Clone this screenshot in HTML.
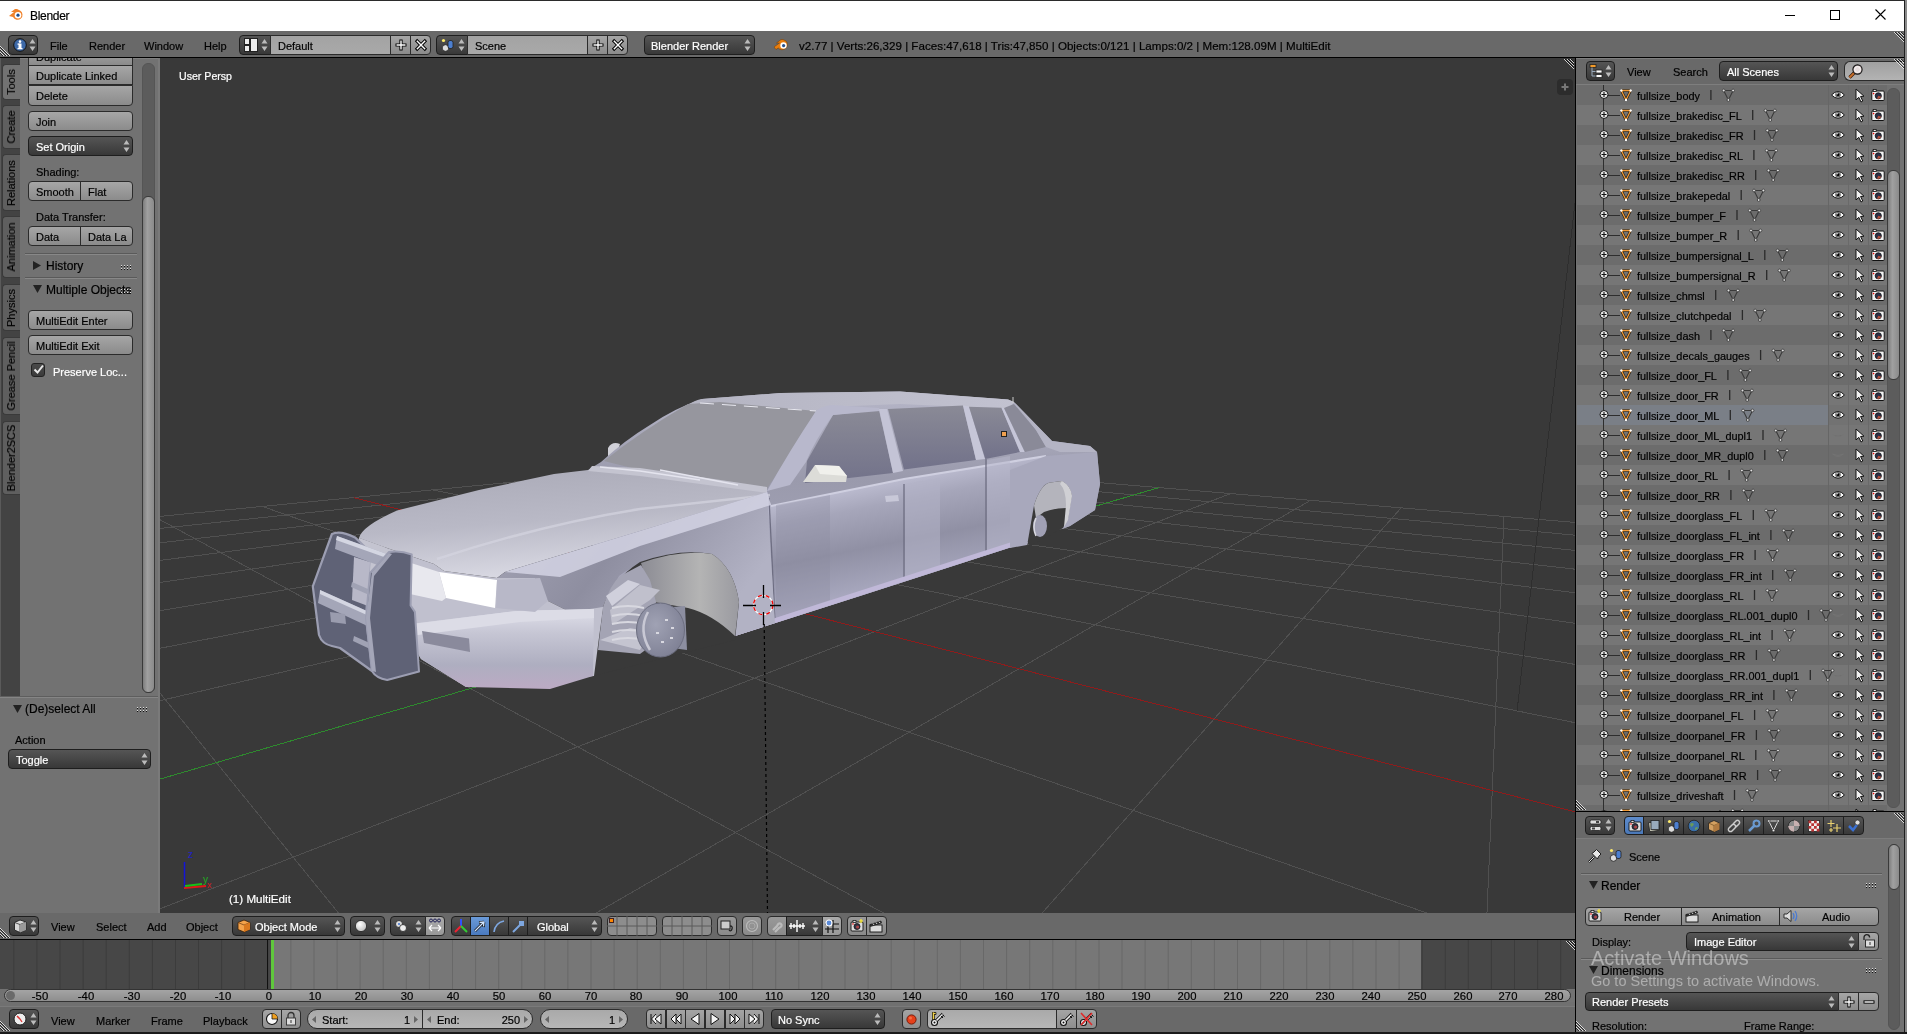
<!DOCTYPE html><html><head><meta charset='utf-8'><style>
*{box-sizing:border-box}
body{margin:0;width:1907px;height:1034px;overflow:hidden;position:relative;background:#727272;font-family:"Liberation Sans",sans-serif;font-size:11px;color:#000}
.a{position:absolute}
.t{position:absolute;white-space:nowrap;-webkit-text-stroke:0.2px currentColor;will-change:transform}
.bt{position:absolute;background:linear-gradient(#a6a6a6,#8b8b8b);border:1px solid #2b2b2b;border-radius:4px}
.mn{position:absolute;background:linear-gradient(#555,#383838);border:1px solid #1e1e1e;border-radius:4px}
.nm{position:absolute;background:linear-gradient(#a9a9a9,#b9b9b9);border:1px solid #2b2b2b;border-radius:4px}
svg{position:absolute;overflow:visible}
</style></head><body><div class=a style="left:0px;top:0px;width:1907px;height:1px;background:#2b2b2b"></div>
<div class=a style="left:0px;top:1px;width:1907px;height:30px;background:#fff"></div>
<svg style="left:8px;top:7px" width="16" height="14" viewBox="0 0 16 14">
<path d="M1 9 L6 5 L3 5 L7 2 L9 2 L12 3.5 A5 5 0 1 1 5 10 Z" fill="#f0822a"/>
<circle cx="10" cy="8.2" r="3.3" fill="#fff"/><circle cx="10" cy="8.2" r="1.6" fill="#1b4d8f"/></svg>
<div class=t style="left:29.5px;top:8.5px;line-height:14px;font-size:12px;letter-spacing:-0.3px;color:#000">Blender</div>
<div class=a style="left:1785px;top:15px;width:10px;height:1px;background:#000"></div>
<div class=a style="left:1830px;top:10px;width:10px;height:10px;border:1px solid #000"></div>
<svg style="left:1875px;top:9px" width="12" height="12"><path d="M0.5 0.5 L10.5 10.5 M10.5 0.5 L0.5 10.5" stroke="#000" stroke-width="1.1"/></svg>
<div class=a style="left:1904px;top:0px;width:1px;height:1034px;background:#1f1f1f"></div>
<div class=a style="left:1905px;top:0px;width:2px;height:1034px;background:#8a8a8a"></div>
<div class=a style="left:0px;top:58px;width:160px;height:639px;background:#727272"></div>
<div class=a style="left:0px;top:58px;width:20px;height:639px;background:#434343"></div>
<div class=a style="left:0px;top:58px;width:1px;height:976px;background:#5a5a5a"></div>
<div class=a style="left:2px;top:64px;width:18px;height:36px;background:#727272;border-radius:4px 0 0 4px;border:1px solid #3a3a3a;border-right:none"></div>
<div class=t style="left:11px;top:82.0px;transform:translate(-50%,-50%) rotate(-90deg);line-height:12px;font-size:11px;color:#000">Tools</div>
<div class=a style="left:2px;top:105px;width:18px;height:44px;background:#5f5f5f;border-radius:4px 0 0 4px;border:1px solid #3a3a3a;border-right:none"></div>
<div class=t style="left:11px;top:127.0px;transform:translate(-50%,-50%) rotate(-90deg);line-height:12px;font-size:11px;color:#000">Create</div>
<div class=a style="left:2px;top:154px;width:18px;height:57px;background:#5f5f5f;border-radius:4px 0 0 4px;border:1px solid #3a3a3a;border-right:none"></div>
<div class=t style="left:11px;top:182.5px;transform:translate(-50%,-50%) rotate(-90deg);line-height:12px;font-size:11px;color:#000">Relations</div>
<div class=a style="left:2px;top:216px;width:18px;height:62px;background:#5f5f5f;border-radius:4px 0 0 4px;border:1px solid #3a3a3a;border-right:none"></div>
<div class=t style="left:11px;top:247.0px;transform:translate(-50%,-50%) rotate(-90deg);line-height:12px;font-size:11px;color:#000">Animation</div>
<div class=a style="left:2px;top:284px;width:18px;height:47px;background:#5f5f5f;border-radius:4px 0 0 4px;border:1px solid #3a3a3a;border-right:none"></div>
<div class=t style="left:11px;top:307.5px;transform:translate(-50%,-50%) rotate(-90deg);line-height:12px;font-size:11px;color:#000">Physics</div>
<div class=a style="left:2px;top:337px;width:18px;height:78px;background:#5f5f5f;border-radius:4px 0 0 4px;border:1px solid #3a3a3a;border-right:none"></div>
<div class=t style="left:11px;top:376.0px;transform:translate(-50%,-50%) rotate(-90deg);line-height:12px;font-size:11px;color:#000">Grease Pencil</div>
<div class=a style="left:2px;top:421px;width:18px;height:74px;background:#5f5f5f;border-radius:4px 0 0 4px;border:1px solid #3a3a3a;border-right:none"></div>
<div class=t style="left:11px;top:458.0px;transform:translate(-50%,-50%) rotate(-90deg);line-height:12px;font-size:11px;color:#000">Blender2SCS</div>
<div class=a style="left:20px;top:58px;width:140px;height:639px;background:#727272"></div>
<div class=a style="left:158px;top:58px;width:2px;height:639px;background:#7a7a7a"></div>
<div class=a style="left:20px;top:58px;width:138px;height:1px;background:#808080"></div>
<div class=a style="left:142px;top:63px;width:13px;height:630px;background:#5c5c5c;border-radius:6px;border:1px solid #555"></div>
<div class=a style="left:142px;top:196px;width:13px;height:497px;background:linear-gradient(90deg,#7d7d7d,#a0a0a0 40%,#8a8a8a);border-radius:6px;border:1px solid #3a3a3a"></div>
<div class=bt style="left:28px;top:47px;width:105px;height:19px;border-radius:0;"></div>
<div class=t style="left:36px;top:50.0px;line-height:14px;color:#000;">Duplicate</div>
<div class=bt style="left:28px;top:65px;width:105px;height:20px;border-radius:0;"></div>
<div class=t style="left:36px;top:68.5px;line-height:14px;color:#000;">Duplicate Linked</div>
<div class=bt style="left:28px;top:85px;width:105px;height:21px;border-radius:0 0 4px 4px;"></div>
<div class=t style="left:36px;top:89.0px;line-height:14px;color:#000;">Delete</div>
<div class=a style="left:20px;top:58px;width:140px;height:0px;"></div>
<div class=bt style="left:28px;top:111px;width:105px;height:20px;"></div>
<div class=t style="left:36px;top:114.5px;line-height:14px;color:#000;">Join</div>
<div class=mn style="left:28px;top:136px;width:105px;height:20px;"></div>
<div class=t style="left:36px;top:139.5px;line-height:14px;color:#fff;">Set Origin</div>
<svg style="left:123px;top:139px" width="7" height="14"><path d="M0.5 5.5 L3.5 1 L6.5 5.5Z M0.5 8.5 L3.5 13 L6.5 8.5Z" fill="#bbb"/></svg>
<div class=t style="left:36px;top:165.0px;line-height:14px;">Shading:</div>
<div class=bt style="left:28px;top:181px;width:53px;height:20px;border-radius:4px 0 0 4px;"></div>
<div class=t style="left:36px;top:184.5px;line-height:14px;color:#000;">Smooth</div>
<div class=bt style="left:80px;top:181px;width:53px;height:20px;border-radius:0 4px 4px 0;"></div>
<div class=t style="left:88px;top:184.5px;line-height:14px;color:#000;">Flat</div>
<div class=t style="left:36px;top:210.0px;line-height:14px;">Data Transfer:</div>
<div class=bt style="left:28px;top:226px;width:53px;height:20px;border-radius:4px 0 0 4px;"></div>
<div class=t style="left:36px;top:229.5px;line-height:14px;color:#000;">Data</div>
<div class=bt style="left:80px;top:226px;width:53px;height:20px;border-radius:0 4px 4px 0;"></div>
<div class=t style="left:88px;top:229.5px;line-height:14px;color:#000;">Data La</div>
<div class=a style="left:25px;top:253px;width:112px;height:1px;background:#5a5a5a"></div>
<div class=a style="left:25px;top:254px;width:112px;height:1px;background:#888"></div>
<svg style="left:33px;top:261px" width="9" height="9"><path d="M0 0 L8 4.5 L0 9Z" fill="#222"/></svg>
<div class=t style="left:45.5px;top:259.0px;line-height:14px;font-size:12px">History</div>
<svg style="left:121px;top:265px" width="12" height="6"><rect x="0" y="0" width="1" height="1" fill="#ddd"/><rect x="0" y="1" width="1" height="1" fill="#111"/><rect x="0" y="3" width="1" height="1" fill="#ddd"/><rect x="0" y="4" width="1" height="1" fill="#111"/><rect x="3" y="0" width="1" height="1" fill="#ddd"/><rect x="3" y="1" width="1" height="1" fill="#111"/><rect x="3" y="3" width="1" height="1" fill="#ddd"/><rect x="3" y="4" width="1" height="1" fill="#111"/><rect x="6" y="0" width="1" height="1" fill="#ddd"/><rect x="6" y="1" width="1" height="1" fill="#111"/><rect x="6" y="3" width="1" height="1" fill="#ddd"/><rect x="6" y="4" width="1" height="1" fill="#111"/><rect x="9" y="0" width="1" height="1" fill="#ddd"/><rect x="9" y="1" width="1" height="1" fill="#111"/><rect x="9" y="3" width="1" height="1" fill="#ddd"/><rect x="9" y="4" width="1" height="1" fill="#111"/></svg>
<div class=a style="left:25px;top:277px;width:112px;height:1px;background:#5a5a5a"></div>
<div class=a style="left:25px;top:278px;width:112px;height:1px;background:#888"></div>
<svg style="left:33px;top:285px" width="9" height="9"><path d="M0 0 L9 0 L4.5 8Z" fill="#222"/></svg>
<div class=t style="left:45.5px;top:283.0px;line-height:14px;font-size:12px">Multiple Objects</div>
<svg style="left:121px;top:289px" width="12" height="6"><rect x="0" y="0" width="1" height="1" fill="#ddd"/><rect x="0" y="1" width="1" height="1" fill="#111"/><rect x="0" y="3" width="1" height="1" fill="#ddd"/><rect x="0" y="4" width="1" height="1" fill="#111"/><rect x="3" y="0" width="1" height="1" fill="#ddd"/><rect x="3" y="1" width="1" height="1" fill="#111"/><rect x="3" y="3" width="1" height="1" fill="#ddd"/><rect x="3" y="4" width="1" height="1" fill="#111"/><rect x="6" y="0" width="1" height="1" fill="#ddd"/><rect x="6" y="1" width="1" height="1" fill="#111"/><rect x="6" y="3" width="1" height="1" fill="#ddd"/><rect x="6" y="4" width="1" height="1" fill="#111"/><rect x="9" y="0" width="1" height="1" fill="#ddd"/><rect x="9" y="1" width="1" height="1" fill="#111"/><rect x="9" y="3" width="1" height="1" fill="#ddd"/><rect x="9" y="4" width="1" height="1" fill="#111"/></svg>
<div class=bt style="left:28px;top:310px;width:105px;height:20px;"></div>
<div class=t style="left:36px;top:313.5px;line-height:14px;color:#000;">MultiEdit Enter</div>
<div class=bt style="left:28px;top:335px;width:105px;height:20px;"></div>
<div class=t style="left:36px;top:338.5px;line-height:14px;color:#000;">MultiEdit Exit</div>
<div class=a style="left:31px;top:363px;width:14px;height:14px;border-radius:3px;background:linear-gradient(#4a4a4a,#3a3a3a);border:1px solid #222"></div>
<svg style="left:32px;top:363px" width="13" height="12"><path d="M2.5 6.5 L5.5 9.5 L11 2.5" stroke="#e8e8e8" stroke-width="2" fill="none"/></svg>
<div class=t style="left:53px;top:364.5px;line-height:14px;color:#fff">Preserve Loc...</div>
<div class=a style="left:0px;top:31px;width:1904px;height:26px;background:#696969"></div>
<div class=a style="left:0px;top:57px;width:1904px;height:1px;background:#000"></div>
<svg style="left:0px;top:46px" width="10" height="10"><path d="M0 0 L10 10" stroke="#fff" stroke-width="0.9" opacity="0.85"/><path d="M0 1 L9 10" stroke="#000" stroke-width="0.9" opacity="0.7"/><path d="M0 3 L7 10" stroke="#fff" stroke-width="0.9" opacity="0.85"/><path d="M0 4 L6 10" stroke="#000" stroke-width="0.9" opacity="0.7"/><path d="M0 6 L4 10" stroke="#fff" stroke-width="0.9" opacity="0.85"/><path d="M0 7 L3 10" stroke="#000" stroke-width="0.9" opacity="0.7"/></svg>
<div class=mn style="left:8px;top:35px;width:30px;height:20px;"></div>
<svg style="left:13px;top:38px" width="14" height="14"><circle cx="7" cy="7" r="6.3" fill="#3d69a8" stroke="#111" stroke-width="1"/>
<rect x="5.5" y="5.5" width="3" height="5" fill="#fff"/><rect x="4.5" y="10" width="5" height="1.3" fill="#fff"/><rect x="4.5" y="5.5" width="2" height="1.2" fill="#fff"/><circle cx="7" cy="3.6" r="1.3" fill="#fff"/></svg>
<svg style="left:29px;top:38px" width="7" height="14"><path d="M0.5 5.5 L3.5 1 L6.5 5.5Z M0.5 8.5 L3.5 13 L6.5 8.5Z" fill="#bbb"/></svg>
<div class=t style="left:50px;top:38.5px;line-height:14px;">File</div>
<div class=t style="left:88.5px;top:38.5px;line-height:14px;">Render</div>
<div class=t style="left:143.5px;top:38.5px;line-height:14px;">Window</div>
<div class=t style="left:203.5px;top:38.5px;line-height:14px;">Help</div>
<div class=mn style="left:239px;top:35px;width:32px;height:20px;border-radius:4px 0 0 4px;"></div>
<svg style="left:244px;top:38px" width="14" height="14"><rect x="0.5" y="0.5" width="5" height="6" fill="#eee" stroke="#222"/><rect x="0.5" y="7.5" width="5" height="6" fill="#eee" stroke="#222"/><rect x="6.5" y="0.5" width="7" height="13" fill="#eee" stroke="#222"/></svg>
<svg style="left:261px;top:38px" width="7" height="14"><path d="M0.5 5.5 L3.5 1 L6.5 5.5Z M0.5 8.5 L3.5 13 L6.5 8.5Z" fill="#bbb"/></svg>
<div class=nm style="left:270px;top:35px;width:121px;height:20px;border-radius:0;background:linear-gradient(#a3a3a3,#a9a9a9)"></div>
<div class=t style="left:278px;top:38.5px;line-height:14px;color:#000;">Default</div>
<div class=bt style="left:390px;top:35px;width:21px;height:20px;border-radius:0;"></div>
<div class=bt style="left:410px;top:35px;width:21px;height:20px;border-radius:0 4px 4px 0;"></div>
<svg style="left:394px;top:38px" width="14" height="14"><path d="M7 1.5 V12.5 M1.5 7 H12.5" stroke="#000" stroke-width="3.2"/><path d="M7 2.5 V11.5 M2.5 7 H11.5" stroke="#fff" stroke-width="1.4"/></svg>
<svg style="left:414px;top:38px" width="14" height="14"><path d="M2 2 L12 12 M12 2 L2 12" stroke="#000" stroke-width="3.2"/><path d="M2.8 2.8 L11.2 11.2 M11.2 2.8 L2.8 11.2" stroke="#fff" stroke-width="1.4"/></svg>
<div class=mn style="left:436px;top:35px;width:32px;height:20px;border-radius:4px 0 0 4px;"></div>
<svg style="left:441px;top:38px" width="14" height="14"><circle cx="4.5" cy="10" r="3.3" fill="#ddd" stroke="#222" stroke-width="0.8"/><rect x="7" y="2.5" width="5" height="8" rx="2" fill="#4c7fd0" stroke="#222" stroke-width="0.8"/><circle cx="2.5" cy="2.5" r="1.6" fill="#ffec6b"/></svg>
<svg style="left:458px;top:38px" width="7" height="14"><path d="M0.5 5.5 L3.5 1 L6.5 5.5Z M0.5 8.5 L3.5 13 L6.5 8.5Z" fill="#bbb"/></svg>
<div class=nm style="left:467px;top:35px;width:121px;height:20px;border-radius:0;background:linear-gradient(#a3a3a3,#a9a9a9)"></div>
<div class=t style="left:475px;top:38.5px;line-height:14px;color:#000;">Scene</div>
<div class=bt style="left:587px;top:35px;width:21px;height:20px;border-radius:0;"></div>
<div class=bt style="left:607px;top:35px;width:21px;height:20px;border-radius:0 4px 4px 0;"></div>
<svg style="left:591px;top:38px" width="14" height="14"><path d="M7 1.5 V12.5 M1.5 7 H12.5" stroke="#000" stroke-width="3.2"/><path d="M7 2.5 V11.5 M2.5 7 H11.5" stroke="#fff" stroke-width="1.4"/></svg>
<svg style="left:611px;top:38px" width="14" height="14"><path d="M2 2 L12 12 M12 2 L2 12" stroke="#000" stroke-width="3.2"/><path d="M2.8 2.8 L11.2 11.2 M11.2 2.8 L2.8 11.2" stroke="#fff" stroke-width="1.4"/></svg>
<div class=mn style="left:644px;top:35px;width:111px;height:20px;"></div>
<div class=t style="left:651px;top:38.5px;line-height:14px;color:#fff;">Blender Render</div>
<svg style="left:744px;top:38px" width="7" height="14"><path d="M0.5 5.5 L3.5 1 L6.5 5.5Z M0.5 8.5 L3.5 13 L6.5 8.5Z" fill="#bbb"/></svg>
<svg style="left:773px;top:37px" width="17" height="16"><path d="M1 10 L6.5 6 L3.5 6 L8 2.5 L10 2.5 L13 4 A5.2 5.2 0 1 1 5.2 11 L3 12.5 Z" fill="#e87d0d" stroke="#6b3a08" stroke-width="0.5"/><circle cx="10.5" cy="8.5" r="3.2" fill="#fff"/><circle cx="10.6" cy="8.6" r="1.6" fill="#24518f"/></svg>
<div class=t style="left:799px;top:38.5px;line-height:14px;font-size:11.6px">v2.77 | Verts:26,329 | Faces:47,618 | Tris:47,850 | Objects:0/121 | Lamps:0/2 | Mem:128.09M | MultiEdit</div>
<svg style="left:1894px;top:32px;" width="10" height="10"><path d="M0 0 L10 10" stroke="#fff" stroke-width="0.9" opacity="0.85"/><path d="M1 0 L10 9" stroke="#000" stroke-width="0.9" opacity="0.7"/><path d="M3 0 L10 7" stroke="#fff" stroke-width="0.9" opacity="0.85"/><path d="M4 0 L10 6" stroke="#000" stroke-width="0.9" opacity="0.7"/><path d="M6 0 L10 4" stroke="#fff" stroke-width="0.9" opacity="0.85"/><path d="M7 0 L10 3" stroke="#000" stroke-width="0.9" opacity="0.7"/></svg>
<div class=a style="left:160px;top:58px;width:1415px;height:855px;background:#393939;overflow:hidden"><svg style="left:0;top:0" width="1415" height="855" viewBox="0 0 1415 855"><g shape-rendering="crispEdges"><line x1="-1452.9" y1="599.4" x2="621.6" y2="398.0" stroke="#505050" stroke-width="1"/><line x1="-1452.9" y1="599.4" x2="-45626.2" y2="10690.9" stroke="#505050" stroke-width="1"/><line x1="-1657.1" y1="646.1" x2="655.8" y2="400.9" stroke="#505050" stroke-width="1"/><line x1="-1029.3" y1="558.3" x2="-39136.8" y2="11991.2" stroke="#505050" stroke-width="1"/><line x1="-1944.8" y1="711.8" x2="692.8" y2="404.0" stroke="#505050" stroke-width="1"/><line x1="-716.9" y1="528.0" x2="-23517.4" y2="10474.9" stroke="#505050" stroke-width="1"/><line x1="-2380.6" y1="811.3" x2="733.0" y2="407.3" stroke="#505050" stroke-width="1"/><line x1="-477.0" y1="504.7" x2="-11523.9" y2="9310.5" stroke="#505050" stroke-width="1"/><line x1="-3118.5" y1="979.9" x2="776.8" y2="411.0" stroke="#505050" stroke-width="1"/><line x1="-287.0" y1="486.2" x2="-2025.1" y2="8388.4" stroke="#505050" stroke-width="1"/><line x1="-4639.2" y1="1327.3" x2="824.6" y2="415.0" stroke="#505050" stroke-width="1"/><line x1="-132.9" y1="471.3" x2="5684.1" y2="7640.0" stroke="#505050" stroke-width="1"/><line x1="-9595.9" y1="2459.7" x2="877.1" y2="419.4" stroke="#505050" stroke-width="1"/><line x1="-5.2" y1="458.9" x2="12065.8" y2="7020.4" stroke="#505050" stroke-width="1"/><line x1="-19384.2" y1="5172.4" x2="935.0" y2="424.2" stroke="#505050" stroke-width="1"/><line x1="102.2" y1="448.4" x2="17435.8" y2="6499.1" stroke="#505050" stroke-width="1"/><line x1="-12605.5" y1="5739.6" x2="1070.5" y2="435.6" stroke="#505050" stroke-width="1"/><line x1="272.9" y1="431.9" x2="4641.8" y2="1322.5" stroke="#505050" stroke-width="1"/><line x1="-8600.0" y1="6074.7" x2="1150.6" y2="442.3" stroke="#505050" stroke-width="1"/><line x1="341.8" y1="425.2" x2="3359.0" y2="934.7" stroke="#505050" stroke-width="1"/><line x1="-4077.8" y1="6453.1" x2="1241.1" y2="449.9" stroke="#505050" stroke-width="1"/><line x1="402.5" y1="419.3" x2="2795.6" y2="764.4" stroke="#505050" stroke-width="1"/><line x1="1068.0" y1="6883.7" x2="1344.0" y2="458.5" stroke="#505050" stroke-width="1"/><line x1="456.3" y1="414.1" x2="2479.0" y2="668.7" stroke="#505050" stroke-width="1"/><line x1="6975.9" y1="7378.0" x2="1462.2" y2="468.4" stroke="#505050" stroke-width="1"/><line x1="504.3" y1="409.4" x2="2276.1" y2="607.4" stroke="#505050" stroke-width="1"/><line x1="13828.8" y1="7951.4" x2="1599.2" y2="479.8" stroke="#505050" stroke-width="1"/><line x1="547.3" y1="405.2" x2="2135.0" y2="564.7" stroke="#505050" stroke-width="1"/><line x1="21873.1" y1="8624.4" x2="1760.1" y2="493.3" stroke="#505050" stroke-width="1"/><line x1="586.3" y1="401.5" x2="2031.2" y2="533.4" stroke="#505050" stroke-width="1"/><line x1="31449.1" y1="9425.7" x2="1951.6" y2="509.3" stroke="#505050" stroke-width="1"/><line x1="621.6" y1="398.0" x2="1951.6" y2="509.3" stroke="#505050" stroke-width="1"/><line x1="-16178.0" y1="5440.7" x2="999.1" y2="429.6" stroke="#2e8a2e" stroke-width="1"/><line x1="193.8" y1="439.6" x2="10454.3" y2="3079.5" stroke="#8e1c1c" stroke-width="1"/><line x1="1415" y1="144.7" x2="1357" y2="653.4" stroke="#2e2e2e" stroke-width="1"/></g><g transform="translate(-160 -58)"><defs>
<linearGradient id="gHood" x1="0" y1="0" x2="0.3" y2="1"><stop offset="0" stop-color="#a9a9b6"/><stop offset="0.55" stop-color="#b9b9c6"/><stop offset="1" stop-color="#d8d8e2"/></linearGradient>
<linearGradient id="gSide" x1="0" y1="0" x2="0" y2="1"><stop offset="0" stop-color="#b6b6c8"/><stop offset="0.35" stop-color="#9a9aac"/><stop offset="0.7" stop-color="#a4a4b8"/><stop offset="1" stop-color="#b8b4cc"/></linearGradient>
<linearGradient id="gFender" x1="0" y1="0" x2="1" y2="0.4"><stop offset="0" stop-color="#a7a7b8"/><stop offset="0.5" stop-color="#8e8ea0"/><stop offset="1" stop-color="#b2b2c4"/></linearGradient>
<linearGradient id="gRoof" x1="0" y1="0" x2="1" y2="0"><stop offset="0" stop-color="#b4b4c2"/><stop offset="1" stop-color="#c2c2d0"/></linearGradient>
<linearGradient id="gWin" x1="0" y1="0" x2="0" y2="1"><stop offset="0" stop-color="#8a8a96"/><stop offset="1" stop-color="#72728a"/></linearGradient>
<linearGradient id="gBump" x1="0" y1="0" x2="0" y2="1"><stop offset="0" stop-color="#e0e0ea"/><stop offset="0.3" stop-color="#c6c6d4"/><stop offset="0.7" stop-color="#aeaec0"/><stop offset="1" stop-color="#bcaac4"/></linearGradient>
<linearGradient id="gBar" x1="0" y1="0" x2="1" y2="0"><stop offset="0" stop-color="#6a6c80"/><stop offset="1" stop-color="#5c5e72"/></linearGradient>
<linearGradient id="gLiner" x1="0" y1="0" x2="1" y2="0"><stop offset="0" stop-color="#8c8c94"/><stop offset="0.6" stop-color="#b4b4b4"/><stop offset="1" stop-color="#9a9aa0"/></linearGradient>
<radialGradient id="gDisc" cx="0.4" cy="0.4" r="0.7"><stop offset="0" stop-color="#a0a2b4"/><stop offset="1" stop-color="#7c7e92"/></radialGradient>
<linearGradient id="gSide2" gradientUnits="userSpaceOnUse" x1="900" y1="478" x2="924" y2="600"><stop offset="0" stop-color="#bcbcd0"/><stop offset="0.18" stop-color="#a6a6ba"/><stop offset="0.5" stop-color="#9090a4"/><stop offset="0.8" stop-color="#a4a4ba"/><stop offset="1" stop-color="#b6b2cc"/></linearGradient></defs><path d="M608 448 Q612 441 620 444 L617 454 L608 457Z" fill="#d0d0d8" /><path d="M588 470 L601 462 Q625 440 650 425 Q675 408 702 399 L781 393 L900 391.5 L1008 399.5 L1014 402 L1052 441 L1090 446 L1097 452 L1100 484 L1095 510 L1070 526 L1062 529 L1032 533 L1027 542 L860 596 L735 636 L600 640 Z" fill="url(#gSide)" /><path d="M688 405 Q695 400 702 399 L781 393 L900 391.5 L1008 399.5 L1014 402 L1008 409 L900 404 L828 407 L816 411 Z" fill="url(#gRoof)" /><path d="M604 461 Q640 432 688 404 L720 402 L816 411 Q800 440 766 490 L700 478 L640 470 Z" fill="#96969e" /><path d="M700 403 L816 411" fill="none" stroke="#e8e8f0" stroke-width="1" stroke-dasharray="14 8"/><path d="M833 415 L879 410 L893 473 L805 483 L807 461 Z" fill="url(#gWin)" /><path d="M816 411 Q822 406 832 405 L879 408 L880 411 L833 415 Q815 440 806 462 L790 485 L767 491 Q790 450 816 411Z" fill="#b8b8cc" /><path d="M879 409 L887 409 L903 471 L893 473Z" fill="#c4c4d6" /><path d="M888 409 L963 405.5 L976 460 L904 469.5 Z" fill="url(#gWin)" /><path d="M963 405.5 L969 406.5 L985 459 L976 460Z" fill="#c6c6d8" /><path d="M969 406.7 L1001.5 407.8 L1020 452 L985.3 459Z" fill="url(#gWin)" /><path d="M1001.5 407.8 L1004 408 L1024.7 452 L1020 452Z" fill="#c6c6d8" /><path d="M1004 408 L1014 404 L1036 430 L1046 447 L1025 452Z" fill="#8a8a98" /><path d="M1014 402 L1052 441 L1090 446 L1097 452 L1060 452 L1046 447 L1036 430 Z" fill="#b4b4c4" /><path d="M803 482 L815 465 L839 466 L847 476 L846 482 Z" fill="#dcdcd8" /><path d="M815 465 L839 466 L847 476 L820 474Z" fill="#f0f0ec" /><path d="M767 491 L771 506 L904 479 L1046 456 L1062 470 L1064 482 L1045 484 L1036 503 L1032 533 L1027 542 L860 596 L735 636 Q739 600 740 560 Z" fill="url(#gSide2)" /><path d="M771 506 L904 479 L1046 456" fill="none" stroke="#cfcfe0" stroke-width="2.2"/><path d="M769 498 Q772 560 775 620" fill="none" stroke="#6e6e82" stroke-width="1.3"/><path d="M904 484 L904 579" fill="none" stroke="#6e6e82" stroke-width="1.3"/><path d="M986 459 L986 552" fill="none" stroke="#6e6e82" stroke-width="1.3"/><path d="M905 484 L940 478 L940 568 L905 579Z" fill="#b2b2c6" opacity="0.55"/><path d="M987 460 L1010 456 L1012 545 L987 552Z" fill="#b8b8cc" opacity="0.5"/><path d="M776 505 L830 495 L830 600 L776 618Z" fill="#8c8ca0" opacity="0.35"/><path d="M735 631 L1027 537 L1027 542 L735 636Z" fill="#c0b8d8" /><path d="M885 496 L898 495 L899 501 L886 502Z" fill="#c8c8d8" /><path d="M1015 476 L1025 475 L1026 481 L1016 482Z" fill="#c8c8d8" /><path d="M1046 456 L1097 452 L1100 484 L1095 510 L1070 526 L1062 529 L1064 482 L1045 484 L1036 503 L1032 533 L1027 545 L1010 548 L1010 470Z" fill="#a8a8bc" /><path d="M1027.7 542 L1034 505.5 Q1040 486 1049 482.8 L1061.7 480.9 Q1070 485 1071.8 495.4 L1068 518 L1063 528 L1030 546Z" fill="#393939" /><path d="M1034 505.5 Q1040 486 1049 482.8 L1061.7 480.9 Q1070 485 1071.8 495.4 L1068 518 L1066 508 Q1055 508 1044 512 L1036 518Z" fill="#b4b4bc" /><path d="M1062 481 Q1071 486 1072 496 L1068 520 L1064 527 L1066 505 Q1066 490 1060 484Z" fill="#d0d0d4" /><ellipse cx="1040" cy="526" rx="7" ry="11" fill="#a0a0b4"/><path d="M1036 518 Q1032 527 1036 536" fill="none" stroke="#d8d8e0" stroke-width="1.5"/><path d="M359 538 Q362 526 397 510.5 L479 490 L554 474 L588 470 L640 470 L767 491 L767 493 L640 531 L505 572 L497 578 L444 571 L434 564 L384 547 Z" fill="url(#gHood)" /><path d="M437 559 Q540 525 640 509 L770 495" fill="none" stroke="#d4d4e0" stroke-width="2.5" opacity="0.7"/><path d="M592 466 L640 468 L767 487 L767 493 L640 476 L588 471Z" fill="#c4c4d0" /><path d="M600 467 L640 471 L700 480 M660 470 L738 485" fill="none" stroke="#e4e4ee" stroke-width="1.6"/><path d="M497 578 L505 572 L640 531 L767 492 L775 623 L735 636 L739 602 Q735 570 712 554 L681 551.6 Q640 560 619 576 L603 607 L593 610 L570 612 L548 601 L535 578Z" fill="url(#gFender)" /><path d="M505 572 L640 531 L767 492 L771 505 L640 546 L560 577Z" fill="#d4d4e4" opacity="0.85"/><path d="M603 607 Q612 580 640 562 Q680 548 712 554 Q734 568 739 602 L735 640 L593 676Z" fill="#393939" /><path d="M641 563 Q680 549 712 554 Q734 568 739 602 L735 636 Q712 614 688 608 L654 602 L648 585Z" fill="url(#gLiner)" /><path d="M603 607 Q610 585 620 576 L641 565 L650 580 L656 602 L648 648 L640 654 L598 650Z" fill="#a4a4b4" /><path d="M606 596 L628 580 L640 584 L612 606Z" fill="#d0d0dc" /><path d="M600 640 L630 628 L650 632 L640 650Z" fill="#c4c4d0" /><path d="M610 610 L640 585 L660 590 L650 600 L612 625Z" fill="#c0c0cc" /><path d="M612 608 Q628 604 644 608" fill="none" stroke="#d8d8e0" stroke-width="2"/><path d="M612 616 Q628 612 644 616" fill="none" stroke="#d8d8e0" stroke-width="2"/><path d="M612 624 Q628 620 644 624" fill="none" stroke="#d8d8e0" stroke-width="2"/><path d="M612 632 Q628 628 644 632" fill="none" stroke="#d8d8e0" stroke-width="2"/><path d="M612 640 Q628 636 644 640" fill="none" stroke="#d8d8e0" stroke-width="2"/><path d="M672 607 L685 606 L687 650 L672 648Z" fill="#8c8ea0" /><ellipse cx="660.5" cy="630" rx="24" ry="27" fill="url(#gDisc)" stroke="#6c6e80" stroke-width="1"/><path d="M648 612 Q638 630 650 650" stroke="#c8c8d4" stroke-width="2.5" fill="none"/><rect x="665" y="619" width="3" height="2" fill="#d8d8e0"/><rect x="671" y="627" width="3" height="2" fill="#d8d8e0"/><rect x="670" y="637" width="3" height="2" fill="#d8d8e0"/><rect x="661" y="641" width="3" height="2" fill="#d8d8e0"/><rect x="656" y="632" width="3" height="2" fill="#d8d8e0"/><path d="M359 538 L384 547 L434 564 L444 571 L497 578 L535 578 L548 601 L570 612 L603 607 L594 676 L466 687 L421 659 L402 625 L380 620 L352 590Z" fill="#c0c0ce" /><path d="M402 625 L517 611 L594 609 L593 676 L550 689 L466 687 L421 659 Z" fill="url(#gBump)" /><path d="M404 625 L517 611 L594 609 L594 618 L520 622 L410 636Z" fill="#dcdce6" /><path d="M422 631 L469 638.5 L470 652 L424 643Z" fill="#8a8a9c" /><path d="M439 572 L497 580 L495 608 L446 598Z" fill="#ffffff" /><path d="M411 563 L439 572 L446 598 L442 601 L410 594Z" fill="#e8e8ee" /><path d="M497 580 L540 578 L548 601 L535 612 L496 608Z" fill="#b8b8c8" /><path d="M359 538 L384 547 L411 563 L410 594 L402 625 L380 620 L352 590Z" fill="#c4c4d0" /><path d="M331.9 534 Q340 530 355 537.4 L370 552 L366 618 L372 671 L340 648 L331.9 646 Q322 644 319 635 L312.8 586.4 Z" fill="#5f6276" stroke="#9c9eb2" stroke-width="2.2" stroke-linejoin="round"/><path d="M354 557 L370 562 L368 606 L352 600Z" fill="#b8b8c8" /><path d="M337 536 L398 558 L396 572 L335 549Z" fill="#a4a6b8" /><path d="M337 536 L398 558 L398 562 L336 540Z" fill="#d4d6e2" /><path d="M320 590 L378 616 L376 630 L318 603Z" fill="#a4a6b8" /><path d="M320 590 L378 616 L378 620 L320 594Z" fill="#d4d6e2" /><path d="M352 582 L368 589 L367 594 L351 587Z" fill="#a0a2b4" /><path d="M354 636 L372 644 L370 649 L353 641Z" fill="#a0a2b4" /><path d="M330 612 L345 614 L346 624 L331 622Z" fill="#9a9cae" /><path d="M370 573 L389 552 Q400 550 411.7 554.5 L410.6 605.5 L414.9 611.9 L419 671.5 L387.2 680 Q376 678 372.3 671.5 L366 618.3 Z" fill="#5f6276" stroke="#9c9eb2" stroke-width="2" stroke-linejoin="round"/><path d="M372 572 L389 553 L392 554 L374 576 L370 618 L376 672 L372 671 L366 618Z" fill="#a4a6b8" /><path d="M1013 397 L1013 403" fill="none" stroke="#ccc" stroke-width="1"/><rect x="1001.5" y="431.5" width="5" height="5" fill="#f0a050" stroke="#222" stroke-width="1"/></g><g transform="translate(-160 -58)"><line x1="764.2" y1="624" x2="767.5" y2="913" stroke="#000" stroke-width="1.2" stroke-dasharray="3 3"/><circle cx="763.2" cy="605" r="9.7" fill="none" stroke="#fff" stroke-width="1.3"/><circle cx="763.2" cy="605" r="9.7" fill="none" stroke="#e00" stroke-width="1.3" stroke-dasharray="4 4"/><path d="M743 605.5 H756 M770 605.5 H781 M763.5 585 V598 M763.5 612 V625" stroke="#000" stroke-width="1.3"/></g></svg></div>
<div class=t style="left:179px;top:68.5px;line-height:14px;color:#fff;font-size:10.6px">User Persp</div>
<div class=t style="left:229px;top:891.5px;line-height:14px;color:#fff;font-size:11.6px">(1) MultiEdit</div>
<svg style="left:176px;top:850px" width="40" height="40"><path d="M8.5 12 V38" stroke="#1414d8" stroke-width="1.5"/><path d="M8 38 L30 36" stroke="#e01818" stroke-width="2"/><path d="M9 36 L26 34" stroke="#18c018" stroke-width="2"/><text x="12" y="8" font-size="10" fill="#2020c8" font-family="Liberation Sans">z</text><text x="27" y="33" font-size="10" fill="#20b020" font-family="Liberation Sans">y</text><text x="31" y="38" font-size="9" fill="#d02020" font-family="Liberation Sans">x</text></svg>
<div class=a style="left:1557px;top:79px;width:16px;height:16px;border-radius:4px;background:#2c2c2c"></div>
<svg style="left:1561px;top:83px" width="8" height="8"><path d="M4 0.5 V7.5 M0.5 4 H7.5" stroke="#777" stroke-width="2"/></svg>
<svg style="left:1564px;top:59px;" width="10" height="10"><path d="M0 0 L10 10" stroke="#fff" stroke-width="0.9" opacity="0.85"/><path d="M1 0 L10 9" stroke="#000" stroke-width="0.9" opacity="0.7"/><path d="M3 0 L10 7" stroke="#fff" stroke-width="0.9" opacity="0.85"/><path d="M4 0 L10 6" stroke="#000" stroke-width="0.9" opacity="0.7"/><path d="M6 0 L10 4" stroke="#fff" stroke-width="0.9" opacity="0.85"/><path d="M7 0 L10 3" stroke="#000" stroke-width="0.9" opacity="0.7"/></svg>
<div class=a style="left:0px;top:697px;width:160px;height:216px;background:#727272"></div>
<div class=a style="left:0px;top:696px;width:158px;height:1px;background:#5e5e5e"></div>
<div class=a style="left:0px;top:697px;width:158px;height:1px;background:#858585"></div>
<div class=a style="left:158px;top:697px;width:2px;height:216px;background:#7a7a7a"></div>
<svg style="left:13px;top:705px" width="9" height="9"><path d="M0 0 L9 0 L4.5 8Z" fill="#222"/></svg>
<div class=t style="left:25px;top:702.0px;line-height:14px;font-size:12px">(De)select All</div>
<svg style="left:137px;top:707px" width="12" height="6"><rect x="0" y="0" width="1" height="1" fill="#ddd"/><rect x="0" y="1" width="1" height="1" fill="#111"/><rect x="0" y="3" width="1" height="1" fill="#ddd"/><rect x="0" y="4" width="1" height="1" fill="#111"/><rect x="3" y="0" width="1" height="1" fill="#ddd"/><rect x="3" y="1" width="1" height="1" fill="#111"/><rect x="3" y="3" width="1" height="1" fill="#ddd"/><rect x="3" y="4" width="1" height="1" fill="#111"/><rect x="6" y="0" width="1" height="1" fill="#ddd"/><rect x="6" y="1" width="1" height="1" fill="#111"/><rect x="6" y="3" width="1" height="1" fill="#ddd"/><rect x="6" y="4" width="1" height="1" fill="#111"/><rect x="9" y="0" width="1" height="1" fill="#ddd"/><rect x="9" y="1" width="1" height="1" fill="#111"/><rect x="9" y="3" width="1" height="1" fill="#ddd"/><rect x="9" y="4" width="1" height="1" fill="#111"/></svg>
<div class=t style="left:15px;top:733.0px;line-height:14px;">Action</div>
<div class=mn style="left:8px;top:749px;width:143px;height:20px;"></div>
<div class=t style="left:16px;top:752.5px;line-height:14px;color:#fff;">Toggle</div>
<svg style="left:141px;top:752px" width="7" height="14"><path d="M0.5 5.5 L3.5 1 L6.5 5.5Z M0.5 8.5 L3.5 13 L6.5 8.5Z" fill="#bbb"/></svg>
<div class=a style="left:0px;top:913px;width:1576px;height:26px;background:#696969"></div>
<div class=a style="left:0px;top:939px;width:1576px;height:1px;background:#000"></div>
<svg style="left:0px;top:928px" width="10" height="10"><path d="M0 0 L10 10" stroke="#fff" stroke-width="0.9" opacity="0.85"/><path d="M0 1 L9 10" stroke="#000" stroke-width="0.9" opacity="0.7"/><path d="M0 3 L7 10" stroke="#fff" stroke-width="0.9" opacity="0.85"/><path d="M0 4 L6 10" stroke="#000" stroke-width="0.9" opacity="0.7"/><path d="M0 6 L4 10" stroke="#fff" stroke-width="0.9" opacity="0.85"/><path d="M0 7 L3 10" stroke="#000" stroke-width="0.9" opacity="0.7"/></svg>
<div class=mn style="left:9px;top:916px;width:30px;height:20px;"></div>
<svg style="left:13px;top:919px" width="15" height="14"><path d="M1.5 3.5 L7 1 L13 3 L13 11 L7 13.5 L1.5 11 Z" fill="#d8d8d8" stroke="#222" stroke-width="0.9"/><path d="M1.5 3.5 L7 5.5 L13 3 M7 5.5 L7 13.5" stroke="#333" stroke-width="0.8" fill="none"/><path d="M7 5.5 L13 3 L13 11 L7 13.5Z" fill="#9a9a9a"/></svg>
<svg style="left:30px;top:919px" width="7" height="14"><path d="M0.5 5.5 L3.5 1 L6.5 5.5Z M0.5 8.5 L3.5 13 L6.5 8.5Z" fill="#bbb"/></svg>
<div class=t style="left:51px;top:920.0px;line-height:14px;">View</div>
<div class=t style="left:96px;top:920.0px;line-height:14px;">Select</div>
<div class=t style="left:147px;top:920.0px;line-height:14px;">Add</div>
<div class=t style="left:186px;top:920.0px;line-height:14px;">Object</div>
<div class=mn style="left:232px;top:916px;width:113px;height:20px;"></div>
<div class=t style="left:255px;top:919.5px;line-height:14px;color:#fff;">Object Mode</div>
<svg style="left:237px;top:919px" width="14" height="14"><path d="M1 3.5 L7 1 L13 3.5 L13 10.5 L7 13 L1 10.5Z" fill="#f3a24a" stroke="#3a2008" stroke-width="0.8"/><path d="M1 3.5 L7 6 L13 3.5" stroke="#6a3a10" stroke-width="0.7" fill="none"/><path d="M7 6 L13 3.5 L13 10.5 L7 13Z" fill="#d9781e"/></svg>
<svg style="left:334px;top:919px" width="7" height="14"><path d="M0.5 5.5 L3.5 1 L6.5 5.5Z M0.5 8.5 L3.5 13 L6.5 8.5Z" fill="#bbb"/></svg>
<div class=mn style="left:350px;top:916px;width:35px;height:20px;"></div>
<svg style="left:354px;top:919px" width="14" height="14"><defs><radialGradient id="sph" cx="0.4" cy="0.35" r="0.7"><stop offset="0" stop-color="#fff"/><stop offset="1" stop-color="#bbb"/></radialGradient></defs><circle cx="7" cy="7" r="5.6" fill="url(#sph)" stroke="#222" stroke-width="0.8"/></svg>
<svg style="left:374px;top:919px" width="7" height="14"><path d="M0.5 5.5 L3.5 1 L6.5 5.5Z M0.5 8.5 L3.5 13 L6.5 8.5Z" fill="#bbb"/></svg>
<div class=mn style="left:390px;top:916px;width:36px;height:20px;border-radius:4px 0 0 4px;"></div>
<svg style="left:394px;top:919px" width="14" height="14"><circle cx="5" cy="5" r="3.5" fill="#ddd" stroke="#222" stroke-width="0.8"/><circle cx="9" cy="9" r="3.5" fill="#eee" stroke="#222" stroke-width="0.8"/><circle cx="5" cy="5" r="1" fill="#3a6fd0"/></svg>
<svg style="left:415px;top:919px" width="7" height="14"><path d="M0.5 5.5 L3.5 1 L6.5 5.5Z M0.5 8.5 L3.5 13 L6.5 8.5Z" fill="#bbb"/></svg>
<div class=bt style="left:425px;top:916px;width:20px;height:20px;border-radius:0 4px 4px 0;background:linear-gradient(#aaa,#999)"></div>
<svg style="left:428px;top:918px" width="14" height="16"><circle cx="3" cy="2.5" r="1.5" fill="none" stroke="#225" stroke-width="1"/><circle cx="7" cy="2.5" r="1.5" fill="none" stroke="#225" stroke-width="1"/><circle cx="11" cy="2.5" r="1.5" fill="none" stroke="#225" stroke-width="1"/><path d="M1 10 H13 M1 10 L4 7 M1 10 L4 13 M13 10 L10 7 M13 10 L10 13" stroke="#fff" stroke-width="1.2" fill="none"/></svg>
<div class=mn style="left:451px;top:916px;width:20px;height:20px;border-radius:4px 0 0 4px;"></div>
<svg style="left:453px;top:918px" width="16" height="16"><path d="M8 8 V1" stroke="#3050ff" stroke-width="2"/><path d="M8 8 L2 14" stroke="#e23" stroke-width="2"/><path d="M8 8 L14 14" stroke="#3c3" stroke-width="2"/></svg>
<div class=mn style="left:470px;top:916px;width:20px;height:20px;border-radius:0;background:linear-gradient(#6a9ad8,#4a7ac0)"></div>
<svg style="left:472px;top:918px" width="16" height="16"><path d="M3 13 L12 4 M12 4 L7 4.5 M12 4 L11.5 9" stroke="#111" stroke-width="2.6" fill="none"/><path d="M3 13 L12 4 M12 4 L7.5 4.5 M12 4 L11.5 8.5" stroke="#cfe3ff" stroke-width="1.3" fill="none"/></svg>
<div class=mn style="left:489px;top:916px;width:20px;height:20px;border-radius:0;"></div>
<svg style="left:491px;top:918px" width="16" height="16"><path d="M3 14 Q4 5 13 3" stroke="#7ea7e0" stroke-width="1.6" fill="none"/></svg>
<div class=mn style="left:508px;top:916px;width:20px;height:20px;border-radius:0;"></div>
<svg style="left:510px;top:918px" width="16" height="16"><path d="M3 14 L10 7" stroke="#7ea7e0" stroke-width="2"/><rect x="9" y="3" width="5" height="5" fill="#7ea7e0"/></svg>
<div class=mn style="left:527px;top:916px;width:75px;height:20px;border-radius:0 4px 4px 0;"></div>
<div class=t style="left:537px;top:919.5px;line-height:14px;color:#fff;">Global</div>
<svg style="left:591px;top:919px" width="7" height="14"><path d="M0.5 5.5 L3.5 1 L6.5 5.5Z M0.5 8.5 L3.5 13 L6.5 8.5Z" fill="#bbb"/></svg>
<div class=bt style="left:607px;top:916px;width:50px;height:20px;background:#8d8d8d"></div>
<svg style="left:607px;top:916px" width="50" height="20"><path d="M10 0 V20" stroke="#5a5a5a" stroke-width="1"/><path d="M20 0 V20" stroke="#5a5a5a" stroke-width="1"/><path d="M30 0 V20" stroke="#5a5a5a" stroke-width="1"/><path d="M40 0 V20" stroke="#5a5a5a" stroke-width="1"/><path d="M0 10 H50" stroke="#5a5a5a"/></svg>
<div class=bt style="left:662px;top:916px;width:50px;height:20px;background:#8d8d8d"></div>
<svg style="left:662px;top:916px" width="50" height="20"><path d="M10 0 V20" stroke="#5a5a5a" stroke-width="1"/><path d="M20 0 V20" stroke="#5a5a5a" stroke-width="1"/><path d="M30 0 V20" stroke="#5a5a5a" stroke-width="1"/><path d="M40 0 V20" stroke="#5a5a5a" stroke-width="1"/><path d="M0 10 H50" stroke="#5a5a5a"/></svg>
<svg style="left:609px;top:918px" width="6" height="6"><rect x="0.5" y="0.5" width="4" height="4" fill="#f80" stroke="#422"/></svg>
<div class=bt style="left:717px;top:916px;width:20px;height:20px;background:linear-gradient(#999,#8a8a8a)"></div>
<svg style="left:720px;top:919px" width="14" height="14"><rect x="1" y="2" width="9" height="8" fill="#ccc" stroke="#222"/><path d="M10 7 Q13 7 12 10 Q11 13 9 11" stroke="#222" stroke-width="1.3" fill="none"/></svg>
<div class=bt style="left:742px;top:916px;width:20px;height:20px;background:linear-gradient(#999,#8a8a8a)"></div>
<svg style="left:745px;top:919px" width="14" height="14"><circle cx="7" cy="7" r="5.5" fill="none" stroke="#bbb" stroke-width="1.2"/><circle cx="7" cy="7" r="3" fill="none" stroke="#aaa" stroke-width="1"/></svg>
<div class=bt style="left:767px;top:916px;width:20px;height:20px;border-radius:4px 0 0 4px;background:linear-gradient(#999,#8a8a8a)"></div>
<svg style="left:769px;top:918px" width="16" height="16"><path d="M4 12 L8 8 Q10 4 12 6 Q14 8 10 10 L6 14" stroke="#bbb" stroke-width="2.2" fill="none"/></svg>
<div class=mn style="left:786px;top:916px;width:37px;height:20px;border-radius:0;"></div>
<svg style="left:788px;top:919px" width="18" height="14"><path d="M9 1 V13 M1 7 H17 M3 4 V10 M15 4 V10 M6 5 V9 M12 5 V9" stroke="#fff" stroke-width="1.4"/></svg>
<svg style="left:812px;top:919px" width="7" height="14"><path d="M0.5 5.5 L3.5 1 L6.5 5.5Z M0.5 8.5 L3.5 13 L6.5 8.5Z" fill="#bbb"/></svg>
<div class=bt style="left:822px;top:916px;width:20px;height:20px;border-radius:0 4px 4px 0;background:linear-gradient(#aaa,#999)"></div>
<svg style="left:824px;top:918px" width="16" height="16"><path d="M4 2 V15 M9 2 V15 M1 6 H15 M1 11 H15" stroke="#111" stroke-width="1.2"/><circle cx="5" cy="5" r="3" fill="#5a8ad8" stroke="#fff" stroke-width="1.2"/></svg>
<div class=bt style="left:847px;top:916px;width:20px;height:20px;border-radius:4px 0 0 4px;background:linear-gradient(#999,#8a8a8a)"></div>
<div class=bt style="left:866px;top:916px;width:21px;height:20px;border-radius:0 4px 4px 0;background:linear-gradient(#999,#8a8a8a)"></div>
<svg style="left:850px;top:919px" width="14" height="14"><rect x="1" y="3" width="12" height="9" rx="1" fill="#ddd" stroke="#111" stroke-width="0.9"/><rect x="3" y="1.5" width="3" height="2" fill="#ddd" stroke="#111" stroke-width="0.7"/><circle cx="7" cy="7.5" r="3" fill="#334" stroke="#111" stroke-width="0.8"/><circle cx="7.6" cy="8" r="1.6" fill="#a44"/><circle cx="3" cy="5" r="0.8" fill="#e00"/><path d="M11 0 V4 M9 2 H13" stroke="#fe3" stroke-width="1.2"/></svg>
<svg style="left:869px;top:919px" width="14" height="14"><rect x="1" y="6" width="12" height="7" fill="#ddd" stroke="#111" stroke-width="0.9"/><path d="M1 5.5 L12 2 L12.5 4 L1.5 7.5Z" fill="#333" stroke="#111" stroke-width="0.6"/><path d="M4 4.5 L5 6 M7 3.5 L8 5 M10 2.7 L11 4" stroke="#fff" stroke-width="0.8"/></svg>
<div class=a style="left:0px;top:940px;width:1576px;height:49px;background:#777777"></div>
<div class=a style="left:0px;top:940px;width:271px;height:49px;background:#474747"></div>
<div class=a style="left:1421px;top:940px;width:155px;height:49px;background:#474747"></div>
<svg style="left:0;top:940px" width="1576" height="49"><path d="M13.8 0 V49" stroke="#3c3c3c" stroke-width="1"/><path d="M36.9 0 V49" stroke="#3c3c3c" stroke-width="1"/><path d="M60.0 0 V49" stroke="#3c3c3c" stroke-width="1"/><path d="M83.1 0 V49" stroke="#3c3c3c" stroke-width="1"/><path d="M106.2 0 V49" stroke="#3c3c3c" stroke-width="1"/><path d="M129.3 0 V49" stroke="#3c3c3c" stroke-width="1"/><path d="M152.4 0 V49" stroke="#3c3c3c" stroke-width="1"/><path d="M175.5 0 V49" stroke="#3c3c3c" stroke-width="1"/><path d="M198.5 0 V49" stroke="#3c3c3c" stroke-width="1"/><path d="M221.6 0 V49" stroke="#3c3c3c" stroke-width="1"/><path d="M244.7 0 V49" stroke="#3c3c3c" stroke-width="1"/><path d="M267.8 0 V49" stroke="#3c3c3c" stroke-width="1"/><path d="M290.9 0 V49" stroke="#686868" stroke-width="1"/><path d="M314.0 0 V49" stroke="#686868" stroke-width="1"/><path d="M337.1 0 V49" stroke="#686868" stroke-width="1"/><path d="M360.1 0 V49" stroke="#686868" stroke-width="1"/><path d="M383.2 0 V49" stroke="#686868" stroke-width="1"/><path d="M406.3 0 V49" stroke="#686868" stroke-width="1"/><path d="M429.4 0 V49" stroke="#686868" stroke-width="1"/><path d="M452.5 0 V49" stroke="#686868" stroke-width="1"/><path d="M475.6 0 V49" stroke="#686868" stroke-width="1"/><path d="M498.7 0 V49" stroke="#686868" stroke-width="1"/><path d="M521.8 0 V49" stroke="#686868" stroke-width="1"/><path d="M544.8 0 V49" stroke="#686868" stroke-width="1"/><path d="M567.9 0 V49" stroke="#686868" stroke-width="1"/><path d="M591.0 0 V49" stroke="#686868" stroke-width="1"/><path d="M614.1 0 V49" stroke="#686868" stroke-width="1"/><path d="M637.2 0 V49" stroke="#686868" stroke-width="1"/><path d="M660.3 0 V49" stroke="#686868" stroke-width="1"/><path d="M683.4 0 V49" stroke="#686868" stroke-width="1"/><path d="M706.5 0 V49" stroke="#686868" stroke-width="1"/><path d="M729.5 0 V49" stroke="#686868" stroke-width="1"/><path d="M752.6 0 V49" stroke="#686868" stroke-width="1"/><path d="M775.7 0 V49" stroke="#686868" stroke-width="1"/><path d="M798.8 0 V49" stroke="#686868" stroke-width="1"/><path d="M821.9 0 V49" stroke="#686868" stroke-width="1"/><path d="M845.0 0 V49" stroke="#686868" stroke-width="1"/><path d="M868.1 0 V49" stroke="#686868" stroke-width="1"/><path d="M891.2 0 V49" stroke="#686868" stroke-width="1"/><path d="M914.2 0 V49" stroke="#686868" stroke-width="1"/><path d="M937.3 0 V49" stroke="#686868" stroke-width="1"/><path d="M960.4 0 V49" stroke="#686868" stroke-width="1"/><path d="M983.5 0 V49" stroke="#686868" stroke-width="1"/><path d="M1006.6 0 V49" stroke="#686868" stroke-width="1"/><path d="M1029.7 0 V49" stroke="#686868" stroke-width="1"/><path d="M1052.8 0 V49" stroke="#686868" stroke-width="1"/><path d="M1075.9 0 V49" stroke="#686868" stroke-width="1"/><path d="M1099.0 0 V49" stroke="#686868" stroke-width="1"/><path d="M1122.0 0 V49" stroke="#686868" stroke-width="1"/><path d="M1145.1 0 V49" stroke="#686868" stroke-width="1"/><path d="M1168.2 0 V49" stroke="#686868" stroke-width="1"/><path d="M1191.3 0 V49" stroke="#686868" stroke-width="1"/><path d="M1214.4 0 V49" stroke="#686868" stroke-width="1"/><path d="M1237.5 0 V49" stroke="#686868" stroke-width="1"/><path d="M1260.6 0 V49" stroke="#686868" stroke-width="1"/><path d="M1283.6 0 V49" stroke="#686868" stroke-width="1"/><path d="M1306.7 0 V49" stroke="#686868" stroke-width="1"/><path d="M1329.8 0 V49" stroke="#686868" stroke-width="1"/><path d="M1352.9 0 V49" stroke="#686868" stroke-width="1"/><path d="M1376.0 0 V49" stroke="#686868" stroke-width="1"/><path d="M1399.1 0 V49" stroke="#686868" stroke-width="1"/><path d="M1422.2 0 V49" stroke="#3c3c3c" stroke-width="1"/><path d="M1445.3 0 V49" stroke="#3c3c3c" stroke-width="1"/><path d="M1468.3 0 V49" stroke="#3c3c3c" stroke-width="1"/><path d="M1491.4 0 V49" stroke="#3c3c3c" stroke-width="1"/><path d="M1514.5 0 V49" stroke="#3c3c3c" stroke-width="1"/><path d="M1537.6 0 V49" stroke="#3c3c3c" stroke-width="1"/><path d="M1560.7 0 V49" stroke="#3c3c3c" stroke-width="1"/></svg>
<div class=a style="left:267px;top:940px;width:1px;height:49px;background:#111"></div>
<div class=a style="left:271px;top:940px;width:3px;height:49px;background:#5fc73c"></div>
<div class=a style="left:0px;top:989px;width:1576px;height:17px;background:#727272"></div>
<div class=a style="left:4px;top:989px;width:1567px;height:13px;border-radius:7px;border:1px solid #333;background:linear-gradient(#a4a4a4,#8e8e8e)"></div>
<div class=a style="left:6px;top:991px;width:9px;height:9px;border-radius:5px;background:#6a6a6a"></div>
<div class=t style="left:39.82000000000002px;top:990.0px;line-height:12px;transform:translateX(-50%);font-size:11.3px">-50</div>
<div class=t style="left:85.71600000000001px;top:990.0px;line-height:12px;transform:translateX(-50%);font-size:11.3px">-40</div>
<div class=t style="left:131.61200000000002px;top:990.0px;line-height:12px;transform:translateX(-50%);font-size:11.3px">-30</div>
<div class=t style="left:177.508px;top:990.0px;line-height:12px;transform:translateX(-50%);font-size:11.3px">-20</div>
<div class=t style="left:223.404px;top:990.0px;line-height:12px;transform:translateX(-50%);font-size:11.3px">-10</div>
<div class=t style="left:269.3px;top:990.0px;line-height:12px;transform:translateX(-50%);font-size:11.3px">0</div>
<div class=t style="left:315.196px;top:990.0px;line-height:12px;transform:translateX(-50%);font-size:11.3px">10</div>
<div class=t style="left:361.092px;top:990.0px;line-height:12px;transform:translateX(-50%);font-size:11.3px">20</div>
<div class=t style="left:406.988px;top:990.0px;line-height:12px;transform:translateX(-50%);font-size:11.3px">30</div>
<div class=t style="left:452.884px;top:990.0px;line-height:12px;transform:translateX(-50%);font-size:11.3px">40</div>
<div class=t style="left:498.78px;top:990.0px;line-height:12px;transform:translateX(-50%);font-size:11.3px">50</div>
<div class=t style="left:544.6759999999999px;top:990.0px;line-height:12px;transform:translateX(-50%);font-size:11.3px">60</div>
<div class=t style="left:590.572px;top:990.0px;line-height:12px;transform:translateX(-50%);font-size:11.3px">70</div>
<div class=t style="left:636.4680000000001px;top:990.0px;line-height:12px;transform:translateX(-50%);font-size:11.3px">80</div>
<div class=t style="left:682.364px;top:990.0px;line-height:12px;transform:translateX(-50%);font-size:11.3px">90</div>
<div class=t style="left:728.26px;top:990.0px;line-height:12px;transform:translateX(-50%);font-size:11.3px">100</div>
<div class=t style="left:774.156px;top:990.0px;line-height:12px;transform:translateX(-50%);font-size:11.3px">110</div>
<div class=t style="left:820.0519999999999px;top:990.0px;line-height:12px;transform:translateX(-50%);font-size:11.3px">120</div>
<div class=t style="left:865.9480000000001px;top:990.0px;line-height:12px;transform:translateX(-50%);font-size:11.3px">130</div>
<div class=t style="left:911.844px;top:990.0px;line-height:12px;transform:translateX(-50%);font-size:11.3px">140</div>
<div class=t style="left:957.74px;top:990.0px;line-height:12px;transform:translateX(-50%);font-size:11.3px">150</div>
<div class=t style="left:1003.636px;top:990.0px;line-height:12px;transform:translateX(-50%);font-size:11.3px">160</div>
<div class=t style="left:1049.532px;top:990.0px;line-height:12px;transform:translateX(-50%);font-size:11.3px">170</div>
<div class=t style="left:1095.4279999999999px;top:990.0px;line-height:12px;transform:translateX(-50%);font-size:11.3px">180</div>
<div class=t style="left:1141.324px;top:990.0px;line-height:12px;transform:translateX(-50%);font-size:11.3px">190</div>
<div class=t style="left:1187.22px;top:990.0px;line-height:12px;transform:translateX(-50%);font-size:11.3px">200</div>
<div class=t style="left:1233.116px;top:990.0px;line-height:12px;transform:translateX(-50%);font-size:11.3px">210</div>
<div class=t style="left:1279.012px;top:990.0px;line-height:12px;transform:translateX(-50%);font-size:11.3px">220</div>
<div class=t style="left:1324.908px;top:990.0px;line-height:12px;transform:translateX(-50%);font-size:11.3px">230</div>
<div class=t style="left:1370.8039999999999px;top:990.0px;line-height:12px;transform:translateX(-50%);font-size:11.3px">240</div>
<div class=t style="left:1416.6999999999998px;top:990.0px;line-height:12px;transform:translateX(-50%);font-size:11.3px">250</div>
<div class=t style="left:1462.596px;top:990.0px;line-height:12px;transform:translateX(-50%);font-size:11.3px">260</div>
<div class=t style="left:1508.492px;top:990.0px;line-height:12px;transform:translateX(-50%);font-size:11.3px">270</div>
<div class=t style="left:1554.388px;top:990.0px;line-height:12px;transform:translateX(-50%);font-size:11.3px">280</div>
<div class=a style="left:0px;top:1002px;width:1576px;height:4px;background:#707070"></div>
<div class=a style="left:0px;top:1006px;width:1576px;height:1px;background:#7a7a7a"></div>
<div class=a style="left:0px;top:1007px;width:1576px;height:25px;background:#696969"></div>
<svg style="left:0px;top:1021px" width="10" height="10"><path d="M0 0 L10 10" stroke="#fff" stroke-width="0.9" opacity="0.85"/><path d="M0 1 L9 10" stroke="#000" stroke-width="0.9" opacity="0.7"/><path d="M0 3 L7 10" stroke="#fff" stroke-width="0.9" opacity="0.85"/><path d="M0 4 L6 10" stroke="#000" stroke-width="0.9" opacity="0.7"/><path d="M0 6 L4 10" stroke="#fff" stroke-width="0.9" opacity="0.85"/><path d="M0 7 L3 10" stroke="#000" stroke-width="0.9" opacity="0.7"/></svg>
<div class=mn style="left:9px;top:1009px;width:30px;height:20px;"></div>
<svg style="left:13px;top:1012px" width="14" height="14"><circle cx="7" cy="7" r="6" fill="#eee" stroke="#222" stroke-width="1"/><path d="M7 7 L4 4" stroke="#d33" stroke-width="1.5"/><path d="M7 7 L9 10" stroke="#d33" stroke-width="1.3"/></svg>
<svg style="left:30px;top:1012px" width="7" height="14"><path d="M0.5 5.5 L3.5 1 L6.5 5.5Z M0.5 8.5 L3.5 13 L6.5 8.5Z" fill="#bbb"/></svg>
<div class=t style="left:51px;top:1013.5px;line-height:14px;">View</div>
<div class=t style="left:96px;top:1013.5px;line-height:14px;">Marker</div>
<div class=t style="left:151px;top:1013.5px;line-height:14px;">Frame</div>
<div class=t style="left:203px;top:1013.5px;line-height:14px;">Playback</div>
<div class=bt style="left:262px;top:1009px;width:20px;height:20px;border-radius:4px 0 0 4px;background:linear-gradient(#a6a6a6,#909090)"></div>
<svg style="left:265px;top:1012px" width="14" height="14"><circle cx="7" cy="7" r="5.5" fill="#f8f8f8" stroke="#111" stroke-width="1.1"/><path d="M7 7 V1.5 A5.5 5.5 0 0 1 12.5 7Z" fill="#f0a020"/><path d="M7 1.5 V7 H12.5" stroke="#111" stroke-width="0.8" fill="none"/></svg>
<div class=bt style="left:281px;top:1009px;width:20px;height:20px;border-radius:0 4px 4px 0;background:linear-gradient(#a6a6a6,#909090)"></div>
<svg style="left:285px;top:1011px" width="12" height="15"><path d="M3 7 V4.5 A3 3 0 0 1 9 4.5 V7" stroke="#333" stroke-width="1.3" fill="none"/><rect x="1.5" y="7" width="9" height="7" fill="#ddd" stroke="#333" stroke-width="0.9"/><rect x="5.5" y="9" width="1" height="3" fill="#333"/></svg>
<div class=nm style="left:307px;top:1009px;width:116px;height:20px;border-radius:10px 0 0 10px;background:linear-gradient(#a9a9a9,#b7b7b7)"></div>
<svg style="left:312px;top:1016px" width="5" height="7"><path d="M4 0 L0 3.5 L4 7Z" fill="#666"/></svg>
<svg style="left:414px;top:1016px" width="5" height="7"><path d="M0 0 L4 3.5 L0 7Z" fill="#666"/></svg>
<div class=t style="left:322px;top:1012.5px;line-height:14px;">Start:</div>
<div class=t style="left:410px;top:1012.5px;line-height:14px;transform:translateX(-100%)">1</div>
<div class=nm style="left:422px;top:1009px;width:111px;height:20px;border-radius:0 10px 10px 0;background:linear-gradient(#a9a9a9,#b7b7b7)"></div>
<svg style="left:427px;top:1016px" width="5" height="7"><path d="M4 0 L0 3.5 L4 7Z" fill="#666"/></svg>
<svg style="left:524px;top:1016px" width="5" height="7"><path d="M0 0 L4 3.5 L0 7Z" fill="#666"/></svg>
<div class=t style="left:437px;top:1012.5px;line-height:14px;">End:</div>
<div class=t style="left:520px;top:1012.5px;line-height:14px;transform:translateX(-100%)">250</div>
<div class=nm style="left:540px;top:1009px;width:88px;height:20px;border-radius:10px;background:linear-gradient(#a9a9a9,#b7b7b7)"></div>
<svg style="left:545px;top:1016px" width="5" height="7"><path d="M4 0 L0 3.5 L4 7Z" fill="#666"/></svg>
<svg style="left:619px;top:1016px" width="5" height="7"><path d="M0 0 L4 3.5 L0 7Z" fill="#666"/></svg>
<div class=t style="left:615px;top:1012.5px;line-height:14px;transform:translateX(-100%)">1</div>
<div class=bt style="left:646px;top:1009px;width:20px;height:20px;border-radius:4px 0 0 4px;background:linear-gradient(#a4a4a4,#8e8e8e)"></div>
<svg style="left:649px;top:1012px" width="14" height="14"><g fill="#f4f4f4" stroke="#111" stroke-width="1"><path d="M2 2 V12 M12 2 L6 7 L12 12Z M7 2 L2.5 7 L7 12" /></g></svg>
<div class=bt style="left:666px;top:1009px;width:20px;height:20px;border-radius:0;background:linear-gradient(#a4a4a4,#8e8e8e)"></div>
<svg style="left:669px;top:1012px" width="14" height="14"><g fill="#f4f4f4" stroke="#111" stroke-width="1"><path d="M7 2 L2 7 L7 12Z M12 2 L7 7 L12 12Z"/></g></svg>
<div class=bt style="left:685px;top:1009px;width:20px;height:20px;border-radius:0;background:linear-gradient(#a4a4a4,#8e8e8e)"></div>
<svg style="left:688px;top:1012px" width="14" height="14"><g fill="#f4f4f4" stroke="#111" stroke-width="1"><path d="M11 1.5 L3 7 L11 12.5Z"/></g></svg>
<div class=bt style="left:705px;top:1009px;width:20px;height:20px;border-radius:0;background:linear-gradient(#a4a4a4,#8e8e8e)"></div>
<svg style="left:708px;top:1012px" width="14" height="14"><g fill="#f4f4f4" stroke="#111" stroke-width="1"><path d="M3 1.5 L11 7 L3 12.5Z"/></g></svg>
<div class=bt style="left:725px;top:1009px;width:20px;height:20px;border-radius:0;background:linear-gradient(#a4a4a4,#8e8e8e)"></div>
<svg style="left:728px;top:1012px" width="14" height="14"><g fill="#f4f4f4" stroke="#111" stroke-width="1"><path d="M2 2 L7 7 L2 12Z M7 2 L12 7 L7 12Z"/></g></svg>
<div class=bt style="left:744px;top:1009px;width:20px;height:20px;border-radius:0 4px 4px 0;background:linear-gradient(#a4a4a4,#8e8e8e)"></div>
<svg style="left:747px;top:1012px" width="14" height="14"><g fill="#f4f4f4" stroke="#111" stroke-width="1"><path d="M12 2 V12 M2 2 L8 7 L2 12Z M7 2 L11.5 7 L7 12"/></g></svg>
<div class=mn style="left:771px;top:1009px;width:114px;height:20px;"></div>
<div class=t style="left:778px;top:1012.5px;line-height:14px;color:#fff;">No Sync</div>
<svg style="left:874px;top:1012px" width="7" height="14"><path d="M0.5 5.5 L3.5 1 L6.5 5.5Z M0.5 8.5 L3.5 13 L6.5 8.5Z" fill="#bbb"/></svg>
<div class=bt style="left:902px;top:1009px;width:19px;height:20px;background:linear-gradient(#a4a4a4,#8e8e8e)"></div>
<svg style="left:905px;top:1013px" width="13" height="13"><circle cx="6.5" cy="6.5" r="4.6" fill="#e5401a" stroke="#7a1a08" stroke-width="1"/><circle cx="5.5" cy="5" r="1.5" fill="#ff8a60" opacity="0.6"/></svg>
<div class=nm style="left:927px;top:1009px;width:130px;height:20px;border-radius:4px 0 0 4px;background:linear-gradient(#a9a9a9,#b7b7b7)"></div>
<svg style="left:930px;top:1011px" width="16" height="16"><path d="M3.5 1 V10" stroke="#111" stroke-width="3"/><path d="M3.5 1 V10" stroke="#f2d24a" stroke-width="1.6"/><path d="M3.5 1.5 H6 V3.5 H4" stroke="#111" stroke-width="0.8" fill="#f2d24a"/><circle cx="4.5" cy="11.5" r="3" fill="#f4f4f4" stroke="#111" stroke-width="1.1"/><circle cx="4.5" cy="11.5" r="1" fill="#111"/><path d="M6.5 9.5 L13 3" stroke="#111" stroke-width="3.2"/><path d="M6.5 9.5 L13 3" stroke="#f0f0f0" stroke-width="1.6"/><path d="M11 5 L13 7 M12.5 3.5 L14.5 5.5" stroke="#111" stroke-width="1"/></svg>
<div class=bt style="left:1056px;top:1009px;width:21px;height:20px;border-radius:0;background:linear-gradient(#a4a4a4,#8e8e8e)"></div>
<svg style="left:1059px;top:1011px" width="16" height="16"><circle cx="4.5" cy="11.5" r="3" fill="#f4f4f4" stroke="#111" stroke-width="1.1"/><circle cx="4.5" cy="11.5" r="1" fill="#111"/><path d="M6.5 9.5 L13 3" stroke="#111" stroke-width="3.2"/><path d="M6.5 9.5 L13 3" stroke="#f0f0f0" stroke-width="1.6"/><path d="M11 5 L13 7 M12.5 3.5 L14.5 5.5" stroke="#111" stroke-width="1"/></svg>
<div class=bt style="left:1076px;top:1009px;width:21px;height:20px;border-radius:0 4px 4px 0;background:linear-gradient(#a4a4a4,#8e8e8e)"></div>
<svg style="left:1079px;top:1011px" width="16" height="16"><circle cx="4.5" cy="11.5" r="3" fill="#f4f4f4" stroke="#111" stroke-width="1.1"/><circle cx="4.5" cy="11.5" r="1" fill="#111"/><path d="M6.5 9.5 L13 3" stroke="#111" stroke-width="3.2"/><path d="M6.5 9.5 L13 3" stroke="#f0f0f0" stroke-width="1.6"/><path d="M11 5 L13 7 M12.5 3.5 L14.5 5.5" stroke="#111" stroke-width="1"/><path d="M2 2 L13 14 M13 2 L2 14" stroke="#e02a2a" stroke-width="1.6"/></svg>
<svg style="left:1566px;top:941px;" width="10" height="10"><path d="M0 0 L10 10" stroke="#fff" stroke-width="0.9" opacity="0.85"/><path d="M1 0 L10 9" stroke="#000" stroke-width="0.9" opacity="0.7"/><path d="M3 0 L10 7" stroke="#fff" stroke-width="0.9" opacity="0.85"/><path d="M4 0 L10 6" stroke="#000" stroke-width="0.9" opacity="0.7"/><path d="M6 0 L10 4" stroke="#fff" stroke-width="0.9" opacity="0.85"/><path d="M7 0 L10 3" stroke="#000" stroke-width="0.9" opacity="0.7"/></svg>
<div class=a style="left:0px;top:1032px;width:1576px;height:2px;background:#1a1a1a"></div>
<div class=a style="left:1575px;top:58px;width:1px;height:974px;background:#000"></div>
<div class=a style="left:1576px;top:58px;width:328px;height:753px;background:#727272"></div>
<div class=a style="left:1576px;top:58px;width:328px;height:26px;background:#696969"></div>
<div class=a style="left:1576px;top:58px;width:328px;height:1px;background:#7e7e7e"></div>
<div class=mn style="left:1586px;top:61px;width:29px;height:20px;"></div>
<svg style="left:1589px;top:63px" width="16" height="16"><rect x="1" y="1.5" width="6" height="3" fill="#f39a28" stroke="#222" stroke-width="0.8"/><path d="M3 4.5 V13 M3 8.5 H7 M3 13 H7" stroke="#9ab" stroke-width="1"/><rect x="7" y="7" width="6" height="3" fill="#fff" stroke="#222" stroke-width="0.8"/><rect x="7" y="11.5" width="6" height="3" fill="#fff" stroke="#222" stroke-width="0.8"/></svg>
<svg style="left:1605px;top:64px" width="7" height="14"><path d="M0.5 5.5 L3.5 1 L6.5 5.5Z M0.5 8.5 L3.5 13 L6.5 8.5Z" fill="#bbb"/></svg>
<div class=t style="left:1627px;top:64.5px;line-height:14px;">View</div>
<div class=t style="left:1672.5px;top:64.5px;line-height:14px;">Search</div>
<div class=mn style="left:1719px;top:61px;width:119px;height:20px;"></div>
<div class=t style="left:1727px;top:64.5px;line-height:14px;color:#fff;">All Scenes</div>
<svg style="left:1828px;top:64px" width="7" height="14"><path d="M0.5 5.5 L3.5 1 L6.5 5.5Z M0.5 8.5 L3.5 13 L6.5 8.5Z" fill="#bbb"/></svg>
<div class=a style="left:1844px;top:61px;width:60px;height:20px;border-radius:6px 0 0 6px;border:1px solid #2b2b2b;border-right:none;background:linear-gradient(#a0a0a0,#b3b3b3)"></div>
<svg style="left:1847px;top:62px" width="18" height="18"><path d="M2.5 15.5 L7 11" stroke="#3a1a0a" stroke-width="3.2"/><path d="M2.5 15.5 L7 11" stroke="#c9702a" stroke-width="1.8"/><circle cx="10.5" cy="7.5" r="4.6" fill="#d8c8c8" stroke="#111" stroke-width="1.1"/><circle cx="10.5" cy="7.5" r="3" fill="#e8dede" stroke="#fff" stroke-width="0.8"/></svg>
<svg style="left:1894px;top:59px;" width="10" height="10"><path d="M0 0 L10 10" stroke="#fff" stroke-width="0.9" opacity="0.85"/><path d="M1 0 L10 9" stroke="#000" stroke-width="0.9" opacity="0.7"/><path d="M3 0 L10 7" stroke="#fff" stroke-width="0.9" opacity="0.85"/><path d="M4 0 L10 6" stroke="#000" stroke-width="0.9" opacity="0.7"/><path d="M6 0 L10 4" stroke="#fff" stroke-width="0.9" opacity="0.85"/><path d="M7 0 L10 3" stroke="#000" stroke-width="0.9" opacity="0.7"/></svg>
<div class=a style="left:1576px;top:84px;width:328px;height:1px;background:#7e7e7e"></div>
<div class=a style="left:1577px;top:85px;width:310px;height:20px;background:#6c6c6c"></div>
<div class=a style="left:1577px;top:105px;width:310px;height:20px;background:#767676"></div>
<div class=a style="left:1577px;top:125px;width:310px;height:20px;background:#6c6c6c"></div>
<div class=a style="left:1577px;top:145px;width:310px;height:20px;background:#767676"></div>
<div class=a style="left:1577px;top:165px;width:310px;height:20px;background:#6c6c6c"></div>
<div class=a style="left:1577px;top:185px;width:310px;height:20px;background:#767676"></div>
<div class=a style="left:1577px;top:205px;width:310px;height:20px;background:#6c6c6c"></div>
<div class=a style="left:1577px;top:225px;width:310px;height:20px;background:#767676"></div>
<div class=a style="left:1577px;top:245px;width:310px;height:20px;background:#6c6c6c"></div>
<div class=a style="left:1577px;top:265px;width:310px;height:20px;background:#767676"></div>
<div class=a style="left:1577px;top:285px;width:310px;height:20px;background:#6c6c6c"></div>
<div class=a style="left:1577px;top:305px;width:310px;height:20px;background:#767676"></div>
<div class=a style="left:1577px;top:325px;width:310px;height:20px;background:#6c6c6c"></div>
<div class=a style="left:1577px;top:345px;width:310px;height:20px;background:#767676"></div>
<div class=a style="left:1577px;top:365px;width:310px;height:20px;background:#6c6c6c"></div>
<div class=a style="left:1577px;top:385px;width:310px;height:20px;background:#767676"></div>
<div class=a style="left:1577px;top:405px;width:310px;height:20px;background:#7a7f87"></div>
<div class=a style="left:1828px;top:405px;width:59px;height:20px;background:#727272"></div>
<div class=a style="left:1577px;top:425px;width:310px;height:20px;background:#767676"></div>
<div class=a style="left:1577px;top:445px;width:310px;height:20px;background:#6c6c6c"></div>
<div class=a style="left:1577px;top:465px;width:310px;height:20px;background:#767676"></div>
<div class=a style="left:1577px;top:485px;width:310px;height:20px;background:#6c6c6c"></div>
<div class=a style="left:1577px;top:505px;width:310px;height:20px;background:#767676"></div>
<div class=a style="left:1577px;top:525px;width:310px;height:20px;background:#6c6c6c"></div>
<div class=a style="left:1577px;top:545px;width:310px;height:20px;background:#767676"></div>
<div class=a style="left:1577px;top:565px;width:310px;height:20px;background:#6c6c6c"></div>
<div class=a style="left:1577px;top:585px;width:310px;height:20px;background:#767676"></div>
<div class=a style="left:1577px;top:605px;width:310px;height:20px;background:#6c6c6c"></div>
<div class=a style="left:1577px;top:625px;width:310px;height:20px;background:#767676"></div>
<div class=a style="left:1577px;top:645px;width:310px;height:20px;background:#6c6c6c"></div>
<div class=a style="left:1577px;top:665px;width:310px;height:20px;background:#767676"></div>
<div class=a style="left:1577px;top:685px;width:310px;height:20px;background:#6c6c6c"></div>
<div class=a style="left:1577px;top:705px;width:310px;height:20px;background:#767676"></div>
<div class=a style="left:1577px;top:725px;width:310px;height:20px;background:#6c6c6c"></div>
<div class=a style="left:1577px;top:745px;width:310px;height:20px;background:#767676"></div>
<div class=a style="left:1577px;top:765px;width:310px;height:20px;background:#6c6c6c"></div>
<div class=a style="left:1577px;top:785px;width:310px;height:20px;background:#767676"></div>
<div class=a style="left:1577px;top:805px;width:310px;height:6px;background:#6c6c6c"></div>
<div class=a style="left:1828px;top:85px;width:1px;height:726px;background:#666"></div>
<div class=a style="left:1848px;top:85px;width:1px;height:726px;background:#6a6a6a"></div>
<div class=a style="left:1868px;top:85px;width:1px;height:726px;background:#6a6a6a"></div>
<div class=a style="left:1603px;top:85px;width:1px;height:726px;background:#2e2e2e"></div>
<div class=a style="left:0;top:0;width:1904px;height:811px;overflow:hidden"><svg style="left:0;top:0" width="1904" height="811"><path d="M1608 95.5 H1620" stroke="#2e2e2e" stroke-width="1"/><circle cx="1604" cy="94.5" r="4" fill="#e6e6e6" stroke="#1a1a1a" stroke-width="1"/><path d="M1601.5 94.5 H1606.5 M1604 92 V97" stroke="#111" stroke-width="1.1"/><g transform="translate(1619.5 88.5)"><path d="M1.8 2 H11.2 L6.5 11.5Z" fill="none" stroke="#1a1a1a" stroke-width="2.6" stroke-linejoin="round"/><path d="M1.8 2 H11.2 L6.5 11.5Z" fill="none" stroke="#f39a33" stroke-width="1.3" stroke-linejoin="round"/><circle cx="1.8" cy="2" r="1.2" fill="#fff"/><circle cx="11.2" cy="2" r="1.2" fill="#fff"/><circle cx="6.5" cy="11.5" r="1.2" fill="#fff"/></g><path d="M1710.9 90 V100" stroke="#2a2a2a" stroke-width="1.3"/><g transform="translate(1721.9 88.5)"><path d="M1.8 2 H11.2 L6.5 11.5Z" fill="none" stroke="#3a3a3a" stroke-width="1.1" /><circle cx="1.8" cy="2" r="1.4" fill="#e0e0e0" stroke="#333" stroke-width="0.8"/><circle cx="11.2" cy="2" r="1.4" fill="#e0e0e0" stroke="#333" stroke-width="0.8"/><circle cx="6.5" cy="11.5" r="1.4" fill="#e0e0e0" stroke="#333" stroke-width="0.8"/></g><g transform="translate(1831 89)"><path d="M0.5 6 Q7 -1 13.5 6 Q7 12.5 0.5 6Z" fill="#f8f8f8" stroke="#1a1a1a" stroke-width="1"/><circle cx="7" cy="5.8" r="2.8" fill="#6a6a6a"/><circle cx="7" cy="5.8" r="1.3" fill="#000"/><circle cx="6.1" cy="4.8" r="0.7" fill="#fff"/></g><g transform="translate(1854 88)"><path d="M2 1 L2 12 L4.8 9.3 L7 14 L8.8 13 L6.6 8.5 L10 8.2Z" fill="#f0f0f0" stroke="#111" stroke-width="1"/></g><g transform="translate(1871 88)"><rect x="0.8" y="3" width="12.4" height="9.5" rx="1" fill="#f2f2f2" stroke="#111" stroke-width="1"/><rect x="2.2" y="1.5" width="3" height="2" fill="#eee" stroke="#111" stroke-width="0.8"/><circle cx="7.3" cy="7.8" r="3.1" fill="#2a2f48" stroke="#111" stroke-width="0.8"/><path d="M7.3 7.8 L10.2 8.8 A3 3 0 0 1 6 10.5Z" fill="#b8503c"/><circle cx="2.6" cy="5.6" r="0.8" fill="#e00"/></g><path d="M1608 115.5 H1620" stroke="#2e2e2e" stroke-width="1"/><circle cx="1604" cy="114.5" r="4" fill="#e6e6e6" stroke="#1a1a1a" stroke-width="1"/><path d="M1601.5 114.5 H1606.5 M1604 112 V117" stroke="#111" stroke-width="1.1"/><g transform="translate(1619.5 108.5)"><path d="M1.8 2 H11.2 L6.5 11.5Z" fill="none" stroke="#1a1a1a" stroke-width="2.6" stroke-linejoin="round"/><path d="M1.8 2 H11.2 L6.5 11.5Z" fill="none" stroke="#f39a33" stroke-width="1.3" stroke-linejoin="round"/><circle cx="1.8" cy="2" r="1.2" fill="#fff"/><circle cx="11.2" cy="2" r="1.2" fill="#fff"/><circle cx="6.5" cy="11.5" r="1.2" fill="#fff"/></g><path d="M1752.7 110 V120" stroke="#2a2a2a" stroke-width="1.3"/><g transform="translate(1763.7 108.5)"><path d="M1.8 2 H11.2 L6.5 11.5Z" fill="none" stroke="#3a3a3a" stroke-width="1.1" /><circle cx="1.8" cy="2" r="1.4" fill="#e0e0e0" stroke="#333" stroke-width="0.8"/><circle cx="11.2" cy="2" r="1.4" fill="#e0e0e0" stroke="#333" stroke-width="0.8"/><circle cx="6.5" cy="11.5" r="1.4" fill="#e0e0e0" stroke="#333" stroke-width="0.8"/></g><g transform="translate(1831 109)"><path d="M0.5 6 Q7 -1 13.5 6 Q7 12.5 0.5 6Z" fill="#f8f8f8" stroke="#1a1a1a" stroke-width="1"/><circle cx="7" cy="5.8" r="2.8" fill="#6a6a6a"/><circle cx="7" cy="5.8" r="1.3" fill="#000"/><circle cx="6.1" cy="4.8" r="0.7" fill="#fff"/></g><g transform="translate(1854 108)"><path d="M2 1 L2 12 L4.8 9.3 L7 14 L8.8 13 L6.6 8.5 L10 8.2Z" fill="#f0f0f0" stroke="#111" stroke-width="1"/></g><g transform="translate(1871 108)"><rect x="0.8" y="3" width="12.4" height="9.5" rx="1" fill="#f2f2f2" stroke="#111" stroke-width="1"/><rect x="2.2" y="1.5" width="3" height="2" fill="#eee" stroke="#111" stroke-width="0.8"/><circle cx="7.3" cy="7.8" r="3.1" fill="#2a2f48" stroke="#111" stroke-width="0.8"/><path d="M7.3 7.8 L10.2 8.8 A3 3 0 0 1 6 10.5Z" fill="#b8503c"/><circle cx="2.6" cy="5.6" r="0.8" fill="#e00"/></g><path d="M1608 135.5 H1620" stroke="#2e2e2e" stroke-width="1"/><circle cx="1604" cy="134.5" r="4" fill="#e6e6e6" stroke="#1a1a1a" stroke-width="1"/><path d="M1601.5 134.5 H1606.5 M1604 132 V137" stroke="#111" stroke-width="1.1"/><g transform="translate(1619.5 128.5)"><path d="M1.8 2 H11.2 L6.5 11.5Z" fill="none" stroke="#1a1a1a" stroke-width="2.6" stroke-linejoin="round"/><path d="M1.8 2 H11.2 L6.5 11.5Z" fill="none" stroke="#f39a33" stroke-width="1.3" stroke-linejoin="round"/><circle cx="1.8" cy="2" r="1.2" fill="#fff"/><circle cx="11.2" cy="2" r="1.2" fill="#fff"/><circle cx="6.5" cy="11.5" r="1.2" fill="#fff"/></g><path d="M1754.5 130 V140" stroke="#2a2a2a" stroke-width="1.3"/><g transform="translate(1765.5 128.5)"><path d="M1.8 2 H11.2 L6.5 11.5Z" fill="none" stroke="#3a3a3a" stroke-width="1.1" /><circle cx="1.8" cy="2" r="1.4" fill="#e0e0e0" stroke="#333" stroke-width="0.8"/><circle cx="11.2" cy="2" r="1.4" fill="#e0e0e0" stroke="#333" stroke-width="0.8"/><circle cx="6.5" cy="11.5" r="1.4" fill="#e0e0e0" stroke="#333" stroke-width="0.8"/></g><g transform="translate(1831 129)"><path d="M0.5 6 Q7 -1 13.5 6 Q7 12.5 0.5 6Z" fill="#f8f8f8" stroke="#1a1a1a" stroke-width="1"/><circle cx="7" cy="5.8" r="2.8" fill="#6a6a6a"/><circle cx="7" cy="5.8" r="1.3" fill="#000"/><circle cx="6.1" cy="4.8" r="0.7" fill="#fff"/></g><g transform="translate(1854 128)"><path d="M2 1 L2 12 L4.8 9.3 L7 14 L8.8 13 L6.6 8.5 L10 8.2Z" fill="#f0f0f0" stroke="#111" stroke-width="1"/></g><g transform="translate(1871 128)"><rect x="0.8" y="3" width="12.4" height="9.5" rx="1" fill="#f2f2f2" stroke="#111" stroke-width="1"/><rect x="2.2" y="1.5" width="3" height="2" fill="#eee" stroke="#111" stroke-width="0.8"/><circle cx="7.3" cy="7.8" r="3.1" fill="#2a2f48" stroke="#111" stroke-width="0.8"/><path d="M7.3 7.8 L10.2 8.8 A3 3 0 0 1 6 10.5Z" fill="#b8503c"/><circle cx="2.6" cy="5.6" r="0.8" fill="#e00"/></g><path d="M1608 155.5 H1620" stroke="#2e2e2e" stroke-width="1"/><circle cx="1604" cy="154.5" r="4" fill="#e6e6e6" stroke="#1a1a1a" stroke-width="1"/><path d="M1601.5 154.5 H1606.5 M1604 152 V157" stroke="#111" stroke-width="1.1"/><g transform="translate(1619.5 148.5)"><path d="M1.8 2 H11.2 L6.5 11.5Z" fill="none" stroke="#1a1a1a" stroke-width="2.6" stroke-linejoin="round"/><path d="M1.8 2 H11.2 L6.5 11.5Z" fill="none" stroke="#f39a33" stroke-width="1.3" stroke-linejoin="round"/><circle cx="1.8" cy="2" r="1.2" fill="#fff"/><circle cx="11.2" cy="2" r="1.2" fill="#fff"/><circle cx="6.5" cy="11.5" r="1.2" fill="#fff"/></g><path d="M1753.9 150 V160" stroke="#2a2a2a" stroke-width="1.3"/><g transform="translate(1764.9 148.5)"><path d="M1.8 2 H11.2 L6.5 11.5Z" fill="none" stroke="#3a3a3a" stroke-width="1.1" /><circle cx="1.8" cy="2" r="1.4" fill="#e0e0e0" stroke="#333" stroke-width="0.8"/><circle cx="11.2" cy="2" r="1.4" fill="#e0e0e0" stroke="#333" stroke-width="0.8"/><circle cx="6.5" cy="11.5" r="1.4" fill="#e0e0e0" stroke="#333" stroke-width="0.8"/></g><g transform="translate(1831 149)"><path d="M0.5 6 Q7 -1 13.5 6 Q7 12.5 0.5 6Z" fill="#f8f8f8" stroke="#1a1a1a" stroke-width="1"/><circle cx="7" cy="5.8" r="2.8" fill="#6a6a6a"/><circle cx="7" cy="5.8" r="1.3" fill="#000"/><circle cx="6.1" cy="4.8" r="0.7" fill="#fff"/></g><g transform="translate(1854 148)"><path d="M2 1 L2 12 L4.8 9.3 L7 14 L8.8 13 L6.6 8.5 L10 8.2Z" fill="#f0f0f0" stroke="#111" stroke-width="1"/></g><g transform="translate(1871 148)"><rect x="0.8" y="3" width="12.4" height="9.5" rx="1" fill="#f2f2f2" stroke="#111" stroke-width="1"/><rect x="2.2" y="1.5" width="3" height="2" fill="#eee" stroke="#111" stroke-width="0.8"/><circle cx="7.3" cy="7.8" r="3.1" fill="#2a2f48" stroke="#111" stroke-width="0.8"/><path d="M7.3 7.8 L10.2 8.8 A3 3 0 0 1 6 10.5Z" fill="#b8503c"/><circle cx="2.6" cy="5.6" r="0.8" fill="#e00"/></g><path d="M1608 175.5 H1620" stroke="#2e2e2e" stroke-width="1"/><circle cx="1604" cy="174.5" r="4" fill="#e6e6e6" stroke="#1a1a1a" stroke-width="1"/><path d="M1601.5 174.5 H1606.5 M1604 172 V177" stroke="#111" stroke-width="1.1"/><g transform="translate(1619.5 168.5)"><path d="M1.8 2 H11.2 L6.5 11.5Z" fill="none" stroke="#1a1a1a" stroke-width="2.6" stroke-linejoin="round"/><path d="M1.8 2 H11.2 L6.5 11.5Z" fill="none" stroke="#f39a33" stroke-width="1.3" stroke-linejoin="round"/><circle cx="1.8" cy="2" r="1.2" fill="#fff"/><circle cx="11.2" cy="2" r="1.2" fill="#fff"/><circle cx="6.5" cy="11.5" r="1.2" fill="#fff"/></g><path d="M1755.7 170 V180" stroke="#2a2a2a" stroke-width="1.3"/><g transform="translate(1766.7 168.5)"><path d="M1.8 2 H11.2 L6.5 11.5Z" fill="none" stroke="#3a3a3a" stroke-width="1.1" /><circle cx="1.8" cy="2" r="1.4" fill="#e0e0e0" stroke="#333" stroke-width="0.8"/><circle cx="11.2" cy="2" r="1.4" fill="#e0e0e0" stroke="#333" stroke-width="0.8"/><circle cx="6.5" cy="11.5" r="1.4" fill="#e0e0e0" stroke="#333" stroke-width="0.8"/></g><g transform="translate(1831 169)"><path d="M0.5 6 Q7 -1 13.5 6 Q7 12.5 0.5 6Z" fill="#f8f8f8" stroke="#1a1a1a" stroke-width="1"/><circle cx="7" cy="5.8" r="2.8" fill="#6a6a6a"/><circle cx="7" cy="5.8" r="1.3" fill="#000"/><circle cx="6.1" cy="4.8" r="0.7" fill="#fff"/></g><g transform="translate(1854 168)"><path d="M2 1 L2 12 L4.8 9.3 L7 14 L8.8 13 L6.6 8.5 L10 8.2Z" fill="#f0f0f0" stroke="#111" stroke-width="1"/></g><g transform="translate(1871 168)"><rect x="0.8" y="3" width="12.4" height="9.5" rx="1" fill="#f2f2f2" stroke="#111" stroke-width="1"/><rect x="2.2" y="1.5" width="3" height="2" fill="#eee" stroke="#111" stroke-width="0.8"/><circle cx="7.3" cy="7.8" r="3.1" fill="#2a2f48" stroke="#111" stroke-width="0.8"/><path d="M7.3 7.8 L10.2 8.8 A3 3 0 0 1 6 10.5Z" fill="#b8503c"/><circle cx="2.6" cy="5.6" r="0.8" fill="#e00"/></g><path d="M1608 195.5 H1620" stroke="#2e2e2e" stroke-width="1"/><circle cx="1604" cy="194.5" r="4" fill="#e6e6e6" stroke="#1a1a1a" stroke-width="1"/><path d="M1601.5 194.5 H1606.5 M1604 192 V197" stroke="#111" stroke-width="1.1"/><g transform="translate(1619.5 188.5)"><path d="M1.8 2 H11.2 L6.5 11.5Z" fill="none" stroke="#1a1a1a" stroke-width="2.6" stroke-linejoin="round"/><path d="M1.8 2 H11.2 L6.5 11.5Z" fill="none" stroke="#f39a33" stroke-width="1.3" stroke-linejoin="round"/><circle cx="1.8" cy="2" r="1.2" fill="#fff"/><circle cx="11.2" cy="2" r="1.2" fill="#fff"/><circle cx="6.5" cy="11.5" r="1.2" fill="#fff"/></g><path d="M1741.2 190 V200" stroke="#2a2a2a" stroke-width="1.3"/><g transform="translate(1752.2 188.5)"><path d="M1.8 2 H11.2 L6.5 11.5Z" fill="none" stroke="#3a3a3a" stroke-width="1.1" /><circle cx="1.8" cy="2" r="1.4" fill="#e0e0e0" stroke="#333" stroke-width="0.8"/><circle cx="11.2" cy="2" r="1.4" fill="#e0e0e0" stroke="#333" stroke-width="0.8"/><circle cx="6.5" cy="11.5" r="1.4" fill="#e0e0e0" stroke="#333" stroke-width="0.8"/></g><g transform="translate(1831 189)"><path d="M0.5 6 Q7 -1 13.5 6 Q7 12.5 0.5 6Z" fill="#f8f8f8" stroke="#1a1a1a" stroke-width="1"/><circle cx="7" cy="5.8" r="2.8" fill="#6a6a6a"/><circle cx="7" cy="5.8" r="1.3" fill="#000"/><circle cx="6.1" cy="4.8" r="0.7" fill="#fff"/></g><g transform="translate(1854 188)"><path d="M2 1 L2 12 L4.8 9.3 L7 14 L8.8 13 L6.6 8.5 L10 8.2Z" fill="#f0f0f0" stroke="#111" stroke-width="1"/></g><g transform="translate(1871 188)"><rect x="0.8" y="3" width="12.4" height="9.5" rx="1" fill="#f2f2f2" stroke="#111" stroke-width="1"/><rect x="2.2" y="1.5" width="3" height="2" fill="#eee" stroke="#111" stroke-width="0.8"/><circle cx="7.3" cy="7.8" r="3.1" fill="#2a2f48" stroke="#111" stroke-width="0.8"/><path d="M7.3 7.8 L10.2 8.8 A3 3 0 0 1 6 10.5Z" fill="#b8503c"/><circle cx="2.6" cy="5.6" r="0.8" fill="#e00"/></g><path d="M1608 215.5 H1620" stroke="#2e2e2e" stroke-width="1"/><circle cx="1604" cy="214.5" r="4" fill="#e6e6e6" stroke="#1a1a1a" stroke-width="1"/><path d="M1601.5 214.5 H1606.5 M1604 212 V217" stroke="#111" stroke-width="1.1"/><g transform="translate(1619.5 208.5)"><path d="M1.8 2 H11.2 L6.5 11.5Z" fill="none" stroke="#1a1a1a" stroke-width="2.6" stroke-linejoin="round"/><path d="M1.8 2 H11.2 L6.5 11.5Z" fill="none" stroke="#f39a33" stroke-width="1.3" stroke-linejoin="round"/><circle cx="1.8" cy="2" r="1.2" fill="#fff"/><circle cx="11.2" cy="2" r="1.2" fill="#fff"/><circle cx="6.5" cy="11.5" r="1.2" fill="#fff"/></g><path d="M1737.0 210 V220" stroke="#2a2a2a" stroke-width="1.3"/><g transform="translate(1748.0 208.5)"><path d="M1.8 2 H11.2 L6.5 11.5Z" fill="none" stroke="#3a3a3a" stroke-width="1.1" /><circle cx="1.8" cy="2" r="1.4" fill="#e0e0e0" stroke="#333" stroke-width="0.8"/><circle cx="11.2" cy="2" r="1.4" fill="#e0e0e0" stroke="#333" stroke-width="0.8"/><circle cx="6.5" cy="11.5" r="1.4" fill="#e0e0e0" stroke="#333" stroke-width="0.8"/></g><g transform="translate(1831 209)"><path d="M0.5 6 Q7 -1 13.5 6 Q7 12.5 0.5 6Z" fill="#f8f8f8" stroke="#1a1a1a" stroke-width="1"/><circle cx="7" cy="5.8" r="2.8" fill="#6a6a6a"/><circle cx="7" cy="5.8" r="1.3" fill="#000"/><circle cx="6.1" cy="4.8" r="0.7" fill="#fff"/></g><g transform="translate(1854 208)"><path d="M2 1 L2 12 L4.8 9.3 L7 14 L8.8 13 L6.6 8.5 L10 8.2Z" fill="#f0f0f0" stroke="#111" stroke-width="1"/></g><g transform="translate(1871 208)"><rect x="0.8" y="3" width="12.4" height="9.5" rx="1" fill="#f2f2f2" stroke="#111" stroke-width="1"/><rect x="2.2" y="1.5" width="3" height="2" fill="#eee" stroke="#111" stroke-width="0.8"/><circle cx="7.3" cy="7.8" r="3.1" fill="#2a2f48" stroke="#111" stroke-width="0.8"/><path d="M7.3 7.8 L10.2 8.8 A3 3 0 0 1 6 10.5Z" fill="#b8503c"/><circle cx="2.6" cy="5.6" r="0.8" fill="#e00"/></g><path d="M1608 235.5 H1620" stroke="#2e2e2e" stroke-width="1"/><circle cx="1604" cy="234.5" r="4" fill="#e6e6e6" stroke="#1a1a1a" stroke-width="1"/><path d="M1601.5 234.5 H1606.5 M1604 232 V237" stroke="#111" stroke-width="1.1"/><g transform="translate(1619.5 228.5)"><path d="M1.8 2 H11.2 L6.5 11.5Z" fill="none" stroke="#1a1a1a" stroke-width="2.6" stroke-linejoin="round"/><path d="M1.8 2 H11.2 L6.5 11.5Z" fill="none" stroke="#f39a33" stroke-width="1.3" stroke-linejoin="round"/><circle cx="1.8" cy="2" r="1.2" fill="#fff"/><circle cx="11.2" cy="2" r="1.2" fill="#fff"/><circle cx="6.5" cy="11.5" r="1.2" fill="#fff"/></g><path d="M1738.2 230 V240" stroke="#2a2a2a" stroke-width="1.3"/><g transform="translate(1749.2 228.5)"><path d="M1.8 2 H11.2 L6.5 11.5Z" fill="none" stroke="#3a3a3a" stroke-width="1.1" /><circle cx="1.8" cy="2" r="1.4" fill="#e0e0e0" stroke="#333" stroke-width="0.8"/><circle cx="11.2" cy="2" r="1.4" fill="#e0e0e0" stroke="#333" stroke-width="0.8"/><circle cx="6.5" cy="11.5" r="1.4" fill="#e0e0e0" stroke="#333" stroke-width="0.8"/></g><g transform="translate(1831 229)"><path d="M0.5 6 Q7 -1 13.5 6 Q7 12.5 0.5 6Z" fill="#f8f8f8" stroke="#1a1a1a" stroke-width="1"/><circle cx="7" cy="5.8" r="2.8" fill="#6a6a6a"/><circle cx="7" cy="5.8" r="1.3" fill="#000"/><circle cx="6.1" cy="4.8" r="0.7" fill="#fff"/></g><g transform="translate(1854 228)"><path d="M2 1 L2 12 L4.8 9.3 L7 14 L8.8 13 L6.6 8.5 L10 8.2Z" fill="#f0f0f0" stroke="#111" stroke-width="1"/></g><g transform="translate(1871 228)"><rect x="0.8" y="3" width="12.4" height="9.5" rx="1" fill="#f2f2f2" stroke="#111" stroke-width="1"/><rect x="2.2" y="1.5" width="3" height="2" fill="#eee" stroke="#111" stroke-width="0.8"/><circle cx="7.3" cy="7.8" r="3.1" fill="#2a2f48" stroke="#111" stroke-width="0.8"/><path d="M7.3 7.8 L10.2 8.8 A3 3 0 0 1 6 10.5Z" fill="#b8503c"/><circle cx="2.6" cy="5.6" r="0.8" fill="#e00"/></g><path d="M1608 255.5 H1620" stroke="#2e2e2e" stroke-width="1"/><circle cx="1604" cy="254.5" r="4" fill="#e6e6e6" stroke="#1a1a1a" stroke-width="1"/><path d="M1601.5 254.5 H1606.5 M1604 252 V257" stroke="#111" stroke-width="1.1"/><g transform="translate(1619.5 248.5)"><path d="M1.8 2 H11.2 L6.5 11.5Z" fill="none" stroke="#1a1a1a" stroke-width="2.6" stroke-linejoin="round"/><path d="M1.8 2 H11.2 L6.5 11.5Z" fill="none" stroke="#f39a33" stroke-width="1.3" stroke-linejoin="round"/><circle cx="1.8" cy="2" r="1.2" fill="#fff"/><circle cx="11.2" cy="2" r="1.2" fill="#fff"/><circle cx="6.5" cy="11.5" r="1.2" fill="#fff"/></g><path d="M1764.8 250 V260" stroke="#2a2a2a" stroke-width="1.3"/><g transform="translate(1775.8 248.5)"><path d="M1.8 2 H11.2 L6.5 11.5Z" fill="none" stroke="#3a3a3a" stroke-width="1.1" /><circle cx="1.8" cy="2" r="1.4" fill="#e0e0e0" stroke="#333" stroke-width="0.8"/><circle cx="11.2" cy="2" r="1.4" fill="#e0e0e0" stroke="#333" stroke-width="0.8"/><circle cx="6.5" cy="11.5" r="1.4" fill="#e0e0e0" stroke="#333" stroke-width="0.8"/></g><g transform="translate(1831 249)"><path d="M0.5 6 Q7 -1 13.5 6 Q7 12.5 0.5 6Z" fill="#f8f8f8" stroke="#1a1a1a" stroke-width="1"/><circle cx="7" cy="5.8" r="2.8" fill="#6a6a6a"/><circle cx="7" cy="5.8" r="1.3" fill="#000"/><circle cx="6.1" cy="4.8" r="0.7" fill="#fff"/></g><g transform="translate(1854 248)"><path d="M2 1 L2 12 L4.8 9.3 L7 14 L8.8 13 L6.6 8.5 L10 8.2Z" fill="#f0f0f0" stroke="#111" stroke-width="1"/></g><g transform="translate(1871 248)"><rect x="0.8" y="3" width="12.4" height="9.5" rx="1" fill="#f2f2f2" stroke="#111" stroke-width="1"/><rect x="2.2" y="1.5" width="3" height="2" fill="#eee" stroke="#111" stroke-width="0.8"/><circle cx="7.3" cy="7.8" r="3.1" fill="#2a2f48" stroke="#111" stroke-width="0.8"/><path d="M7.3 7.8 L10.2 8.8 A3 3 0 0 1 6 10.5Z" fill="#b8503c"/><circle cx="2.6" cy="5.6" r="0.8" fill="#e00"/></g><path d="M1608 275.5 H1620" stroke="#2e2e2e" stroke-width="1"/><circle cx="1604" cy="274.5" r="4" fill="#e6e6e6" stroke="#1a1a1a" stroke-width="1"/><path d="M1601.5 274.5 H1606.5 M1604 272 V277" stroke="#111" stroke-width="1.1"/><g transform="translate(1619.5 268.5)"><path d="M1.8 2 H11.2 L6.5 11.5Z" fill="none" stroke="#1a1a1a" stroke-width="2.6" stroke-linejoin="round"/><path d="M1.8 2 H11.2 L6.5 11.5Z" fill="none" stroke="#f39a33" stroke-width="1.3" stroke-linejoin="round"/><circle cx="1.8" cy="2" r="1.2" fill="#fff"/><circle cx="11.2" cy="2" r="1.2" fill="#fff"/><circle cx="6.5" cy="11.5" r="1.2" fill="#fff"/></g><path d="M1766.7 270 V280" stroke="#2a2a2a" stroke-width="1.3"/><g transform="translate(1777.7 268.5)"><path d="M1.8 2 H11.2 L6.5 11.5Z" fill="none" stroke="#3a3a3a" stroke-width="1.1" /><circle cx="1.8" cy="2" r="1.4" fill="#e0e0e0" stroke="#333" stroke-width="0.8"/><circle cx="11.2" cy="2" r="1.4" fill="#e0e0e0" stroke="#333" stroke-width="0.8"/><circle cx="6.5" cy="11.5" r="1.4" fill="#e0e0e0" stroke="#333" stroke-width="0.8"/></g><g transform="translate(1831 269)"><path d="M0.5 6 Q7 -1 13.5 6 Q7 12.5 0.5 6Z" fill="#f8f8f8" stroke="#1a1a1a" stroke-width="1"/><circle cx="7" cy="5.8" r="2.8" fill="#6a6a6a"/><circle cx="7" cy="5.8" r="1.3" fill="#000"/><circle cx="6.1" cy="4.8" r="0.7" fill="#fff"/></g><g transform="translate(1854 268)"><path d="M2 1 L2 12 L4.8 9.3 L7 14 L8.8 13 L6.6 8.5 L10 8.2Z" fill="#f0f0f0" stroke="#111" stroke-width="1"/></g><g transform="translate(1871 268)"><rect x="0.8" y="3" width="12.4" height="9.5" rx="1" fill="#f2f2f2" stroke="#111" stroke-width="1"/><rect x="2.2" y="1.5" width="3" height="2" fill="#eee" stroke="#111" stroke-width="0.8"/><circle cx="7.3" cy="7.8" r="3.1" fill="#2a2f48" stroke="#111" stroke-width="0.8"/><path d="M7.3 7.8 L10.2 8.8 A3 3 0 0 1 6 10.5Z" fill="#b8503c"/><circle cx="2.6" cy="5.6" r="0.8" fill="#e00"/></g><path d="M1608 295.5 H1620" stroke="#2e2e2e" stroke-width="1"/><circle cx="1604" cy="294.5" r="4" fill="#e6e6e6" stroke="#1a1a1a" stroke-width="1"/><path d="M1601.5 294.5 H1606.5 M1604 292 V297" stroke="#111" stroke-width="1.1"/><g transform="translate(1619.5 288.5)"><path d="M1.8 2 H11.2 L6.5 11.5Z" fill="none" stroke="#1a1a1a" stroke-width="2.6" stroke-linejoin="round"/><path d="M1.8 2 H11.2 L6.5 11.5Z" fill="none" stroke="#f39a33" stroke-width="1.3" stroke-linejoin="round"/><circle cx="1.8" cy="2" r="1.2" fill="#fff"/><circle cx="11.2" cy="2" r="1.2" fill="#fff"/><circle cx="6.5" cy="11.5" r="1.2" fill="#fff"/></g><path d="M1715.7 290 V300" stroke="#2a2a2a" stroke-width="1.3"/><g transform="translate(1726.7 288.5)"><path d="M1.8 2 H11.2 L6.5 11.5Z" fill="none" stroke="#3a3a3a" stroke-width="1.1" /><circle cx="1.8" cy="2" r="1.4" fill="#e0e0e0" stroke="#333" stroke-width="0.8"/><circle cx="11.2" cy="2" r="1.4" fill="#e0e0e0" stroke="#333" stroke-width="0.8"/><circle cx="6.5" cy="11.5" r="1.4" fill="#e0e0e0" stroke="#333" stroke-width="0.8"/></g><g transform="translate(1831 289)"><path d="M0.5 6 Q7 -1 13.5 6 Q7 12.5 0.5 6Z" fill="#f8f8f8" stroke="#1a1a1a" stroke-width="1"/><circle cx="7" cy="5.8" r="2.8" fill="#6a6a6a"/><circle cx="7" cy="5.8" r="1.3" fill="#000"/><circle cx="6.1" cy="4.8" r="0.7" fill="#fff"/></g><g transform="translate(1854 288)"><path d="M2 1 L2 12 L4.8 9.3 L7 14 L8.8 13 L6.6 8.5 L10 8.2Z" fill="#f0f0f0" stroke="#111" stroke-width="1"/></g><g transform="translate(1871 288)"><rect x="0.8" y="3" width="12.4" height="9.5" rx="1" fill="#f2f2f2" stroke="#111" stroke-width="1"/><rect x="2.2" y="1.5" width="3" height="2" fill="#eee" stroke="#111" stroke-width="0.8"/><circle cx="7.3" cy="7.8" r="3.1" fill="#2a2f48" stroke="#111" stroke-width="0.8"/><path d="M7.3 7.8 L10.2 8.8 A3 3 0 0 1 6 10.5Z" fill="#b8503c"/><circle cx="2.6" cy="5.6" r="0.8" fill="#e00"/></g><path d="M1608 315.5 H1620" stroke="#2e2e2e" stroke-width="1"/><circle cx="1604" cy="314.5" r="4" fill="#e6e6e6" stroke="#1a1a1a" stroke-width="1"/><path d="M1601.5 314.5 H1606.5 M1604 312 V317" stroke="#111" stroke-width="1.1"/><g transform="translate(1619.5 308.5)"><path d="M1.8 2 H11.2 L6.5 11.5Z" fill="none" stroke="#1a1a1a" stroke-width="2.6" stroke-linejoin="round"/><path d="M1.8 2 H11.2 L6.5 11.5Z" fill="none" stroke="#f39a33" stroke-width="1.3" stroke-linejoin="round"/><circle cx="1.8" cy="2" r="1.2" fill="#fff"/><circle cx="11.2" cy="2" r="1.2" fill="#fff"/><circle cx="6.5" cy="11.5" r="1.2" fill="#fff"/></g><path d="M1742.4 310 V320" stroke="#2a2a2a" stroke-width="1.3"/><g transform="translate(1753.4 308.5)"><path d="M1.8 2 H11.2 L6.5 11.5Z" fill="none" stroke="#3a3a3a" stroke-width="1.1" /><circle cx="1.8" cy="2" r="1.4" fill="#e0e0e0" stroke="#333" stroke-width="0.8"/><circle cx="11.2" cy="2" r="1.4" fill="#e0e0e0" stroke="#333" stroke-width="0.8"/><circle cx="6.5" cy="11.5" r="1.4" fill="#e0e0e0" stroke="#333" stroke-width="0.8"/></g><g transform="translate(1831 309)"><path d="M0.5 6 Q7 -1 13.5 6 Q7 12.5 0.5 6Z" fill="#f8f8f8" stroke="#1a1a1a" stroke-width="1"/><circle cx="7" cy="5.8" r="2.8" fill="#6a6a6a"/><circle cx="7" cy="5.8" r="1.3" fill="#000"/><circle cx="6.1" cy="4.8" r="0.7" fill="#fff"/></g><g transform="translate(1854 308)"><path d="M2 1 L2 12 L4.8 9.3 L7 14 L8.8 13 L6.6 8.5 L10 8.2Z" fill="#f0f0f0" stroke="#111" stroke-width="1"/></g><g transform="translate(1871 308)"><rect x="0.8" y="3" width="12.4" height="9.5" rx="1" fill="#f2f2f2" stroke="#111" stroke-width="1"/><rect x="2.2" y="1.5" width="3" height="2" fill="#eee" stroke="#111" stroke-width="0.8"/><circle cx="7.3" cy="7.8" r="3.1" fill="#2a2f48" stroke="#111" stroke-width="0.8"/><path d="M7.3 7.8 L10.2 8.8 A3 3 0 0 1 6 10.5Z" fill="#b8503c"/><circle cx="2.6" cy="5.6" r="0.8" fill="#e00"/></g><path d="M1608 335.5 H1620" stroke="#2e2e2e" stroke-width="1"/><circle cx="1604" cy="334.5" r="4" fill="#e6e6e6" stroke="#1a1a1a" stroke-width="1"/><path d="M1601.5 334.5 H1606.5 M1604 332 V337" stroke="#111" stroke-width="1.1"/><g transform="translate(1619.5 328.5)"><path d="M1.8 2 H11.2 L6.5 11.5Z" fill="none" stroke="#1a1a1a" stroke-width="2.6" stroke-linejoin="round"/><path d="M1.8 2 H11.2 L6.5 11.5Z" fill="none" stroke="#f39a33" stroke-width="1.3" stroke-linejoin="round"/><circle cx="1.8" cy="2" r="1.2" fill="#fff"/><circle cx="11.2" cy="2" r="1.2" fill="#fff"/><circle cx="6.5" cy="11.5" r="1.2" fill="#fff"/></g><path d="M1710.9 330 V340" stroke="#2a2a2a" stroke-width="1.3"/><g transform="translate(1721.9 328.5)"><path d="M1.8 2 H11.2 L6.5 11.5Z" fill="none" stroke="#3a3a3a" stroke-width="1.1" /><circle cx="1.8" cy="2" r="1.4" fill="#e0e0e0" stroke="#333" stroke-width="0.8"/><circle cx="11.2" cy="2" r="1.4" fill="#e0e0e0" stroke="#333" stroke-width="0.8"/><circle cx="6.5" cy="11.5" r="1.4" fill="#e0e0e0" stroke="#333" stroke-width="0.8"/></g><g transform="translate(1831 329)"><path d="M0.5 6 Q7 -1 13.5 6 Q7 12.5 0.5 6Z" fill="#f8f8f8" stroke="#1a1a1a" stroke-width="1"/><circle cx="7" cy="5.8" r="2.8" fill="#6a6a6a"/><circle cx="7" cy="5.8" r="1.3" fill="#000"/><circle cx="6.1" cy="4.8" r="0.7" fill="#fff"/></g><g transform="translate(1854 328)"><path d="M2 1 L2 12 L4.8 9.3 L7 14 L8.8 13 L6.6 8.5 L10 8.2Z" fill="#f0f0f0" stroke="#111" stroke-width="1"/></g><g transform="translate(1871 328)"><rect x="0.8" y="3" width="12.4" height="9.5" rx="1" fill="#f2f2f2" stroke="#111" stroke-width="1"/><rect x="2.2" y="1.5" width="3" height="2" fill="#eee" stroke="#111" stroke-width="0.8"/><circle cx="7.3" cy="7.8" r="3.1" fill="#2a2f48" stroke="#111" stroke-width="0.8"/><path d="M7.3 7.8 L10.2 8.8 A3 3 0 0 1 6 10.5Z" fill="#b8503c"/><circle cx="2.6" cy="5.6" r="0.8" fill="#e00"/></g><path d="M1608 355.5 H1620" stroke="#2e2e2e" stroke-width="1"/><circle cx="1604" cy="354.5" r="4" fill="#e6e6e6" stroke="#1a1a1a" stroke-width="1"/><path d="M1601.5 354.5 H1606.5 M1604 352 V357" stroke="#111" stroke-width="1.1"/><g transform="translate(1619.5 348.5)"><path d="M1.8 2 H11.2 L6.5 11.5Z" fill="none" stroke="#1a1a1a" stroke-width="2.6" stroke-linejoin="round"/><path d="M1.8 2 H11.2 L6.5 11.5Z" fill="none" stroke="#f39a33" stroke-width="1.3" stroke-linejoin="round"/><circle cx="1.8" cy="2" r="1.2" fill="#fff"/><circle cx="11.2" cy="2" r="1.2" fill="#fff"/><circle cx="6.5" cy="11.5" r="1.2" fill="#fff"/></g><path d="M1760.6 350 V360" stroke="#2a2a2a" stroke-width="1.3"/><g transform="translate(1771.6 348.5)"><path d="M1.8 2 H11.2 L6.5 11.5Z" fill="none" stroke="#3a3a3a" stroke-width="1.1" /><circle cx="1.8" cy="2" r="1.4" fill="#e0e0e0" stroke="#333" stroke-width="0.8"/><circle cx="11.2" cy="2" r="1.4" fill="#e0e0e0" stroke="#333" stroke-width="0.8"/><circle cx="6.5" cy="11.5" r="1.4" fill="#e0e0e0" stroke="#333" stroke-width="0.8"/></g><g transform="translate(1831 349)"><path d="M0.5 6 Q7 -1 13.5 6 Q7 12.5 0.5 6Z" fill="#f8f8f8" stroke="#1a1a1a" stroke-width="1"/><circle cx="7" cy="5.8" r="2.8" fill="#6a6a6a"/><circle cx="7" cy="5.8" r="1.3" fill="#000"/><circle cx="6.1" cy="4.8" r="0.7" fill="#fff"/></g><g transform="translate(1854 348)"><path d="M2 1 L2 12 L4.8 9.3 L7 14 L8.8 13 L6.6 8.5 L10 8.2Z" fill="#f0f0f0" stroke="#111" stroke-width="1"/></g><g transform="translate(1871 348)"><rect x="0.8" y="3" width="12.4" height="9.5" rx="1" fill="#f2f2f2" stroke="#111" stroke-width="1"/><rect x="2.2" y="1.5" width="3" height="2" fill="#eee" stroke="#111" stroke-width="0.8"/><circle cx="7.3" cy="7.8" r="3.1" fill="#2a2f48" stroke="#111" stroke-width="0.8"/><path d="M7.3 7.8 L10.2 8.8 A3 3 0 0 1 6 10.5Z" fill="#b8503c"/><circle cx="2.6" cy="5.6" r="0.8" fill="#e00"/></g><path d="M1608 375.5 H1620" stroke="#2e2e2e" stroke-width="1"/><circle cx="1604" cy="374.5" r="4" fill="#e6e6e6" stroke="#1a1a1a" stroke-width="1"/><path d="M1601.5 374.5 H1606.5 M1604 372 V377" stroke="#111" stroke-width="1.1"/><g transform="translate(1619.5 368.5)"><path d="M1.8 2 H11.2 L6.5 11.5Z" fill="none" stroke="#1a1a1a" stroke-width="2.6" stroke-linejoin="round"/><path d="M1.8 2 H11.2 L6.5 11.5Z" fill="none" stroke="#f39a33" stroke-width="1.3" stroke-linejoin="round"/><circle cx="1.8" cy="2" r="1.2" fill="#fff"/><circle cx="11.2" cy="2" r="1.2" fill="#fff"/><circle cx="6.5" cy="11.5" r="1.2" fill="#fff"/></g><path d="M1727.9 370 V380" stroke="#2a2a2a" stroke-width="1.3"/><g transform="translate(1738.9 368.5)"><path d="M1.8 2 H11.2 L6.5 11.5Z" fill="none" stroke="#3a3a3a" stroke-width="1.1" /><circle cx="1.8" cy="2" r="1.4" fill="#e0e0e0" stroke="#333" stroke-width="0.8"/><circle cx="11.2" cy="2" r="1.4" fill="#e0e0e0" stroke="#333" stroke-width="0.8"/><circle cx="6.5" cy="11.5" r="1.4" fill="#e0e0e0" stroke="#333" stroke-width="0.8"/></g><g transform="translate(1831 369)"><path d="M0.5 6 Q7 -1 13.5 6 Q7 12.5 0.5 6Z" fill="#f8f8f8" stroke="#1a1a1a" stroke-width="1"/><circle cx="7" cy="5.8" r="2.8" fill="#6a6a6a"/><circle cx="7" cy="5.8" r="1.3" fill="#000"/><circle cx="6.1" cy="4.8" r="0.7" fill="#fff"/></g><g transform="translate(1854 368)"><path d="M2 1 L2 12 L4.8 9.3 L7 14 L8.8 13 L6.6 8.5 L10 8.2Z" fill="#f0f0f0" stroke="#111" stroke-width="1"/></g><g transform="translate(1871 368)"><rect x="0.8" y="3" width="12.4" height="9.5" rx="1" fill="#f2f2f2" stroke="#111" stroke-width="1"/><rect x="2.2" y="1.5" width="3" height="2" fill="#eee" stroke="#111" stroke-width="0.8"/><circle cx="7.3" cy="7.8" r="3.1" fill="#2a2f48" stroke="#111" stroke-width="0.8"/><path d="M7.3 7.8 L10.2 8.8 A3 3 0 0 1 6 10.5Z" fill="#b8503c"/><circle cx="2.6" cy="5.6" r="0.8" fill="#e00"/></g><path d="M1608 395.5 H1620" stroke="#2e2e2e" stroke-width="1"/><circle cx="1604" cy="394.5" r="4" fill="#e6e6e6" stroke="#1a1a1a" stroke-width="1"/><path d="M1601.5 394.5 H1606.5 M1604 392 V397" stroke="#111" stroke-width="1.1"/><g transform="translate(1619.5 388.5)"><path d="M1.8 2 H11.2 L6.5 11.5Z" fill="none" stroke="#1a1a1a" stroke-width="2.6" stroke-linejoin="round"/><path d="M1.8 2 H11.2 L6.5 11.5Z" fill="none" stroke="#f39a33" stroke-width="1.3" stroke-linejoin="round"/><circle cx="1.8" cy="2" r="1.2" fill="#fff"/><circle cx="11.2" cy="2" r="1.2" fill="#fff"/><circle cx="6.5" cy="11.5" r="1.2" fill="#fff"/></g><path d="M1729.7 390 V400" stroke="#2a2a2a" stroke-width="1.3"/><g transform="translate(1740.7 388.5)"><path d="M1.8 2 H11.2 L6.5 11.5Z" fill="none" stroke="#3a3a3a" stroke-width="1.1" /><circle cx="1.8" cy="2" r="1.4" fill="#e0e0e0" stroke="#333" stroke-width="0.8"/><circle cx="11.2" cy="2" r="1.4" fill="#e0e0e0" stroke="#333" stroke-width="0.8"/><circle cx="6.5" cy="11.5" r="1.4" fill="#e0e0e0" stroke="#333" stroke-width="0.8"/></g><g transform="translate(1831 389)"><path d="M0.5 6 Q7 -1 13.5 6 Q7 12.5 0.5 6Z" fill="#f8f8f8" stroke="#1a1a1a" stroke-width="1"/><circle cx="7" cy="5.8" r="2.8" fill="#6a6a6a"/><circle cx="7" cy="5.8" r="1.3" fill="#000"/><circle cx="6.1" cy="4.8" r="0.7" fill="#fff"/></g><g transform="translate(1854 388)"><path d="M2 1 L2 12 L4.8 9.3 L7 14 L8.8 13 L6.6 8.5 L10 8.2Z" fill="#f0f0f0" stroke="#111" stroke-width="1"/></g><g transform="translate(1871 388)"><rect x="0.8" y="3" width="12.4" height="9.5" rx="1" fill="#f2f2f2" stroke="#111" stroke-width="1"/><rect x="2.2" y="1.5" width="3" height="2" fill="#eee" stroke="#111" stroke-width="0.8"/><circle cx="7.3" cy="7.8" r="3.1" fill="#2a2f48" stroke="#111" stroke-width="0.8"/><path d="M7.3 7.8 L10.2 8.8 A3 3 0 0 1 6 10.5Z" fill="#b8503c"/><circle cx="2.6" cy="5.6" r="0.8" fill="#e00"/></g><path d="M1608 415.5 H1620" stroke="#2e2e2e" stroke-width="1"/><circle cx="1604" cy="414.5" r="4" fill="#e6e6e6" stroke="#1a1a1a" stroke-width="1"/><path d="M1601.5 414.5 H1606.5 M1604 412 V417" stroke="#111" stroke-width="1.1"/><g transform="translate(1619.5 408.5)"><path d="M1.8 2 H11.2 L6.5 11.5Z" fill="none" stroke="#1a1a1a" stroke-width="2.6" stroke-linejoin="round"/><path d="M1.8 2 H11.2 L6.5 11.5Z" fill="none" stroke="#f39a33" stroke-width="1.3" stroke-linejoin="round"/><circle cx="1.8" cy="2" r="1.2" fill="#fff"/><circle cx="11.2" cy="2" r="1.2" fill="#fff"/><circle cx="6.5" cy="11.5" r="1.2" fill="#fff"/></g><path d="M1730.3 410 V420" stroke="#2a2a2a" stroke-width="1.3"/><g transform="translate(1741.3 408.5)"><path d="M1.8 2 H11.2 L6.5 11.5Z" fill="none" stroke="#3a3a3a" stroke-width="1.1" /><circle cx="1.8" cy="2" r="1.4" fill="#e0e0e0" stroke="#333" stroke-width="0.8"/><circle cx="11.2" cy="2" r="1.4" fill="#e0e0e0" stroke="#333" stroke-width="0.8"/><circle cx="6.5" cy="11.5" r="1.4" fill="#e0e0e0" stroke="#333" stroke-width="0.8"/></g><g transform="translate(1831 409)"><path d="M0.5 6 Q7 -1 13.5 6 Q7 12.5 0.5 6Z" fill="#f8f8f8" stroke="#1a1a1a" stroke-width="1"/><circle cx="7" cy="5.8" r="2.8" fill="#6a6a6a"/><circle cx="7" cy="5.8" r="1.3" fill="#000"/><circle cx="6.1" cy="4.8" r="0.7" fill="#fff"/></g><g transform="translate(1854 408)"><path d="M2 1 L2 12 L4.8 9.3 L7 14 L8.8 13 L6.6 8.5 L10 8.2Z" fill="#f0f0f0" stroke="#111" stroke-width="1"/></g><g transform="translate(1871 408)"><rect x="0.8" y="3" width="12.4" height="9.5" rx="1" fill="#f2f2f2" stroke="#111" stroke-width="1"/><rect x="2.2" y="1.5" width="3" height="2" fill="#eee" stroke="#111" stroke-width="0.8"/><circle cx="7.3" cy="7.8" r="3.1" fill="#2a2f48" stroke="#111" stroke-width="0.8"/><path d="M7.3 7.8 L10.2 8.8 A3 3 0 0 1 6 10.5Z" fill="#b8503c"/><circle cx="2.6" cy="5.6" r="0.8" fill="#e00"/></g><path d="M1608 435.5 H1620" stroke="#2e2e2e" stroke-width="1"/><circle cx="1604" cy="434.5" r="4" fill="#e6e6e6" stroke="#1a1a1a" stroke-width="1"/><path d="M1601.5 434.5 H1606.5 M1604 432 V437" stroke="#111" stroke-width="1.1"/><g transform="translate(1619.5 428.5)"><path d="M1.8 2 H11.2 L6.5 11.5Z" fill="none" stroke="#1a1a1a" stroke-width="2.6" stroke-linejoin="round"/><path d="M1.8 2 H11.2 L6.5 11.5Z" fill="none" stroke="#f39a33" stroke-width="1.3" stroke-linejoin="round"/><circle cx="1.8" cy="2" r="1.2" fill="#fff"/><circle cx="11.2" cy="2" r="1.2" fill="#fff"/><circle cx="6.5" cy="11.5" r="1.2" fill="#fff"/></g><path d="M1763.0 430 V440" stroke="#2a2a2a" stroke-width="1.3"/><g transform="translate(1774.0 428.5)"><path d="M1.8 2 H11.2 L6.5 11.5Z" fill="none" stroke="#3a3a3a" stroke-width="1.1" /><circle cx="1.8" cy="2" r="1.4" fill="#e0e0e0" stroke="#333" stroke-width="0.8"/><circle cx="11.2" cy="2" r="1.4" fill="#e0e0e0" stroke="#333" stroke-width="0.8"/><circle cx="6.5" cy="11.5" r="1.4" fill="#e0e0e0" stroke="#333" stroke-width="0.8"/></g><g transform="translate(1831 429)"><path d="M1.5 5 Q7 10 12.5 5 Q7 8 1.5 5Z" fill="#6a6a6a" stroke="#777" stroke-width="0.6"/></g><g transform="translate(1854 428)"><path d="M2 1 L2 12 L4.8 9.3 L7 14 L8.8 13 L6.6 8.5 L10 8.2Z" fill="#f0f0f0" stroke="#111" stroke-width="1"/></g><g transform="translate(1871 428)"><rect x="0.8" y="3" width="12.4" height="9.5" rx="1" fill="#f2f2f2" stroke="#111" stroke-width="1"/><rect x="2.2" y="1.5" width="3" height="2" fill="#eee" stroke="#111" stroke-width="0.8"/><circle cx="7.3" cy="7.8" r="3.1" fill="#2a2f48" stroke="#111" stroke-width="0.8"/><path d="M7.3 7.8 L10.2 8.8 A3 3 0 0 1 6 10.5Z" fill="#b8503c"/><circle cx="2.6" cy="5.6" r="0.8" fill="#e00"/></g><path d="M1608 455.5 H1620" stroke="#2e2e2e" stroke-width="1"/><circle cx="1604" cy="454.5" r="4" fill="#e6e6e6" stroke="#1a1a1a" stroke-width="1"/><path d="M1601.5 454.5 H1606.5 M1604 452 V457" stroke="#111" stroke-width="1.1"/><g transform="translate(1619.5 448.5)"><path d="M1.8 2 H11.2 L6.5 11.5Z" fill="none" stroke="#1a1a1a" stroke-width="2.6" stroke-linejoin="round"/><path d="M1.8 2 H11.2 L6.5 11.5Z" fill="none" stroke="#f39a33" stroke-width="1.3" stroke-linejoin="round"/><circle cx="1.8" cy="2" r="1.2" fill="#fff"/><circle cx="11.2" cy="2" r="1.2" fill="#fff"/><circle cx="6.5" cy="11.5" r="1.2" fill="#fff"/></g><path d="M1764.8 450 V460" stroke="#2a2a2a" stroke-width="1.3"/><g transform="translate(1775.8 448.5)"><path d="M1.8 2 H11.2 L6.5 11.5Z" fill="none" stroke="#3a3a3a" stroke-width="1.1" /><circle cx="1.8" cy="2" r="1.4" fill="#e0e0e0" stroke="#333" stroke-width="0.8"/><circle cx="11.2" cy="2" r="1.4" fill="#e0e0e0" stroke="#333" stroke-width="0.8"/><circle cx="6.5" cy="11.5" r="1.4" fill="#e0e0e0" stroke="#333" stroke-width="0.8"/></g><g transform="translate(1831 449)"><path d="M1.5 5 Q7 10 12.5 5 Q7 8 1.5 5Z" fill="#6a6a6a" stroke="#777" stroke-width="0.6"/></g><g transform="translate(1854 448)"><path d="M2 1 L2 12 L4.8 9.3 L7 14 L8.8 13 L6.6 8.5 L10 8.2Z" fill="#f0f0f0" stroke="#111" stroke-width="1"/></g><g transform="translate(1871 448)"><rect x="0.8" y="3" width="12.4" height="9.5" rx="1" fill="#f2f2f2" stroke="#111" stroke-width="1"/><rect x="2.2" y="1.5" width="3" height="2" fill="#eee" stroke="#111" stroke-width="0.8"/><circle cx="7.3" cy="7.8" r="3.1" fill="#2a2f48" stroke="#111" stroke-width="0.8"/><path d="M7.3 7.8 L10.2 8.8 A3 3 0 0 1 6 10.5Z" fill="#b8503c"/><circle cx="2.6" cy="5.6" r="0.8" fill="#e00"/></g><path d="M1608 475.5 H1620" stroke="#2e2e2e" stroke-width="1"/><circle cx="1604" cy="474.5" r="4" fill="#e6e6e6" stroke="#1a1a1a" stroke-width="1"/><path d="M1601.5 474.5 H1606.5 M1604 472 V477" stroke="#111" stroke-width="1.1"/><g transform="translate(1619.5 468.5)"><path d="M1.8 2 H11.2 L6.5 11.5Z" fill="none" stroke="#1a1a1a" stroke-width="2.6" stroke-linejoin="round"/><path d="M1.8 2 H11.2 L6.5 11.5Z" fill="none" stroke="#f39a33" stroke-width="1.3" stroke-linejoin="round"/><circle cx="1.8" cy="2" r="1.2" fill="#fff"/><circle cx="11.2" cy="2" r="1.2" fill="#fff"/><circle cx="6.5" cy="11.5" r="1.2" fill="#fff"/></g><path d="M1729.1 470 V480" stroke="#2a2a2a" stroke-width="1.3"/><g transform="translate(1740.1 468.5)"><path d="M1.8 2 H11.2 L6.5 11.5Z" fill="none" stroke="#3a3a3a" stroke-width="1.1" /><circle cx="1.8" cy="2" r="1.4" fill="#e0e0e0" stroke="#333" stroke-width="0.8"/><circle cx="11.2" cy="2" r="1.4" fill="#e0e0e0" stroke="#333" stroke-width="0.8"/><circle cx="6.5" cy="11.5" r="1.4" fill="#e0e0e0" stroke="#333" stroke-width="0.8"/></g><g transform="translate(1831 469)"><path d="M0.5 6 Q7 -1 13.5 6 Q7 12.5 0.5 6Z" fill="#f8f8f8" stroke="#1a1a1a" stroke-width="1"/><circle cx="7" cy="5.8" r="2.8" fill="#6a6a6a"/><circle cx="7" cy="5.8" r="1.3" fill="#000"/><circle cx="6.1" cy="4.8" r="0.7" fill="#fff"/></g><g transform="translate(1854 468)"><path d="M2 1 L2 12 L4.8 9.3 L7 14 L8.8 13 L6.6 8.5 L10 8.2Z" fill="#f0f0f0" stroke="#111" stroke-width="1"/></g><g transform="translate(1871 468)"><rect x="0.8" y="3" width="12.4" height="9.5" rx="1" fill="#f2f2f2" stroke="#111" stroke-width="1"/><rect x="2.2" y="1.5" width="3" height="2" fill="#eee" stroke="#111" stroke-width="0.8"/><circle cx="7.3" cy="7.8" r="3.1" fill="#2a2f48" stroke="#111" stroke-width="0.8"/><path d="M7.3 7.8 L10.2 8.8 A3 3 0 0 1 6 10.5Z" fill="#b8503c"/><circle cx="2.6" cy="5.6" r="0.8" fill="#e00"/></g><path d="M1608 495.5 H1620" stroke="#2e2e2e" stroke-width="1"/><circle cx="1604" cy="494.5" r="4" fill="#e6e6e6" stroke="#1a1a1a" stroke-width="1"/><path d="M1601.5 494.5 H1606.5 M1604 492 V497" stroke="#111" stroke-width="1.1"/><g transform="translate(1619.5 488.5)"><path d="M1.8 2 H11.2 L6.5 11.5Z" fill="none" stroke="#1a1a1a" stroke-width="2.6" stroke-linejoin="round"/><path d="M1.8 2 H11.2 L6.5 11.5Z" fill="none" stroke="#f39a33" stroke-width="1.3" stroke-linejoin="round"/><circle cx="1.8" cy="2" r="1.2" fill="#fff"/><circle cx="11.2" cy="2" r="1.2" fill="#fff"/><circle cx="6.5" cy="11.5" r="1.2" fill="#fff"/></g><path d="M1730.9 490 V500" stroke="#2a2a2a" stroke-width="1.3"/><g transform="translate(1741.9 488.5)"><path d="M1.8 2 H11.2 L6.5 11.5Z" fill="none" stroke="#3a3a3a" stroke-width="1.1" /><circle cx="1.8" cy="2" r="1.4" fill="#e0e0e0" stroke="#333" stroke-width="0.8"/><circle cx="11.2" cy="2" r="1.4" fill="#e0e0e0" stroke="#333" stroke-width="0.8"/><circle cx="6.5" cy="11.5" r="1.4" fill="#e0e0e0" stroke="#333" stroke-width="0.8"/></g><g transform="translate(1831 489)"><path d="M0.5 6 Q7 -1 13.5 6 Q7 12.5 0.5 6Z" fill="#f8f8f8" stroke="#1a1a1a" stroke-width="1"/><circle cx="7" cy="5.8" r="2.8" fill="#6a6a6a"/><circle cx="7" cy="5.8" r="1.3" fill="#000"/><circle cx="6.1" cy="4.8" r="0.7" fill="#fff"/></g><g transform="translate(1854 488)"><path d="M2 1 L2 12 L4.8 9.3 L7 14 L8.8 13 L6.6 8.5 L10 8.2Z" fill="#f0f0f0" stroke="#111" stroke-width="1"/></g><g transform="translate(1871 488)"><rect x="0.8" y="3" width="12.4" height="9.5" rx="1" fill="#f2f2f2" stroke="#111" stroke-width="1"/><rect x="2.2" y="1.5" width="3" height="2" fill="#eee" stroke="#111" stroke-width="0.8"/><circle cx="7.3" cy="7.8" r="3.1" fill="#2a2f48" stroke="#111" stroke-width="0.8"/><path d="M7.3 7.8 L10.2 8.8 A3 3 0 0 1 6 10.5Z" fill="#b8503c"/><circle cx="2.6" cy="5.6" r="0.8" fill="#e00"/></g><path d="M1608 515.5 H1620" stroke="#2e2e2e" stroke-width="1"/><circle cx="1604" cy="514.5" r="4" fill="#e6e6e6" stroke="#1a1a1a" stroke-width="1"/><path d="M1601.5 514.5 H1606.5 M1604 512 V517" stroke="#111" stroke-width="1.1"/><g transform="translate(1619.5 508.5)"><path d="M1.8 2 H11.2 L6.5 11.5Z" fill="none" stroke="#1a1a1a" stroke-width="2.6" stroke-linejoin="round"/><path d="M1.8 2 H11.2 L6.5 11.5Z" fill="none" stroke="#f39a33" stroke-width="1.3" stroke-linejoin="round"/><circle cx="1.8" cy="2" r="1.2" fill="#fff"/><circle cx="11.2" cy="2" r="1.2" fill="#fff"/><circle cx="6.5" cy="11.5" r="1.2" fill="#fff"/></g><path d="M1753.3 510 V520" stroke="#2a2a2a" stroke-width="1.3"/><g transform="translate(1764.3 508.5)"><path d="M1.8 2 H11.2 L6.5 11.5Z" fill="none" stroke="#3a3a3a" stroke-width="1.1" /><circle cx="1.8" cy="2" r="1.4" fill="#e0e0e0" stroke="#333" stroke-width="0.8"/><circle cx="11.2" cy="2" r="1.4" fill="#e0e0e0" stroke="#333" stroke-width="0.8"/><circle cx="6.5" cy="11.5" r="1.4" fill="#e0e0e0" stroke="#333" stroke-width="0.8"/></g><g transform="translate(1831 509)"><path d="M0.5 6 Q7 -1 13.5 6 Q7 12.5 0.5 6Z" fill="#f8f8f8" stroke="#1a1a1a" stroke-width="1"/><circle cx="7" cy="5.8" r="2.8" fill="#6a6a6a"/><circle cx="7" cy="5.8" r="1.3" fill="#000"/><circle cx="6.1" cy="4.8" r="0.7" fill="#fff"/></g><g transform="translate(1854 508)"><path d="M2 1 L2 12 L4.8 9.3 L7 14 L8.8 13 L6.6 8.5 L10 8.2Z" fill="#f0f0f0" stroke="#111" stroke-width="1"/></g><g transform="translate(1871 508)"><rect x="0.8" y="3" width="12.4" height="9.5" rx="1" fill="#f2f2f2" stroke="#111" stroke-width="1"/><rect x="2.2" y="1.5" width="3" height="2" fill="#eee" stroke="#111" stroke-width="0.8"/><circle cx="7.3" cy="7.8" r="3.1" fill="#2a2f48" stroke="#111" stroke-width="0.8"/><path d="M7.3 7.8 L10.2 8.8 A3 3 0 0 1 6 10.5Z" fill="#b8503c"/><circle cx="2.6" cy="5.6" r="0.8" fill="#e00"/></g><path d="M1608 535.5 H1620" stroke="#2e2e2e" stroke-width="1"/><circle cx="1604" cy="534.5" r="4" fill="#e6e6e6" stroke="#1a1a1a" stroke-width="1"/><path d="M1601.5 534.5 H1606.5 M1604 532 V537" stroke="#111" stroke-width="1.1"/><g transform="translate(1619.5 528.5)"><path d="M1.8 2 H11.2 L6.5 11.5Z" fill="none" stroke="#1a1a1a" stroke-width="2.6" stroke-linejoin="round"/><path d="M1.8 2 H11.2 L6.5 11.5Z" fill="none" stroke="#f39a33" stroke-width="1.3" stroke-linejoin="round"/><circle cx="1.8" cy="2" r="1.2" fill="#fff"/><circle cx="11.2" cy="2" r="1.2" fill="#fff"/><circle cx="6.5" cy="11.5" r="1.2" fill="#fff"/></g><path d="M1770.9 530 V540" stroke="#2a2a2a" stroke-width="1.3"/><g transform="translate(1781.9 528.5)"><path d="M1.8 2 H11.2 L6.5 11.5Z" fill="none" stroke="#3a3a3a" stroke-width="1.1" /><circle cx="1.8" cy="2" r="1.4" fill="#e0e0e0" stroke="#333" stroke-width="0.8"/><circle cx="11.2" cy="2" r="1.4" fill="#e0e0e0" stroke="#333" stroke-width="0.8"/><circle cx="6.5" cy="11.5" r="1.4" fill="#e0e0e0" stroke="#333" stroke-width="0.8"/></g><g transform="translate(1831 529)"><path d="M0.5 6 Q7 -1 13.5 6 Q7 12.5 0.5 6Z" fill="#f8f8f8" stroke="#1a1a1a" stroke-width="1"/><circle cx="7" cy="5.8" r="2.8" fill="#6a6a6a"/><circle cx="7" cy="5.8" r="1.3" fill="#000"/><circle cx="6.1" cy="4.8" r="0.7" fill="#fff"/></g><g transform="translate(1854 528)"><path d="M2 1 L2 12 L4.8 9.3 L7 14 L8.8 13 L6.6 8.5 L10 8.2Z" fill="#f0f0f0" stroke="#111" stroke-width="1"/></g><g transform="translate(1871 528)"><rect x="0.8" y="3" width="12.4" height="9.5" rx="1" fill="#f2f2f2" stroke="#111" stroke-width="1"/><rect x="2.2" y="1.5" width="3" height="2" fill="#eee" stroke="#111" stroke-width="0.8"/><circle cx="7.3" cy="7.8" r="3.1" fill="#2a2f48" stroke="#111" stroke-width="0.8"/><path d="M7.3 7.8 L10.2 8.8 A3 3 0 0 1 6 10.5Z" fill="#b8503c"/><circle cx="2.6" cy="5.6" r="0.8" fill="#e00"/></g><path d="M1608 555.5 H1620" stroke="#2e2e2e" stroke-width="1"/><circle cx="1604" cy="554.5" r="4" fill="#e6e6e6" stroke="#1a1a1a" stroke-width="1"/><path d="M1601.5 554.5 H1606.5 M1604 552 V557" stroke="#111" stroke-width="1.1"/><g transform="translate(1619.5 548.5)"><path d="M1.8 2 H11.2 L6.5 11.5Z" fill="none" stroke="#1a1a1a" stroke-width="2.6" stroke-linejoin="round"/><path d="M1.8 2 H11.2 L6.5 11.5Z" fill="none" stroke="#f39a33" stroke-width="1.3" stroke-linejoin="round"/><circle cx="1.8" cy="2" r="1.2" fill="#fff"/><circle cx="11.2" cy="2" r="1.2" fill="#fff"/><circle cx="6.5" cy="11.5" r="1.2" fill="#fff"/></g><path d="M1755.1 550 V560" stroke="#2a2a2a" stroke-width="1.3"/><g transform="translate(1766.1 548.5)"><path d="M1.8 2 H11.2 L6.5 11.5Z" fill="none" stroke="#3a3a3a" stroke-width="1.1" /><circle cx="1.8" cy="2" r="1.4" fill="#e0e0e0" stroke="#333" stroke-width="0.8"/><circle cx="11.2" cy="2" r="1.4" fill="#e0e0e0" stroke="#333" stroke-width="0.8"/><circle cx="6.5" cy="11.5" r="1.4" fill="#e0e0e0" stroke="#333" stroke-width="0.8"/></g><g transform="translate(1831 549)"><path d="M0.5 6 Q7 -1 13.5 6 Q7 12.5 0.5 6Z" fill="#f8f8f8" stroke="#1a1a1a" stroke-width="1"/><circle cx="7" cy="5.8" r="2.8" fill="#6a6a6a"/><circle cx="7" cy="5.8" r="1.3" fill="#000"/><circle cx="6.1" cy="4.8" r="0.7" fill="#fff"/></g><g transform="translate(1854 548)"><path d="M2 1 L2 12 L4.8 9.3 L7 14 L8.8 13 L6.6 8.5 L10 8.2Z" fill="#f0f0f0" stroke="#111" stroke-width="1"/></g><g transform="translate(1871 548)"><rect x="0.8" y="3" width="12.4" height="9.5" rx="1" fill="#f2f2f2" stroke="#111" stroke-width="1"/><rect x="2.2" y="1.5" width="3" height="2" fill="#eee" stroke="#111" stroke-width="0.8"/><circle cx="7.3" cy="7.8" r="3.1" fill="#2a2f48" stroke="#111" stroke-width="0.8"/><path d="M7.3 7.8 L10.2 8.8 A3 3 0 0 1 6 10.5Z" fill="#b8503c"/><circle cx="2.6" cy="5.6" r="0.8" fill="#e00"/></g><path d="M1608 575.5 H1620" stroke="#2e2e2e" stroke-width="1"/><circle cx="1604" cy="574.5" r="4" fill="#e6e6e6" stroke="#1a1a1a" stroke-width="1"/><path d="M1601.5 574.5 H1606.5 M1604 572 V577" stroke="#111" stroke-width="1.1"/><g transform="translate(1619.5 568.5)"><path d="M1.8 2 H11.2 L6.5 11.5Z" fill="none" stroke="#1a1a1a" stroke-width="2.6" stroke-linejoin="round"/><path d="M1.8 2 H11.2 L6.5 11.5Z" fill="none" stroke="#f39a33" stroke-width="1.3" stroke-linejoin="round"/><circle cx="1.8" cy="2" r="1.2" fill="#fff"/><circle cx="11.2" cy="2" r="1.2" fill="#fff"/><circle cx="6.5" cy="11.5" r="1.2" fill="#fff"/></g><path d="M1772.7 570 V580" stroke="#2a2a2a" stroke-width="1.3"/><g transform="translate(1783.7 568.5)"><path d="M1.8 2 H11.2 L6.5 11.5Z" fill="none" stroke="#3a3a3a" stroke-width="1.1" /><circle cx="1.8" cy="2" r="1.4" fill="#e0e0e0" stroke="#333" stroke-width="0.8"/><circle cx="11.2" cy="2" r="1.4" fill="#e0e0e0" stroke="#333" stroke-width="0.8"/><circle cx="6.5" cy="11.5" r="1.4" fill="#e0e0e0" stroke="#333" stroke-width="0.8"/></g><g transform="translate(1831 569)"><path d="M0.5 6 Q7 -1 13.5 6 Q7 12.5 0.5 6Z" fill="#f8f8f8" stroke="#1a1a1a" stroke-width="1"/><circle cx="7" cy="5.8" r="2.8" fill="#6a6a6a"/><circle cx="7" cy="5.8" r="1.3" fill="#000"/><circle cx="6.1" cy="4.8" r="0.7" fill="#fff"/></g><g transform="translate(1854 568)"><path d="M2 1 L2 12 L4.8 9.3 L7 14 L8.8 13 L6.6 8.5 L10 8.2Z" fill="#f0f0f0" stroke="#111" stroke-width="1"/></g><g transform="translate(1871 568)"><rect x="0.8" y="3" width="12.4" height="9.5" rx="1" fill="#f2f2f2" stroke="#111" stroke-width="1"/><rect x="2.2" y="1.5" width="3" height="2" fill="#eee" stroke="#111" stroke-width="0.8"/><circle cx="7.3" cy="7.8" r="3.1" fill="#2a2f48" stroke="#111" stroke-width="0.8"/><path d="M7.3 7.8 L10.2 8.8 A3 3 0 0 1 6 10.5Z" fill="#b8503c"/><circle cx="2.6" cy="5.6" r="0.8" fill="#e00"/></g><path d="M1608 595.5 H1620" stroke="#2e2e2e" stroke-width="1"/><circle cx="1604" cy="594.5" r="4" fill="#e6e6e6" stroke="#1a1a1a" stroke-width="1"/><path d="M1601.5 594.5 H1606.5 M1604 592 V597" stroke="#111" stroke-width="1.1"/><g transform="translate(1619.5 588.5)"><path d="M1.8 2 H11.2 L6.5 11.5Z" fill="none" stroke="#1a1a1a" stroke-width="2.6" stroke-linejoin="round"/><path d="M1.8 2 H11.2 L6.5 11.5Z" fill="none" stroke="#f39a33" stroke-width="1.3" stroke-linejoin="round"/><circle cx="1.8" cy="2" r="1.2" fill="#fff"/><circle cx="11.2" cy="2" r="1.2" fill="#fff"/><circle cx="6.5" cy="11.5" r="1.2" fill="#fff"/></g><path d="M1754.5 590 V600" stroke="#2a2a2a" stroke-width="1.3"/><g transform="translate(1765.5 588.5)"><path d="M1.8 2 H11.2 L6.5 11.5Z" fill="none" stroke="#3a3a3a" stroke-width="1.1" /><circle cx="1.8" cy="2" r="1.4" fill="#e0e0e0" stroke="#333" stroke-width="0.8"/><circle cx="11.2" cy="2" r="1.4" fill="#e0e0e0" stroke="#333" stroke-width="0.8"/><circle cx="6.5" cy="11.5" r="1.4" fill="#e0e0e0" stroke="#333" stroke-width="0.8"/></g><g transform="translate(1831 589)"><path d="M0.5 6 Q7 -1 13.5 6 Q7 12.5 0.5 6Z" fill="#f8f8f8" stroke="#1a1a1a" stroke-width="1"/><circle cx="7" cy="5.8" r="2.8" fill="#6a6a6a"/><circle cx="7" cy="5.8" r="1.3" fill="#000"/><circle cx="6.1" cy="4.8" r="0.7" fill="#fff"/></g><g transform="translate(1854 588)"><path d="M2 1 L2 12 L4.8 9.3 L7 14 L8.8 13 L6.6 8.5 L10 8.2Z" fill="#f0f0f0" stroke="#111" stroke-width="1"/></g><g transform="translate(1871 588)"><rect x="0.8" y="3" width="12.4" height="9.5" rx="1" fill="#f2f2f2" stroke="#111" stroke-width="1"/><rect x="2.2" y="1.5" width="3" height="2" fill="#eee" stroke="#111" stroke-width="0.8"/><circle cx="7.3" cy="7.8" r="3.1" fill="#2a2f48" stroke="#111" stroke-width="0.8"/><path d="M7.3 7.8 L10.2 8.8 A3 3 0 0 1 6 10.5Z" fill="#b8503c"/><circle cx="2.6" cy="5.6" r="0.8" fill="#e00"/></g><path d="M1608 615.5 H1620" stroke="#2e2e2e" stroke-width="1"/><circle cx="1604" cy="614.5" r="4" fill="#e6e6e6" stroke="#1a1a1a" stroke-width="1"/><path d="M1601.5 614.5 H1606.5 M1604 612 V617" stroke="#111" stroke-width="1.1"/><g transform="translate(1619.5 608.5)"><path d="M1.8 2 H11.2 L6.5 11.5Z" fill="none" stroke="#1a1a1a" stroke-width="2.6" stroke-linejoin="round"/><path d="M1.8 2 H11.2 L6.5 11.5Z" fill="none" stroke="#f39a33" stroke-width="1.3" stroke-linejoin="round"/><circle cx="1.8" cy="2" r="1.2" fill="#fff"/><circle cx="11.2" cy="2" r="1.2" fill="#fff"/><circle cx="6.5" cy="11.5" r="1.2" fill="#fff"/></g><path d="M1808.5 610 V620" stroke="#2a2a2a" stroke-width="1.3"/><g transform="translate(1819.5 608.5)"><path d="M1.8 2 H11.2 L6.5 11.5Z" fill="none" stroke="#3a3a3a" stroke-width="1.1" /><circle cx="1.8" cy="2" r="1.4" fill="#e0e0e0" stroke="#333" stroke-width="0.8"/><circle cx="11.2" cy="2" r="1.4" fill="#e0e0e0" stroke="#333" stroke-width="0.8"/><circle cx="6.5" cy="11.5" r="1.4" fill="#e0e0e0" stroke="#333" stroke-width="0.8"/></g><g transform="translate(1831 609)"><path d="M1.5 5 Q7 10 12.5 5 Q7 8 1.5 5Z" fill="#6a6a6a" stroke="#777" stroke-width="0.6"/></g><g transform="translate(1854 608)"><path d="M2 1 L2 12 L4.8 9.3 L7 14 L8.8 13 L6.6 8.5 L10 8.2Z" fill="#f0f0f0" stroke="#111" stroke-width="1"/></g><g transform="translate(1871 608)"><rect x="0.8" y="3" width="12.4" height="9.5" rx="1" fill="#f2f2f2" stroke="#111" stroke-width="1"/><rect x="2.2" y="1.5" width="3" height="2" fill="#eee" stroke="#111" stroke-width="0.8"/><circle cx="7.3" cy="7.8" r="3.1" fill="#2a2f48" stroke="#111" stroke-width="0.8"/><path d="M7.3 7.8 L10.2 8.8 A3 3 0 0 1 6 10.5Z" fill="#b8503c"/><circle cx="2.6" cy="5.6" r="0.8" fill="#e00"/></g><path d="M1608 635.5 H1620" stroke="#2e2e2e" stroke-width="1"/><circle cx="1604" cy="634.5" r="4" fill="#e6e6e6" stroke="#1a1a1a" stroke-width="1"/><path d="M1601.5 634.5 H1606.5 M1604 632 V637" stroke="#111" stroke-width="1.1"/><g transform="translate(1619.5 628.5)"><path d="M1.8 2 H11.2 L6.5 11.5Z" fill="none" stroke="#1a1a1a" stroke-width="2.6" stroke-linejoin="round"/><path d="M1.8 2 H11.2 L6.5 11.5Z" fill="none" stroke="#f39a33" stroke-width="1.3" stroke-linejoin="round"/><circle cx="1.8" cy="2" r="1.2" fill="#fff"/><circle cx="11.2" cy="2" r="1.2" fill="#fff"/><circle cx="6.5" cy="11.5" r="1.2" fill="#fff"/></g><path d="M1772.1 630 V640" stroke="#2a2a2a" stroke-width="1.3"/><g transform="translate(1783.1 628.5)"><path d="M1.8 2 H11.2 L6.5 11.5Z" fill="none" stroke="#3a3a3a" stroke-width="1.1" /><circle cx="1.8" cy="2" r="1.4" fill="#e0e0e0" stroke="#333" stroke-width="0.8"/><circle cx="11.2" cy="2" r="1.4" fill="#e0e0e0" stroke="#333" stroke-width="0.8"/><circle cx="6.5" cy="11.5" r="1.4" fill="#e0e0e0" stroke="#333" stroke-width="0.8"/></g><g transform="translate(1831 629)"><path d="M0.5 6 Q7 -1 13.5 6 Q7 12.5 0.5 6Z" fill="#f8f8f8" stroke="#1a1a1a" stroke-width="1"/><circle cx="7" cy="5.8" r="2.8" fill="#6a6a6a"/><circle cx="7" cy="5.8" r="1.3" fill="#000"/><circle cx="6.1" cy="4.8" r="0.7" fill="#fff"/></g><g transform="translate(1854 628)"><path d="M2 1 L2 12 L4.8 9.3 L7 14 L8.8 13 L6.6 8.5 L10 8.2Z" fill="#f0f0f0" stroke="#111" stroke-width="1"/></g><g transform="translate(1871 628)"><rect x="0.8" y="3" width="12.4" height="9.5" rx="1" fill="#f2f2f2" stroke="#111" stroke-width="1"/><rect x="2.2" y="1.5" width="3" height="2" fill="#eee" stroke="#111" stroke-width="0.8"/><circle cx="7.3" cy="7.8" r="3.1" fill="#2a2f48" stroke="#111" stroke-width="0.8"/><path d="M7.3 7.8 L10.2 8.8 A3 3 0 0 1 6 10.5Z" fill="#b8503c"/><circle cx="2.6" cy="5.6" r="0.8" fill="#e00"/></g><path d="M1608 655.5 H1620" stroke="#2e2e2e" stroke-width="1"/><circle cx="1604" cy="654.5" r="4" fill="#e6e6e6" stroke="#1a1a1a" stroke-width="1"/><path d="M1601.5 654.5 H1606.5 M1604 652 V657" stroke="#111" stroke-width="1.1"/><g transform="translate(1619.5 648.5)"><path d="M1.8 2 H11.2 L6.5 11.5Z" fill="none" stroke="#1a1a1a" stroke-width="2.6" stroke-linejoin="round"/><path d="M1.8 2 H11.2 L6.5 11.5Z" fill="none" stroke="#f39a33" stroke-width="1.3" stroke-linejoin="round"/><circle cx="1.8" cy="2" r="1.2" fill="#fff"/><circle cx="11.2" cy="2" r="1.2" fill="#fff"/><circle cx="6.5" cy="11.5" r="1.2" fill="#fff"/></g><path d="M1756.4 650 V660" stroke="#2a2a2a" stroke-width="1.3"/><g transform="translate(1767.4 648.5)"><path d="M1.8 2 H11.2 L6.5 11.5Z" fill="none" stroke="#3a3a3a" stroke-width="1.1" /><circle cx="1.8" cy="2" r="1.4" fill="#e0e0e0" stroke="#333" stroke-width="0.8"/><circle cx="11.2" cy="2" r="1.4" fill="#e0e0e0" stroke="#333" stroke-width="0.8"/><circle cx="6.5" cy="11.5" r="1.4" fill="#e0e0e0" stroke="#333" stroke-width="0.8"/></g><g transform="translate(1831 649)"><path d="M0.5 6 Q7 -1 13.5 6 Q7 12.5 0.5 6Z" fill="#f8f8f8" stroke="#1a1a1a" stroke-width="1"/><circle cx="7" cy="5.8" r="2.8" fill="#6a6a6a"/><circle cx="7" cy="5.8" r="1.3" fill="#000"/><circle cx="6.1" cy="4.8" r="0.7" fill="#fff"/></g><g transform="translate(1854 648)"><path d="M2 1 L2 12 L4.8 9.3 L7 14 L8.8 13 L6.6 8.5 L10 8.2Z" fill="#f0f0f0" stroke="#111" stroke-width="1"/></g><g transform="translate(1871 648)"><rect x="0.8" y="3" width="12.4" height="9.5" rx="1" fill="#f2f2f2" stroke="#111" stroke-width="1"/><rect x="2.2" y="1.5" width="3" height="2" fill="#eee" stroke="#111" stroke-width="0.8"/><circle cx="7.3" cy="7.8" r="3.1" fill="#2a2f48" stroke="#111" stroke-width="0.8"/><path d="M7.3 7.8 L10.2 8.8 A3 3 0 0 1 6 10.5Z" fill="#b8503c"/><circle cx="2.6" cy="5.6" r="0.8" fill="#e00"/></g><path d="M1608 675.5 H1620" stroke="#2e2e2e" stroke-width="1"/><circle cx="1604" cy="674.5" r="4" fill="#e6e6e6" stroke="#1a1a1a" stroke-width="1"/><path d="M1601.5 674.5 H1606.5 M1604 672 V677" stroke="#111" stroke-width="1.1"/><g transform="translate(1619.5 668.5)"><path d="M1.8 2 H11.2 L6.5 11.5Z" fill="none" stroke="#1a1a1a" stroke-width="2.6" stroke-linejoin="round"/><path d="M1.8 2 H11.2 L6.5 11.5Z" fill="none" stroke="#f39a33" stroke-width="1.3" stroke-linejoin="round"/><circle cx="1.8" cy="2" r="1.2" fill="#fff"/><circle cx="11.2" cy="2" r="1.2" fill="#fff"/><circle cx="6.5" cy="11.5" r="1.2" fill="#fff"/></g><path d="M1810.3 670 V680" stroke="#2a2a2a" stroke-width="1.3"/><g transform="translate(1821.3 668.5)"><path d="M1.8 2 H11.2 L6.5 11.5Z" fill="none" stroke="#3a3a3a" stroke-width="1.1" /><circle cx="1.8" cy="2" r="1.4" fill="#e0e0e0" stroke="#333" stroke-width="0.8"/><circle cx="11.2" cy="2" r="1.4" fill="#e0e0e0" stroke="#333" stroke-width="0.8"/><circle cx="6.5" cy="11.5" r="1.4" fill="#e0e0e0" stroke="#333" stroke-width="0.8"/></g><g transform="translate(1831 669)"><path d="M1.5 5 Q7 10 12.5 5 Q7 8 1.5 5Z" fill="#6a6a6a" stroke="#777" stroke-width="0.6"/></g><g transform="translate(1854 668)"><path d="M2 1 L2 12 L4.8 9.3 L7 14 L8.8 13 L6.6 8.5 L10 8.2Z" fill="#f0f0f0" stroke="#111" stroke-width="1"/></g><g transform="translate(1871 668)"><rect x="0.8" y="3" width="12.4" height="9.5" rx="1" fill="#f2f2f2" stroke="#111" stroke-width="1"/><rect x="2.2" y="1.5" width="3" height="2" fill="#eee" stroke="#111" stroke-width="0.8"/><circle cx="7.3" cy="7.8" r="3.1" fill="#2a2f48" stroke="#111" stroke-width="0.8"/><path d="M7.3 7.8 L10.2 8.8 A3 3 0 0 1 6 10.5Z" fill="#b8503c"/><circle cx="2.6" cy="5.6" r="0.8" fill="#e00"/></g><path d="M1608 695.5 H1620" stroke="#2e2e2e" stroke-width="1"/><circle cx="1604" cy="694.5" r="4" fill="#e6e6e6" stroke="#1a1a1a" stroke-width="1"/><path d="M1601.5 694.5 H1606.5 M1604 692 V697" stroke="#111" stroke-width="1.1"/><g transform="translate(1619.5 688.5)"><path d="M1.8 2 H11.2 L6.5 11.5Z" fill="none" stroke="#1a1a1a" stroke-width="2.6" stroke-linejoin="round"/><path d="M1.8 2 H11.2 L6.5 11.5Z" fill="none" stroke="#f39a33" stroke-width="1.3" stroke-linejoin="round"/><circle cx="1.8" cy="2" r="1.2" fill="#fff"/><circle cx="11.2" cy="2" r="1.2" fill="#fff"/><circle cx="6.5" cy="11.5" r="1.2" fill="#fff"/></g><path d="M1773.9 690 V700" stroke="#2a2a2a" stroke-width="1.3"/><g transform="translate(1784.9 688.5)"><path d="M1.8 2 H11.2 L6.5 11.5Z" fill="none" stroke="#3a3a3a" stroke-width="1.1" /><circle cx="1.8" cy="2" r="1.4" fill="#e0e0e0" stroke="#333" stroke-width="0.8"/><circle cx="11.2" cy="2" r="1.4" fill="#e0e0e0" stroke="#333" stroke-width="0.8"/><circle cx="6.5" cy="11.5" r="1.4" fill="#e0e0e0" stroke="#333" stroke-width="0.8"/></g><g transform="translate(1831 689)"><path d="M0.5 6 Q7 -1 13.5 6 Q7 12.5 0.5 6Z" fill="#f8f8f8" stroke="#1a1a1a" stroke-width="1"/><circle cx="7" cy="5.8" r="2.8" fill="#6a6a6a"/><circle cx="7" cy="5.8" r="1.3" fill="#000"/><circle cx="6.1" cy="4.8" r="0.7" fill="#fff"/></g><g transform="translate(1854 688)"><path d="M2 1 L2 12 L4.8 9.3 L7 14 L8.8 13 L6.6 8.5 L10 8.2Z" fill="#f0f0f0" stroke="#111" stroke-width="1"/></g><g transform="translate(1871 688)"><rect x="0.8" y="3" width="12.4" height="9.5" rx="1" fill="#f2f2f2" stroke="#111" stroke-width="1"/><rect x="2.2" y="1.5" width="3" height="2" fill="#eee" stroke="#111" stroke-width="0.8"/><circle cx="7.3" cy="7.8" r="3.1" fill="#2a2f48" stroke="#111" stroke-width="0.8"/><path d="M7.3 7.8 L10.2 8.8 A3 3 0 0 1 6 10.5Z" fill="#b8503c"/><circle cx="2.6" cy="5.6" r="0.8" fill="#e00"/></g><path d="M1608 715.5 H1620" stroke="#2e2e2e" stroke-width="1"/><circle cx="1604" cy="714.5" r="4" fill="#e6e6e6" stroke="#1a1a1a" stroke-width="1"/><path d="M1601.5 714.5 H1606.5 M1604 712 V717" stroke="#111" stroke-width="1.1"/><g transform="translate(1619.5 708.5)"><path d="M1.8 2 H11.2 L6.5 11.5Z" fill="none" stroke="#1a1a1a" stroke-width="2.6" stroke-linejoin="round"/><path d="M1.8 2 H11.2 L6.5 11.5Z" fill="none" stroke="#f39a33" stroke-width="1.3" stroke-linejoin="round"/><circle cx="1.8" cy="2" r="1.2" fill="#fff"/><circle cx="11.2" cy="2" r="1.2" fill="#fff"/><circle cx="6.5" cy="11.5" r="1.2" fill="#fff"/></g><path d="M1754.6 710 V720" stroke="#2a2a2a" stroke-width="1.3"/><g transform="translate(1765.6 708.5)"><path d="M1.8 2 H11.2 L6.5 11.5Z" fill="none" stroke="#3a3a3a" stroke-width="1.1" /><circle cx="1.8" cy="2" r="1.4" fill="#e0e0e0" stroke="#333" stroke-width="0.8"/><circle cx="11.2" cy="2" r="1.4" fill="#e0e0e0" stroke="#333" stroke-width="0.8"/><circle cx="6.5" cy="11.5" r="1.4" fill="#e0e0e0" stroke="#333" stroke-width="0.8"/></g><g transform="translate(1831 709)"><path d="M0.5 6 Q7 -1 13.5 6 Q7 12.5 0.5 6Z" fill="#f8f8f8" stroke="#1a1a1a" stroke-width="1"/><circle cx="7" cy="5.8" r="2.8" fill="#6a6a6a"/><circle cx="7" cy="5.8" r="1.3" fill="#000"/><circle cx="6.1" cy="4.8" r="0.7" fill="#fff"/></g><g transform="translate(1854 708)"><path d="M2 1 L2 12 L4.8 9.3 L7 14 L8.8 13 L6.6 8.5 L10 8.2Z" fill="#f0f0f0" stroke="#111" stroke-width="1"/></g><g transform="translate(1871 708)"><rect x="0.8" y="3" width="12.4" height="9.5" rx="1" fill="#f2f2f2" stroke="#111" stroke-width="1"/><rect x="2.2" y="1.5" width="3" height="2" fill="#eee" stroke="#111" stroke-width="0.8"/><circle cx="7.3" cy="7.8" r="3.1" fill="#2a2f48" stroke="#111" stroke-width="0.8"/><path d="M7.3 7.8 L10.2 8.8 A3 3 0 0 1 6 10.5Z" fill="#b8503c"/><circle cx="2.6" cy="5.6" r="0.8" fill="#e00"/></g><path d="M1608 735.5 H1620" stroke="#2e2e2e" stroke-width="1"/><circle cx="1604" cy="734.5" r="4" fill="#e6e6e6" stroke="#1a1a1a" stroke-width="1"/><path d="M1601.5 734.5 H1606.5 M1604 732 V737" stroke="#111" stroke-width="1.1"/><g transform="translate(1619.5 728.5)"><path d="M1.8 2 H11.2 L6.5 11.5Z" fill="none" stroke="#1a1a1a" stroke-width="2.6" stroke-linejoin="round"/><path d="M1.8 2 H11.2 L6.5 11.5Z" fill="none" stroke="#f39a33" stroke-width="1.3" stroke-linejoin="round"/><circle cx="1.8" cy="2" r="1.2" fill="#fff"/><circle cx="11.2" cy="2" r="1.2" fill="#fff"/><circle cx="6.5" cy="11.5" r="1.2" fill="#fff"/></g><path d="M1756.4 730 V740" stroke="#2a2a2a" stroke-width="1.3"/><g transform="translate(1767.4 728.5)"><path d="M1.8 2 H11.2 L6.5 11.5Z" fill="none" stroke="#3a3a3a" stroke-width="1.1" /><circle cx="1.8" cy="2" r="1.4" fill="#e0e0e0" stroke="#333" stroke-width="0.8"/><circle cx="11.2" cy="2" r="1.4" fill="#e0e0e0" stroke="#333" stroke-width="0.8"/><circle cx="6.5" cy="11.5" r="1.4" fill="#e0e0e0" stroke="#333" stroke-width="0.8"/></g><g transform="translate(1831 729)"><path d="M0.5 6 Q7 -1 13.5 6 Q7 12.5 0.5 6Z" fill="#f8f8f8" stroke="#1a1a1a" stroke-width="1"/><circle cx="7" cy="5.8" r="2.8" fill="#6a6a6a"/><circle cx="7" cy="5.8" r="1.3" fill="#000"/><circle cx="6.1" cy="4.8" r="0.7" fill="#fff"/></g><g transform="translate(1854 728)"><path d="M2 1 L2 12 L4.8 9.3 L7 14 L8.8 13 L6.6 8.5 L10 8.2Z" fill="#f0f0f0" stroke="#111" stroke-width="1"/></g><g transform="translate(1871 728)"><rect x="0.8" y="3" width="12.4" height="9.5" rx="1" fill="#f2f2f2" stroke="#111" stroke-width="1"/><rect x="2.2" y="1.5" width="3" height="2" fill="#eee" stroke="#111" stroke-width="0.8"/><circle cx="7.3" cy="7.8" r="3.1" fill="#2a2f48" stroke="#111" stroke-width="0.8"/><path d="M7.3 7.8 L10.2 8.8 A3 3 0 0 1 6 10.5Z" fill="#b8503c"/><circle cx="2.6" cy="5.6" r="0.8" fill="#e00"/></g><path d="M1608 755.5 H1620" stroke="#2e2e2e" stroke-width="1"/><circle cx="1604" cy="754.5" r="4" fill="#e6e6e6" stroke="#1a1a1a" stroke-width="1"/><path d="M1601.5 754.5 H1606.5 M1604 752 V757" stroke="#111" stroke-width="1.1"/><g transform="translate(1619.5 748.5)"><path d="M1.8 2 H11.2 L6.5 11.5Z" fill="none" stroke="#1a1a1a" stroke-width="2.6" stroke-linejoin="round"/><path d="M1.8 2 H11.2 L6.5 11.5Z" fill="none" stroke="#f39a33" stroke-width="1.3" stroke-linejoin="round"/><circle cx="1.8" cy="2" r="1.2" fill="#fff"/><circle cx="11.2" cy="2" r="1.2" fill="#fff"/><circle cx="6.5" cy="11.5" r="1.2" fill="#fff"/></g><path d="M1755.8 750 V760" stroke="#2a2a2a" stroke-width="1.3"/><g transform="translate(1766.8 748.5)"><path d="M1.8 2 H11.2 L6.5 11.5Z" fill="none" stroke="#3a3a3a" stroke-width="1.1" /><circle cx="1.8" cy="2" r="1.4" fill="#e0e0e0" stroke="#333" stroke-width="0.8"/><circle cx="11.2" cy="2" r="1.4" fill="#e0e0e0" stroke="#333" stroke-width="0.8"/><circle cx="6.5" cy="11.5" r="1.4" fill="#e0e0e0" stroke="#333" stroke-width="0.8"/></g><g transform="translate(1831 749)"><path d="M0.5 6 Q7 -1 13.5 6 Q7 12.5 0.5 6Z" fill="#f8f8f8" stroke="#1a1a1a" stroke-width="1"/><circle cx="7" cy="5.8" r="2.8" fill="#6a6a6a"/><circle cx="7" cy="5.8" r="1.3" fill="#000"/><circle cx="6.1" cy="4.8" r="0.7" fill="#fff"/></g><g transform="translate(1854 748)"><path d="M2 1 L2 12 L4.8 9.3 L7 14 L8.8 13 L6.6 8.5 L10 8.2Z" fill="#f0f0f0" stroke="#111" stroke-width="1"/></g><g transform="translate(1871 748)"><rect x="0.8" y="3" width="12.4" height="9.5" rx="1" fill="#f2f2f2" stroke="#111" stroke-width="1"/><rect x="2.2" y="1.5" width="3" height="2" fill="#eee" stroke="#111" stroke-width="0.8"/><circle cx="7.3" cy="7.8" r="3.1" fill="#2a2f48" stroke="#111" stroke-width="0.8"/><path d="M7.3 7.8 L10.2 8.8 A3 3 0 0 1 6 10.5Z" fill="#b8503c"/><circle cx="2.6" cy="5.6" r="0.8" fill="#e00"/></g><path d="M1608 775.5 H1620" stroke="#2e2e2e" stroke-width="1"/><circle cx="1604" cy="774.5" r="4" fill="#e6e6e6" stroke="#1a1a1a" stroke-width="1"/><path d="M1601.5 774.5 H1606.5 M1604 772 V777" stroke="#111" stroke-width="1.1"/><g transform="translate(1619.5 768.5)"><path d="M1.8 2 H11.2 L6.5 11.5Z" fill="none" stroke="#1a1a1a" stroke-width="2.6" stroke-linejoin="round"/><path d="M1.8 2 H11.2 L6.5 11.5Z" fill="none" stroke="#f39a33" stroke-width="1.3" stroke-linejoin="round"/><circle cx="1.8" cy="2" r="1.2" fill="#fff"/><circle cx="11.2" cy="2" r="1.2" fill="#fff"/><circle cx="6.5" cy="11.5" r="1.2" fill="#fff"/></g><path d="M1757.6 770 V780" stroke="#2a2a2a" stroke-width="1.3"/><g transform="translate(1768.6 768.5)"><path d="M1.8 2 H11.2 L6.5 11.5Z" fill="none" stroke="#3a3a3a" stroke-width="1.1" /><circle cx="1.8" cy="2" r="1.4" fill="#e0e0e0" stroke="#333" stroke-width="0.8"/><circle cx="11.2" cy="2" r="1.4" fill="#e0e0e0" stroke="#333" stroke-width="0.8"/><circle cx="6.5" cy="11.5" r="1.4" fill="#e0e0e0" stroke="#333" stroke-width="0.8"/></g><g transform="translate(1831 769)"><path d="M0.5 6 Q7 -1 13.5 6 Q7 12.5 0.5 6Z" fill="#f8f8f8" stroke="#1a1a1a" stroke-width="1"/><circle cx="7" cy="5.8" r="2.8" fill="#6a6a6a"/><circle cx="7" cy="5.8" r="1.3" fill="#000"/><circle cx="6.1" cy="4.8" r="0.7" fill="#fff"/></g><g transform="translate(1854 768)"><path d="M2 1 L2 12 L4.8 9.3 L7 14 L8.8 13 L6.6 8.5 L10 8.2Z" fill="#f0f0f0" stroke="#111" stroke-width="1"/></g><g transform="translate(1871 768)"><rect x="0.8" y="3" width="12.4" height="9.5" rx="1" fill="#f2f2f2" stroke="#111" stroke-width="1"/><rect x="2.2" y="1.5" width="3" height="2" fill="#eee" stroke="#111" stroke-width="0.8"/><circle cx="7.3" cy="7.8" r="3.1" fill="#2a2f48" stroke="#111" stroke-width="0.8"/><path d="M7.3 7.8 L10.2 8.8 A3 3 0 0 1 6 10.5Z" fill="#b8503c"/><circle cx="2.6" cy="5.6" r="0.8" fill="#e00"/></g><path d="M1608 795.5 H1620" stroke="#2e2e2e" stroke-width="1"/><circle cx="1604" cy="794.5" r="4" fill="#e6e6e6" stroke="#1a1a1a" stroke-width="1"/><path d="M1601.5 794.5 H1606.5 M1604 792 V797" stroke="#111" stroke-width="1.1"/><g transform="translate(1619.5 788.5)"><path d="M1.8 2 H11.2 L6.5 11.5Z" fill="none" stroke="#1a1a1a" stroke-width="2.6" stroke-linejoin="round"/><path d="M1.8 2 H11.2 L6.5 11.5Z" fill="none" stroke="#f39a33" stroke-width="1.3" stroke-linejoin="round"/><circle cx="1.8" cy="2" r="1.2" fill="#fff"/><circle cx="11.2" cy="2" r="1.2" fill="#fff"/><circle cx="6.5" cy="11.5" r="1.2" fill="#fff"/></g><path d="M1734.5 790 V800" stroke="#2a2a2a" stroke-width="1.3"/><g transform="translate(1745.5 788.5)"><path d="M1.8 2 H11.2 L6.5 11.5Z" fill="none" stroke="#3a3a3a" stroke-width="1.1" /><circle cx="1.8" cy="2" r="1.4" fill="#e0e0e0" stroke="#333" stroke-width="0.8"/><circle cx="11.2" cy="2" r="1.4" fill="#e0e0e0" stroke="#333" stroke-width="0.8"/><circle cx="6.5" cy="11.5" r="1.4" fill="#e0e0e0" stroke="#333" stroke-width="0.8"/></g><g transform="translate(1831 789)"><path d="M0.5 6 Q7 -1 13.5 6 Q7 12.5 0.5 6Z" fill="#f8f8f8" stroke="#1a1a1a" stroke-width="1"/><circle cx="7" cy="5.8" r="2.8" fill="#6a6a6a"/><circle cx="7" cy="5.8" r="1.3" fill="#000"/><circle cx="6.1" cy="4.8" r="0.7" fill="#fff"/></g><g transform="translate(1854 788)"><path d="M2 1 L2 12 L4.8 9.3 L7 14 L8.8 13 L6.6 8.5 L10 8.2Z" fill="#f0f0f0" stroke="#111" stroke-width="1"/></g><g transform="translate(1871 788)"><rect x="0.8" y="3" width="12.4" height="9.5" rx="1" fill="#f2f2f2" stroke="#111" stroke-width="1"/><rect x="2.2" y="1.5" width="3" height="2" fill="#eee" stroke="#111" stroke-width="0.8"/><circle cx="7.3" cy="7.8" r="3.1" fill="#2a2f48" stroke="#111" stroke-width="0.8"/><path d="M7.3 7.8 L10.2 8.8 A3 3 0 0 1 6 10.5Z" fill="#b8503c"/><circle cx="2.6" cy="5.6" r="0.8" fill="#e00"/></g><path d="M1608 815.5 H1620" stroke="#2e2e2e" stroke-width="1"/><circle cx="1604" cy="814.5" r="4" fill="#e6e6e6" stroke="#1a1a1a" stroke-width="1"/><path d="M1601.5 814.5 H1606.5 M1604 812 V817" stroke="#111" stroke-width="1.1"/><g transform="translate(1619.5 808.5)"><path d="M1.8 2 H11.2 L6.5 11.5Z" fill="none" stroke="#1a1a1a" stroke-width="2.6" stroke-linejoin="round"/><path d="M1.8 2 H11.2 L6.5 11.5Z" fill="none" stroke="#f39a33" stroke-width="1.3" stroke-linejoin="round"/><circle cx="1.8" cy="2" r="1.2" fill="#fff"/><circle cx="11.2" cy="2" r="1.2" fill="#fff"/><circle cx="6.5" cy="11.5" r="1.2" fill="#fff"/></g><path d="M1720.0 810 V820" stroke="#2a2a2a" stroke-width="1.3"/><g transform="translate(1731.0 808.5)"><path d="M1.8 2 H11.2 L6.5 11.5Z" fill="none" stroke="#3a3a3a" stroke-width="1.1" /><circle cx="1.8" cy="2" r="1.4" fill="#e0e0e0" stroke="#333" stroke-width="0.8"/><circle cx="11.2" cy="2" r="1.4" fill="#e0e0e0" stroke="#333" stroke-width="0.8"/><circle cx="6.5" cy="11.5" r="1.4" fill="#e0e0e0" stroke="#333" stroke-width="0.8"/></g><g transform="translate(1831 809)"><path d="M0.5 6 Q7 -1 13.5 6 Q7 12.5 0.5 6Z" fill="#f8f8f8" stroke="#1a1a1a" stroke-width="1"/><circle cx="7" cy="5.8" r="2.8" fill="#6a6a6a"/><circle cx="7" cy="5.8" r="1.3" fill="#000"/><circle cx="6.1" cy="4.8" r="0.7" fill="#fff"/></g><g transform="translate(1854 808)"><path d="M2 1 L2 12 L4.8 9.3 L7 14 L8.8 13 L6.6 8.5 L10 8.2Z" fill="#f0f0f0" stroke="#111" stroke-width="1"/></g><g transform="translate(1871 808)"><rect x="0.8" y="3" width="12.4" height="9.5" rx="1" fill="#f2f2f2" stroke="#111" stroke-width="1"/><rect x="2.2" y="1.5" width="3" height="2" fill="#eee" stroke="#111" stroke-width="0.8"/><circle cx="7.3" cy="7.8" r="3.1" fill="#2a2f48" stroke="#111" stroke-width="0.8"/><path d="M7.3 7.8 L10.2 8.8 A3 3 0 0 1 6 10.5Z" fill="#b8503c"/><circle cx="2.6" cy="5.6" r="0.8" fill="#e00"/></g></svg></div>
<div class=t style="left:1637.4px;top:88.5px;line-height:14px;font-size:10.9px">fullsize_body</div>
<div class=t style="left:1637.4px;top:108.5px;line-height:14px;font-size:10.9px">fullsize_brakedisc_FL</div>
<div class=t style="left:1637.4px;top:128.5px;line-height:14px;font-size:10.9px">fullsize_brakedisc_FR</div>
<div class=t style="left:1637.4px;top:148.5px;line-height:14px;font-size:10.9px">fullsize_brakedisc_RL</div>
<div class=t style="left:1637.4px;top:168.5px;line-height:14px;font-size:10.9px">fullsize_brakedisc_RR</div>
<div class=t style="left:1637.4px;top:188.5px;line-height:14px;font-size:10.9px">fullsize_brakepedal</div>
<div class=t style="left:1637.4px;top:208.5px;line-height:14px;font-size:10.9px">fullsize_bumper_F</div>
<div class=t style="left:1637.4px;top:228.5px;line-height:14px;font-size:10.9px">fullsize_bumper_R</div>
<div class=t style="left:1637.4px;top:248.5px;line-height:14px;font-size:10.9px">fullsize_bumpersignal_L</div>
<div class=t style="left:1637.4px;top:268.5px;line-height:14px;font-size:10.9px">fullsize_bumpersignal_R</div>
<div class=t style="left:1637.4px;top:288.5px;line-height:14px;font-size:10.9px">fullsize_chmsl</div>
<div class=t style="left:1637.4px;top:308.5px;line-height:14px;font-size:10.9px">fullsize_clutchpedal</div>
<div class=t style="left:1637.4px;top:328.5px;line-height:14px;font-size:10.9px">fullsize_dash</div>
<div class=t style="left:1637.4px;top:348.5px;line-height:14px;font-size:10.9px">fullsize_decals_gauges</div>
<div class=t style="left:1637.4px;top:368.5px;line-height:14px;font-size:10.9px">fullsize_door_FL</div>
<div class=t style="left:1637.4px;top:388.5px;line-height:14px;font-size:10.9px">fullsize_door_FR</div>
<div class=t style="left:1637.4px;top:408.5px;line-height:14px;font-size:10.9px">fullsize_door_ML</div>
<div class=t style="left:1637.4px;top:428.5px;line-height:14px;font-size:10.9px">fullsize_door_ML_dupl1</div>
<div class=t style="left:1637.4px;top:448.5px;line-height:14px;font-size:10.9px">fullsize_door_MR_dupl0</div>
<div class=t style="left:1637.4px;top:468.5px;line-height:14px;font-size:10.9px">fullsize_door_RL</div>
<div class=t style="left:1637.4px;top:488.5px;line-height:14px;font-size:10.9px">fullsize_door_RR</div>
<div class=t style="left:1637.4px;top:508.5px;line-height:14px;font-size:10.9px">fullsize_doorglass_FL</div>
<div class=t style="left:1637.4px;top:528.5px;line-height:14px;font-size:10.9px">fullsize_doorglass_FL_int</div>
<div class=t style="left:1637.4px;top:548.5px;line-height:14px;font-size:10.9px">fullsize_doorglass_FR</div>
<div class=t style="left:1637.4px;top:568.5px;line-height:14px;font-size:10.9px">fullsize_doorglass_FR_int</div>
<div class=t style="left:1637.4px;top:588.5px;line-height:14px;font-size:10.9px">fullsize_doorglass_RL</div>
<div class=t style="left:1637.4px;top:608.5px;line-height:14px;font-size:10.9px">fullsize_doorglass_RL.001_dupl0</div>
<div class=t style="left:1637.4px;top:628.5px;line-height:14px;font-size:10.9px">fullsize_doorglass_RL_int</div>
<div class=t style="left:1637.4px;top:648.5px;line-height:14px;font-size:10.9px">fullsize_doorglass_RR</div>
<div class=t style="left:1637.4px;top:668.5px;line-height:14px;font-size:10.9px">fullsize_doorglass_RR.001_dupl1</div>
<div class=t style="left:1637.4px;top:688.5px;line-height:14px;font-size:10.9px">fullsize_doorglass_RR_int</div>
<div class=t style="left:1637.4px;top:708.5px;line-height:14px;font-size:10.9px">fullsize_doorpanel_FL</div>
<div class=t style="left:1637.4px;top:728.5px;line-height:14px;font-size:10.9px">fullsize_doorpanel_FR</div>
<div class=t style="left:1637.4px;top:748.5px;line-height:14px;font-size:10.9px">fullsize_doorpanel_RL</div>
<div class=t style="left:1637.4px;top:768.5px;line-height:14px;font-size:10.9px">fullsize_doorpanel_RR</div>
<div class=t style="left:1637.4px;top:788.5px;line-height:14px;font-size:10.9px">fullsize_driveshaft</div>
<div class=a style="left:1576px;top:811px;width:328px;height:1px;background:#000"></div>
<div class=a style="left:1887px;top:88px;width:13px;height:720px;background:#5c5c5c;border-radius:6px;border:1px solid #555"></div>
<div class=a style="left:1887px;top:170px;width:13px;height:210px;background:linear-gradient(90deg,#7d7d7d,#a0a0a0 40%,#8a8a8a);border-radius:6px;border:1px solid #3a3a3a"></div>
<svg style="left:1576px;top:800px" width="10" height="10"><path d="M0 0 L10 10" stroke="#fff" stroke-width="0.9" opacity="0.85"/><path d="M0 1 L9 10" stroke="#000" stroke-width="0.9" opacity="0.7"/><path d="M0 3 L7 10" stroke="#fff" stroke-width="0.9" opacity="0.85"/><path d="M0 4 L6 10" stroke="#000" stroke-width="0.9" opacity="0.7"/><path d="M0 6 L4 10" stroke="#fff" stroke-width="0.9" opacity="0.85"/><path d="M0 7 L3 10" stroke="#000" stroke-width="0.9" opacity="0.7"/></svg>
<div class=a style="left:1576px;top:812px;width:328px;height:220px;background:#727272"></div>
<div class=a style="left:1576px;top:812px;width:328px;height:26px;background:#696969"></div>
<div class=a style="left:1576px;top:838px;width:328px;height:1px;background:#7c7c7c"></div>
<svg style="left:1894px;top:813px;" width="10" height="10"><path d="M0 0 L10 10" stroke="#fff" stroke-width="0.9" opacity="0.85"/><path d="M1 0 L10 9" stroke="#000" stroke-width="0.9" opacity="0.7"/><path d="M3 0 L10 7" stroke="#fff" stroke-width="0.9" opacity="0.85"/><path d="M4 0 L10 6" stroke="#000" stroke-width="0.9" opacity="0.7"/><path d="M6 0 L10 4" stroke="#fff" stroke-width="0.9" opacity="0.85"/><path d="M7 0 L10 3" stroke="#000" stroke-width="0.9" opacity="0.7"/></svg>
<div class=mn style="left:1585px;top:816px;width:30px;height:19px;"></div>
<svg style="left:1589px;top:818px" width="14" height="15"><rect x="1" y="2" width="11" height="4" rx="1.5" fill="#ddd" stroke="#222" stroke-width="0.8"/><rect x="1" y="8.5" width="11" height="4" rx="1.5" fill="#ddd" stroke="#222" stroke-width="0.8"/><rect x="7" y="3" width="3" height="2" fill="#444"/><rect x="3" y="9.5" width="3" height="2" fill="#444"/></svg>
<svg style="left:1605px;top:818px" width="7" height="14"><path d="M0.5 5.5 L3.5 1 L6.5 5.5Z M0.5 8.5 L3.5 13 L6.5 8.5Z" fill="#bbb"/></svg>
<div class=mn style="left:1624px;top:816px;width:21px;height:19px;border-radius:4px 0 0 4px;background:linear-gradient(#5e8ccc,#4a78b8)"></div>
<svg style="left:1627.5px;top:818.5px" width="14" height="14"><rect x="1" y="3" width="12" height="9" rx="1" fill="#ddd" stroke="#111" stroke-width="0.9"/><rect x="3" y="1.5" width="3" height="2" fill="#ddd" stroke="#111" stroke-width="0.7"/><circle cx="7" cy="7.5" r="3" fill="#334" stroke="#111" stroke-width="0.8"/><circle cx="7.6" cy="8" r="1.6" fill="#a44"/><circle cx="3" cy="5" r="0.8" fill="#e00"/></svg>
<div class=mn style="left:1643px;top:816px;width:21px;height:19px;border-radius:0;"></div>
<svg style="left:1646.5px;top:818.5px" width="14" height="14"><rect x="2" y="3" width="10" height="9" fill="#c8c8b8" stroke="#222" stroke-width="0.8" transform="rotate(-8 7 7)"/><rect x="4" y="1.5" width="8" height="9" fill="#9ab" stroke="#222" stroke-width="0.8"/></svg>
<div class=mn style="left:1663px;top:816px;width:21px;height:19px;border-radius:0;"></div>
<svg style="left:1666.5px;top:818.5px" width="14" height="14"><circle cx="4.5" cy="10" r="3.3" fill="#ddd" stroke="#222" stroke-width="0.8"/><rect x="7" y="2.5" width="5" height="8" rx="2" fill="#4c7fd0" stroke="#222" stroke-width="0.8"/><circle cx="2.5" cy="2.5" r="1.6" fill="#ffec6b"/></svg>
<div class=mn style="left:1683px;top:816px;width:21px;height:19px;border-radius:0;"></div>
<svg style="left:1686.5px;top:818.5px" width="14" height="14"><circle cx="7" cy="7" r="5.8" fill="#3a6fa8" stroke="#222" stroke-width="0.8"/><path d="M3 5 Q5 3 7 5 Q6 8 4 8Z M8 9 Q10 7 11 9 Q10 11 8 11Z" fill="#6a9a5a"/></svg>
<div class=mn style="left:1703px;top:816px;width:21px;height:19px;border-radius:0;"></div>
<svg style="left:1706.5px;top:818.5px" width="14" height="14"><path d="M1.5 4 L7 1.5 L12.5 4 L12.5 10.5 L7 13 L1.5 10.5Z" fill="#d4a060" stroke="#222" stroke-width="0.8"/><path d="M1.5 4 L7 6.5 L12.5 4 M7 6.5 V13" stroke="#6a4a20" stroke-width="0.7" fill="none"/><path d="M7 6.5 L12.5 4 L12.5 10.5 L7 13Z" fill="#b07a40"/></svg>
<div class=mn style="left:1723px;top:816px;width:21px;height:19px;border-radius:0;"></div>
<svg style="left:1726.5px;top:818.5px" width="14" height="14"><path d="M2 9 L5 6 A2 2 0 0 1 8 9 L5 12 A2 2 0 0 1 2 9Z M6 5 L9 2 A2 2 0 0 1 12 5 L9 8" fill="none" stroke="#ccc" stroke-width="1.5"/></svg>
<div class=mn style="left:1743px;top:816px;width:21px;height:19px;border-radius:0;"></div>
<svg style="left:1746.5px;top:818.5px" width="14" height="14"><path d="M2 12 L8 6" stroke="#6a9ad0" stroke-width="2.5"/><circle cx="9.5" cy="4.5" r="3" fill="none" stroke="#6a9ad0" stroke-width="2"/></svg>
<div class=mn style="left:1763px;top:816px;width:21px;height:19px;border-radius:0;"></div>
<svg style="left:1766.5px;top:818.5px" width="14" height="14"><path d="M1.8 2 H11.2 L6.5 11.5Z" fill="none" stroke="#ddd" stroke-width="1"/><circle cx="1.8" cy="2" r="1.3" fill="#eee" stroke="#222" stroke-width="0.6"/><circle cx="11.2" cy="2" r="1.3" fill="#eee" stroke="#222" stroke-width="0.6"/><circle cx="6.5" cy="11.5" r="1.3" fill="#eee" stroke="#222" stroke-width="0.6"/></svg>
<div class=mn style="left:1783px;top:816px;width:21px;height:19px;border-radius:0;"></div>
<svg style="left:1786.5px;top:818.5px" width="14" height="14"><circle cx="7" cy="7" r="5.8" fill="#8a8a8a" stroke="#222" stroke-width="0.8"/><path d="M7 1.2 A5.8 5.8 0 0 1 12.8 7 L7 7Z" fill="#c8b0b0"/><path d="M1.2 7 A5.8 5.8 0 0 0 7 12.8 L7 7Z" fill="#c8b0b0"/></svg>
<div class=mn style="left:1803px;top:816px;width:21px;height:19px;border-radius:0;"></div>
<svg style="left:1806.5px;top:818.5px" width="14" height="14"><rect x="1.5" y="1.5" width="11" height="11" fill="#eee" stroke="#222" stroke-width="0.8"/><rect x="1.5" y="1.5" width="2.75" height="2.75" fill="#b33"/><rect x="1.5" y="7.0" width="2.75" height="2.75" fill="#b33"/><rect x="4.25" y="4.25" width="2.75" height="2.75" fill="#b33"/><rect x="4.25" y="9.75" width="2.75" height="2.75" fill="#b33"/><rect x="7.0" y="1.5" width="2.75" height="2.75" fill="#b33"/><rect x="7.0" y="7.0" width="2.75" height="2.75" fill="#b33"/><rect x="9.75" y="4.25" width="2.75" height="2.75" fill="#b33"/><rect x="9.75" y="9.75" width="2.75" height="2.75" fill="#b33"/></svg>
<div class=mn style="left:1823px;top:816px;width:21px;height:19px;border-radius:0;"></div>
<svg style="left:1826.5px;top:818.5px" width="14" height="14"><path d="M4 1 V8 M0.5 4.5 H7.5 M10 5 V13 M6 9 H14 M4 9 V13 M2 11 H6" stroke="#e8d070" stroke-width="1.2"/></svg>
<div class=mn style="left:1843px;top:816px;width:21px;height:19px;border-radius:0 4px 4px 0;"></div>
<svg style="left:1846.5px;top:818.5px" width="14" height="14"><path d="M2 7 L6 11 L12 3" stroke="#3a6fd0" stroke-width="2.5" fill="none"/><circle cx="10.5" cy="3.5" r="2.5" fill="#ddd" stroke="#222" stroke-width="0.6"/></svg>
<div class=a style="left:1576px;top:839px;width:310px;height:193px;background:#727272"></div>
<svg style="left:1587px;top:848px" width="16" height="16"><path d="M2 14 L7 9" stroke="#111" stroke-width="2.2"/><path d="M2 14 L7 9" stroke="#ddd" stroke-width="1"/><path d="M5 5.5 L10.5 11 L11.5 8.5 L14 6 L9.5 1.5 L7 4 Z" fill="#e8e8e8" stroke="#111" stroke-width="0.9"/></svg>
<svg style="left:1609px;top:848px" width="14" height="14"><circle cx="4.5" cy="10" r="3.3" fill="#ddd" stroke="#222" stroke-width="0.8"/><rect x="7" y="2.5" width="5" height="8" rx="2" fill="#4c7fd0" stroke="#222" stroke-width="0.8"/><circle cx="2.5" cy="2.5" r="1.6" fill="#ffec6b"/></svg>
<div class=t style="left:1628.5px;top:850.0px;line-height:14px;">Scene</div>
<div class=a style="left:1581px;top:873px;width:301px;height:1px;background:#5a5a5a"></div>
<div class=a style="left:1581px;top:874px;width:301px;height:1px;background:#888"></div>
<svg style="left:1589px;top:881px" width="9" height="9"><path d="M0 0 L9 0 L4.5 8Z" fill="#222"/></svg>
<div class=t style="left:1601px;top:879.0px;line-height:14px;font-size:12px">Render</div>
<svg style="left:1866px;top:883px" width="12" height="6"><rect x="0" y="0" width="1" height="1" fill="#ddd"/><rect x="0" y="1" width="1" height="1" fill="#111"/><rect x="0" y="3" width="1" height="1" fill="#ddd"/><rect x="0" y="4" width="1" height="1" fill="#111"/><rect x="3" y="0" width="1" height="1" fill="#ddd"/><rect x="3" y="1" width="1" height="1" fill="#111"/><rect x="3" y="3" width="1" height="1" fill="#ddd"/><rect x="3" y="4" width="1" height="1" fill="#111"/><rect x="6" y="0" width="1" height="1" fill="#ddd"/><rect x="6" y="1" width="1" height="1" fill="#111"/><rect x="6" y="3" width="1" height="1" fill="#ddd"/><rect x="6" y="4" width="1" height="1" fill="#111"/><rect x="9" y="0" width="1" height="1" fill="#ddd"/><rect x="9" y="1" width="1" height="1" fill="#111"/><rect x="9" y="3" width="1" height="1" fill="#ddd"/><rect x="9" y="4" width="1" height="1" fill="#111"/></svg>
<div class=bt style="left:1585px;top:907px;width:97px;height:19px;border-radius:4px 0 0 4px;"></div>
<div class=t style="left:1623.5px;top:910.0px;line-height:14px;color:#000;">Render</div>
<div class=bt style="left:1681px;top:907px;width:99px;height:19px;border-radius:0;"></div>
<div class=t style="left:1712px;top:910.0px;line-height:14px;color:#000;">Animation</div>
<div class=bt style="left:1779px;top:907px;width:100px;height:19px;border-radius:0 4px 4px 0;"></div>
<div class=t style="left:1822px;top:910.0px;line-height:14px;color:#000;">Audio</div>
<svg style="left:1588px;top:909px" width="14" height="14"><rect x="1" y="3" width="12" height="9" rx="1" fill="#ddd" stroke="#111" stroke-width="0.9"/><rect x="3" y="1.5" width="3" height="2" fill="#ddd" stroke="#111" stroke-width="0.7"/><circle cx="7" cy="7.5" r="3" fill="#334" stroke="#111" stroke-width="0.8"/><circle cx="7.6" cy="8" r="1.6" fill="#a44"/><circle cx="3" cy="5" r="0.8" fill="#e00"/><path d="M11 0 V4 M9 2 H13" stroke="#fe3" stroke-width="1.2"/></svg>
<svg style="left:1685px;top:909px" width="14" height="14"><rect x="1" y="6" width="12" height="7" fill="#ddd" stroke="#111" stroke-width="0.9"/><path d="M1 5.5 L12 2 L12.5 4 L1.5 7.5Z" fill="#333" stroke="#111" stroke-width="0.6"/><path d="M4 4.5 L5 6 M7 3.5 L8 5 M10 2.7 L11 4" stroke="#fff" stroke-width="0.8"/></svg>
<svg style="left:1783px;top:909px" width="16" height="14"><path d="M1 5 H4 L8 1.5 V12.5 L4 9 H1Z" fill="#ddd" stroke="#222" stroke-width="0.9"/><path d="M10 4 Q12 7 10 10 M12 2 Q15.5 7 12 12" stroke="#4a7ad0" stroke-width="1.3" fill="none"/></svg>
<div class=t style="left:1591.5px;top:935.0px;line-height:14px;">Display:</div>
<div class=mn style="left:1686px;top:932px;width:173px;height:19px;border-radius:4px 0 0 4px;"></div>
<div class=t style="left:1694px;top:935.0px;line-height:14px;color:#fff;">Image Editor</div>
<svg style="left:1848px;top:935px" width="7" height="14"><path d="M0.5 5.5 L3.5 1 L6.5 5.5Z M0.5 8.5 L3.5 13 L6.5 8.5Z" fill="#bbb"/></svg>
<div class=bt style="left:1858px;top:932px;width:21px;height:19px;border-radius:0 4px 4px 0;"></div>
<svg style="left:1861px;top:933px" width="16" height="16"><path d="M3 7 V4.5 A2.8 2.8 0 0 1 8.6 4.5" stroke="#222" stroke-width="1.3" fill="none"/><rect x="4.5" y="7" width="9" height="7" fill="#ddd" stroke="#222" stroke-width="0.9"/><rect x="8.5" y="9" width="1" height="3" fill="#333"/></svg>
<div class=a style="left:1581px;top:958px;width:301px;height:1px;background:#5a5a5a"></div>
<div class=a style="left:1581px;top:959px;width:301px;height:1px;background:#888"></div>
<svg style="left:1589px;top:966px" width="9" height="9"><path d="M0 0 L9 0 L4.5 8Z" fill="#222"/></svg>
<div class=t style="left:1601px;top:964.0px;line-height:14px;font-size:12px">Dimensions</div>
<svg style="left:1866px;top:968px" width="12" height="6"><rect x="0" y="0" width="1" height="1" fill="#ddd"/><rect x="0" y="1" width="1" height="1" fill="#111"/><rect x="0" y="3" width="1" height="1" fill="#ddd"/><rect x="0" y="4" width="1" height="1" fill="#111"/><rect x="3" y="0" width="1" height="1" fill="#ddd"/><rect x="3" y="1" width="1" height="1" fill="#111"/><rect x="3" y="3" width="1" height="1" fill="#ddd"/><rect x="3" y="4" width="1" height="1" fill="#111"/><rect x="6" y="0" width="1" height="1" fill="#ddd"/><rect x="6" y="1" width="1" height="1" fill="#111"/><rect x="6" y="3" width="1" height="1" fill="#ddd"/><rect x="6" y="4" width="1" height="1" fill="#111"/><rect x="9" y="0" width="1" height="1" fill="#ddd"/><rect x="9" y="1" width="1" height="1" fill="#111"/><rect x="9" y="3" width="1" height="1" fill="#ddd"/><rect x="9" y="4" width="1" height="1" fill="#111"/></svg>
<div class=mn style="left:1585px;top:992px;width:254px;height:19px;border-radius:4px 0 0 4px;"></div>
<div class=t style="left:1592px;top:995.0px;line-height:14px;color:#fff;">Render Presets</div>
<svg style="left:1828px;top:995px" width="7" height="14"><path d="M0.5 5.5 L3.5 1 L6.5 5.5Z M0.5 8.5 L3.5 13 L6.5 8.5Z" fill="#bbb"/></svg>
<div class=bt style="left:1838px;top:992px;width:21px;height:19px;border-radius:0;"></div>
<div class=bt style="left:1858px;top:992px;width:21px;height:19px;border-radius:0 4px 4px 0;"></div>
<svg style="left:1841.5px;top:994.5px" width="14" height="14"><path d="M7 1.5 V12.5 M1.5 7 H12.5" stroke="#000" stroke-width="3.2"/><path d="M7 2.5 V11.5 M2.5 7 H11.5" stroke="#fff" stroke-width="1.4"/></svg>
<svg style="left:1861.5px;top:994.5px" width="14" height="14"><path d="M1.5 7 H12.5" stroke="#000" stroke-width="3.2"/><path d="M2.5 7 H11.5" stroke="#fff" stroke-width="1.4"/></svg>
<div class=t style="left:1591.5px;top:1019.0px;line-height:14px;">Resolution:</div>
<div class=t style="left:1743.5px;top:1019.0px;line-height:14px;">Frame Range:</div>
<div class=t style="left:1591px;top:946.0px;line-height:24px;font-size:20px;color:rgba(255,255,255,0.42);-webkit-text-stroke:0">Activate Windows</div>
<div class=t style="left:1591px;top:972.0px;line-height:18px;font-size:14.5px;color:rgba(255,255,255,0.42);-webkit-text-stroke:0">Go to Settings to activate Windows.</div>
<div class=a style="left:1888px;top:844px;width:12px;height:186px;background:#5c5c5c;border-radius:6px;border:1px solid #555"></div>
<div class=a style="left:1888px;top:844px;width:12px;height:46px;background:linear-gradient(90deg,#7d7d7d,#a0a0a0 40%,#8a8a8a);border-radius:6px;border:1px solid #3a3a3a"></div>
<div class=a style="left:1576px;top:1032px;width:331px;height:2px;background:#1a1a1a"></div>
<svg style="left:1576px;top:1021px" width="10" height="10"><path d="M0 0 L10 10" stroke="#fff" stroke-width="0.9" opacity="0.85"/><path d="M0 1 L9 10" stroke="#000" stroke-width="0.9" opacity="0.7"/><path d="M0 3 L7 10" stroke="#fff" stroke-width="0.9" opacity="0.85"/><path d="M0 4 L6 10" stroke="#000" stroke-width="0.9" opacity="0.7"/><path d="M0 6 L4 10" stroke="#fff" stroke-width="0.9" opacity="0.85"/><path d="M0 7 L3 10" stroke="#000" stroke-width="0.9" opacity="0.7"/></svg></body></html>
